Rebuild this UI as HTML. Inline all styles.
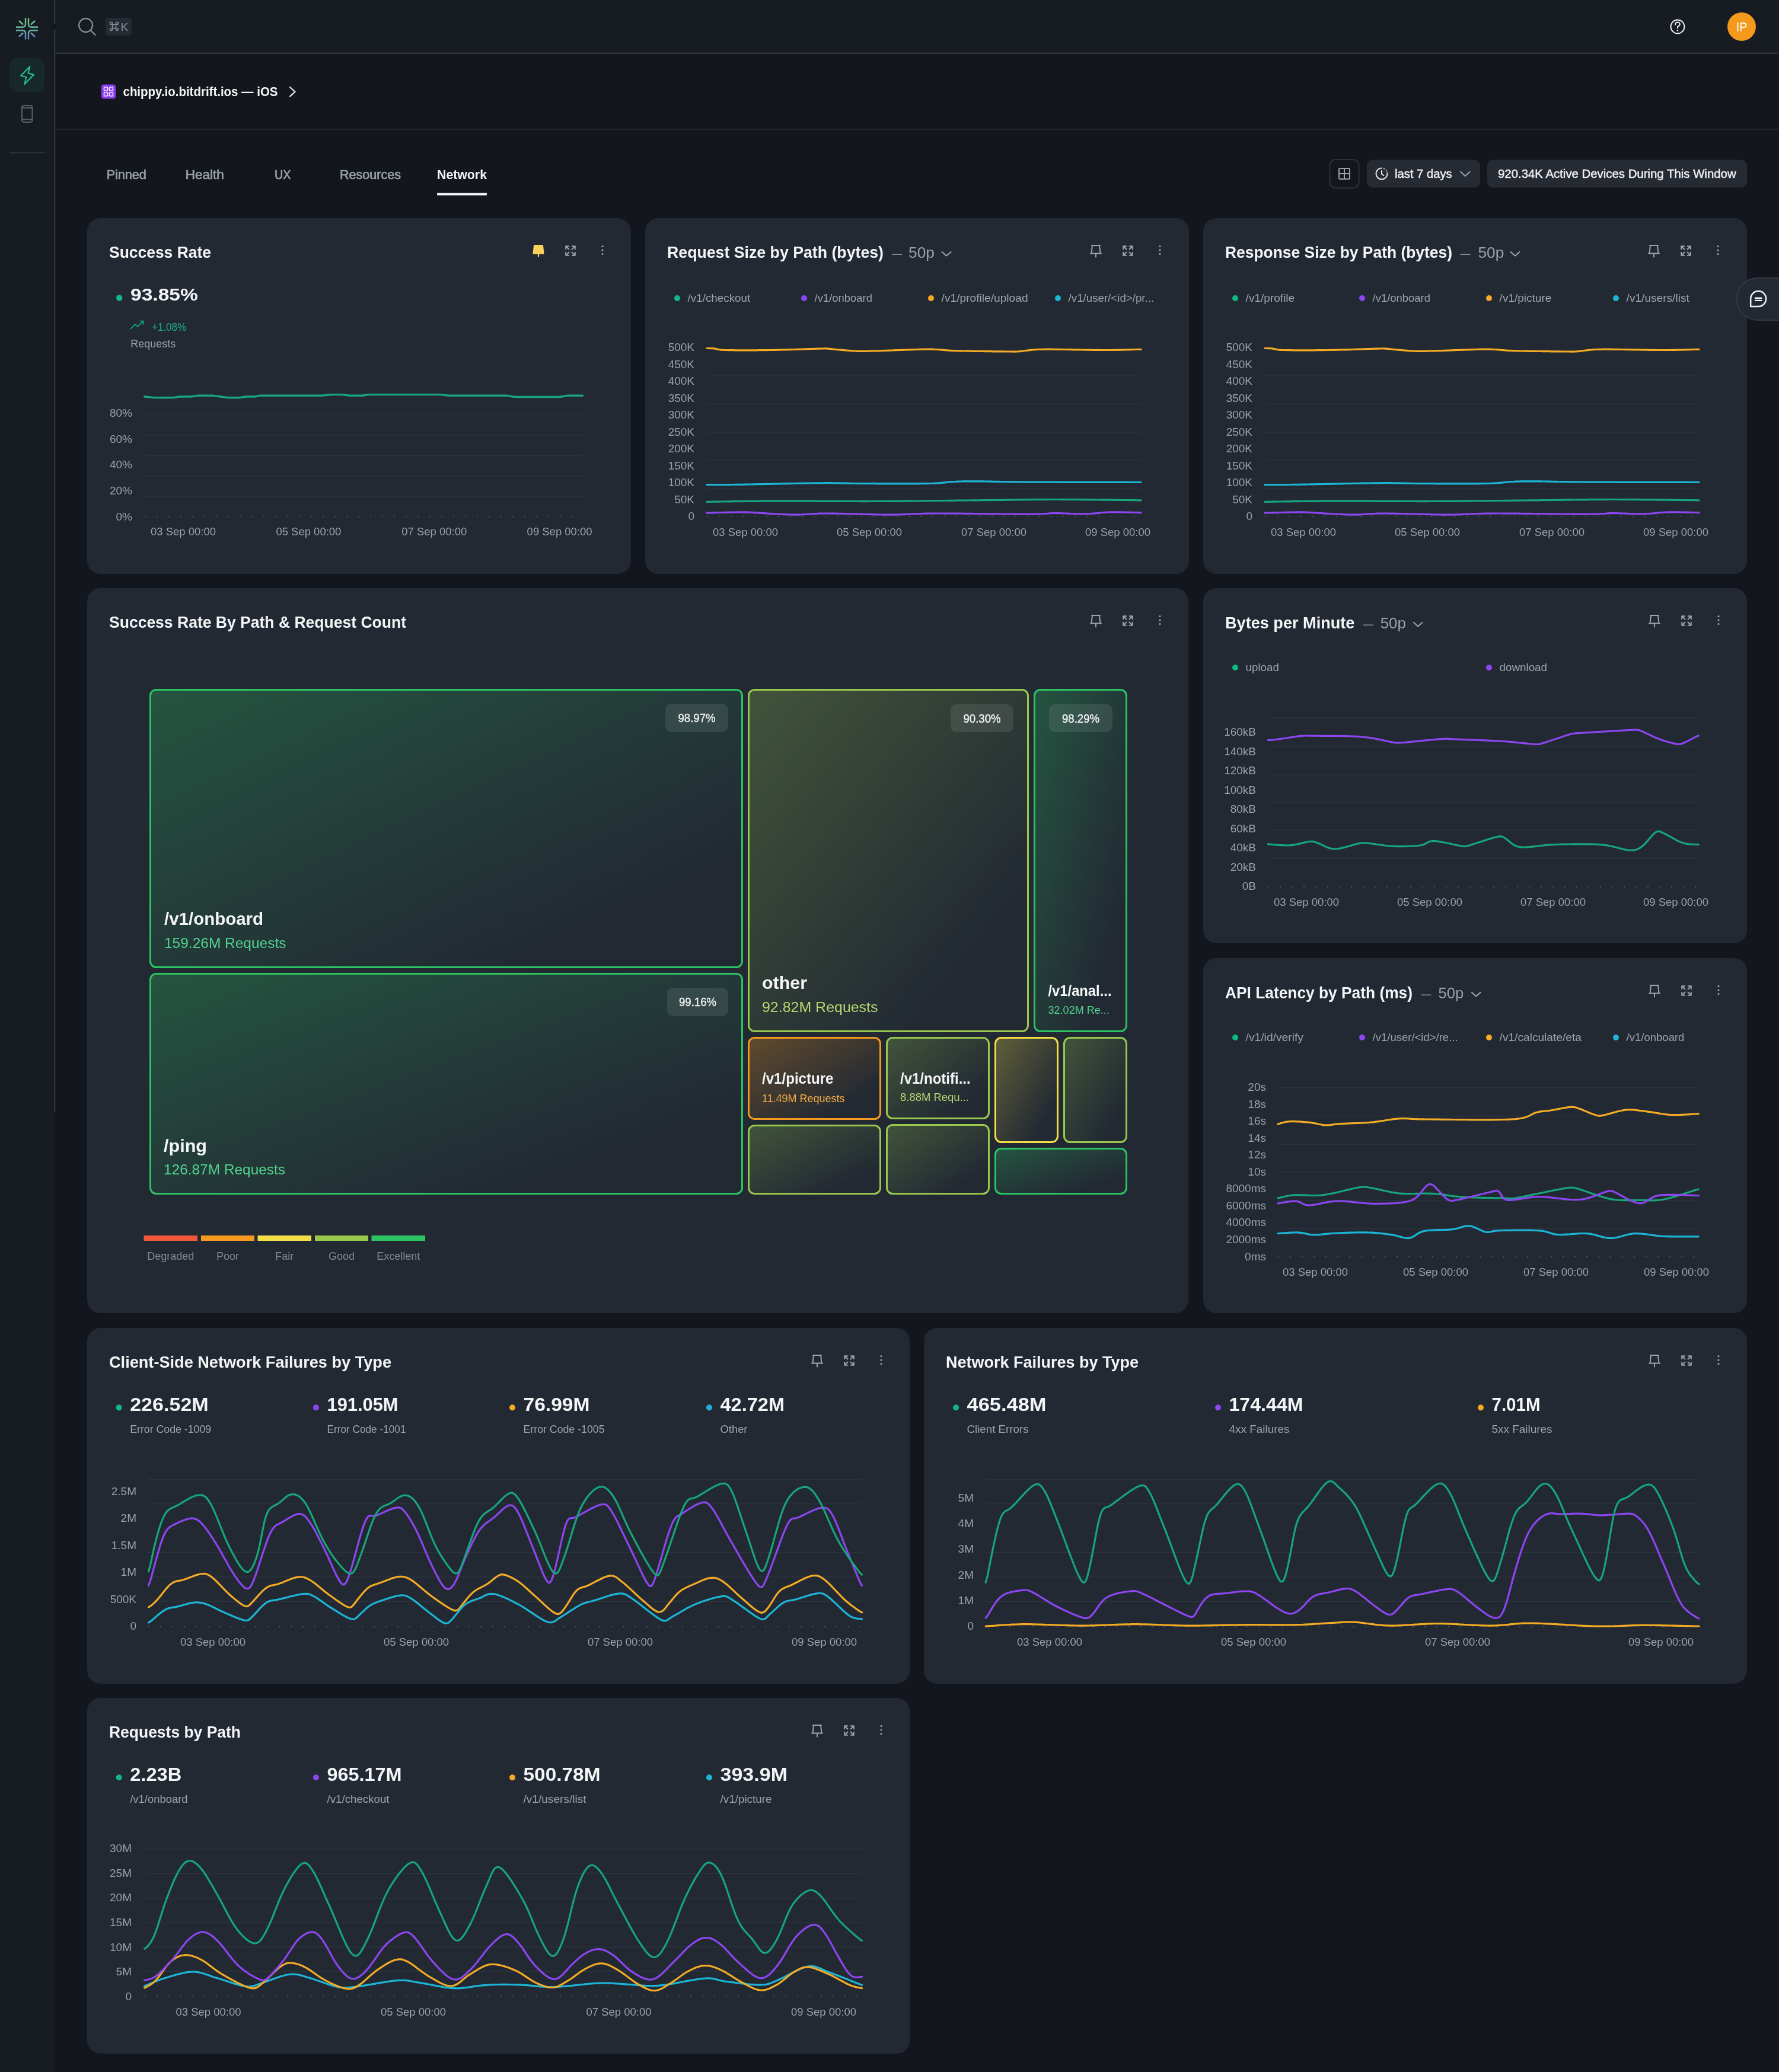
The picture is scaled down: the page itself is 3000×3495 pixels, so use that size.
<!DOCTYPE html>
<html><head><meta charset="utf-8"><title>Network</title>
<style>html,body{margin:0;padding:0;background:#13161c;width:3000px;height:3495px;overflow:hidden}
svg{display:block;will-change:transform} text{font-family:"Liberation Sans",sans-serif}</style></head>
<body><svg width="3000" height="3495" viewBox="0 0 3000 3495">
<rect x="0" y="0" width="3000" height="3495" fill="#13161c"/>
<rect x="0" y="0" width="92" height="3495" fill="#171c23"/>
<rect x="92" y="0" width="2908" height="89" fill="#171c23"/>
<rect x="92" y="88.5" width="2908" height="2.5" fill="#2c3139"/>
<rect x="92" y="217" width="2908" height="2" fill="#22262d"/>
<rect x="91.3" y="0" width="2" height="1875" fill="#33383f"/>
<defs><linearGradient id="lg" gradientUnits="userSpaceOnUse" x1="0" y1="30" x2="0" y2="67"><stop offset="0" stop-color="#72c87f"/><stop offset="0.5" stop-color="#63b59c"/><stop offset="1" stop-color="#6b7fd6"/></linearGradient></defs>
<g stroke="url(#lg)" stroke-width="2.4" fill="none" stroke-linecap="butt"><path d="M43 30.5 V40.5 Q43 45.7 37.8 45.7 H27"/><path d="M32 35 L39 41.5"/><path d="M48 30.5 V40.5 Q48 45.7 53.2 45.7 H64"/><path d="M59 35 L52 41.5"/><path d="M43 66.5 V56.5 Q43 51.2 37.8 51.2 H27"/><path d="M32 62 L39 55.5"/><path d="M48 66.5 V56.5 Q48 51.2 53.2 51.2 H64"/><path d="M59 62 L52 55.5"/></g>
<circle cx="92" cy="45" r="4.5" fill="#111419" fill-opacity="0.8"/>
<rect x="16" y="98" width="59" height="58" rx="14" fill="#17282a"/>
<path d="M50.4 112.2 L35.2 127.8 L44.3 130 L41.3 142.1 L56.9 126 L47.4 123.4 Z" fill="none" stroke="#23be8c" stroke-width="2.2" stroke-linejoin="round"/>
<rect x="37" y="178" width="17.5" height="28" rx="3.5" fill="none" stroke="#5a6069" stroke-width="2"/>
<path d="M37 182 H54.5 M37 201.5 H54.5" stroke="#5a6069" stroke-width="2"/>
<rect x="16" y="256.5" width="60" height="2" fill="#2e333b"/>
<circle cx="144.6" cy="42.6" r="11.5" fill="none" stroke="#8a9099" stroke-width="2.2"/>
<path d="M153 51.4 L160.8 59" stroke="#8a9099" stroke-width="2.2" stroke-linecap="round"/>
<rect x="178" y="30" width="44" height="30" rx="4" fill="#252a33"/>
<g fill="none" stroke="#8a9099" stroke-width="1.5"><path d="M189.5 41.5 V47.5 M195.5 41.5 V47.5 M189.5 41.5 H195.5 M189.5 47.5 H195.5"/><path d="M189.5 41.5 H187.5 A2 2 0 1 1 189.5 39.5 Z M195.5 41.5 V39.5 A2 2 0 1 1 197.5 41.5 Z M189.5 47.5 V49.5 A2 2 0 1 1 187.5 47.5 Z M195.5 47.5 H197.5 A2 2 0 1 1 195.5 49.5 Z"/></g>
<text x="203.5" y="52.0" font-size="19" fill="#8a9099">K</text>
<circle cx="2829" cy="45" r="11.5" fill="none" stroke="#e9ebee" stroke-width="2"/>
<path d="M2825.2 41.5 Q2825.2 37.5 2829 37.5 Q2832.8 37.5 2832.8 41 Q2832.8 43.5 2829 45 V47.5" fill="none" stroke="#e9ebee" stroke-width="2" stroke-linecap="round"/>
<circle cx="2829" cy="51.5" r="1.3" fill="#e9ebee"/>
<circle cx="2937" cy="45" r="24" fill="#f39a1c"/>
<text x="2937.0" y="52.5" font-size="21.5" fill="#ffffff" text-anchor="middle" textLength="18.5" lengthAdjust="spacingAndGlyphs">IP</text>
<rect x="171" y="142.5" width="24" height="24" rx="4" fill="#8a3ff2"/>
<rect x="175.5" y="147" width="6" height="6" rx="1.2" fill="none" stroke="#f5e8ff" stroke-width="1.6"/>
<rect x="184.5" y="147" width="6" height="6" rx="1.2" fill="none" stroke="#f5e8ff" stroke-width="1.6"/>
<rect x="175.5" y="156" width="6" height="6" rx="1.2" fill="none" stroke="#f5e8ff" stroke-width="1.6"/>
<rect x="184.5" y="156" width="6" height="6" rx="1.2" fill="none" stroke="#f5e8ff" stroke-width="1.6"/>
<text x="207.5" y="162.3" font-size="22" fill="#f4f5f7" font-weight="700" textLength="261" lengthAdjust="spacingAndGlyphs">chippy.io.bitdrift.ios — iOS</text>
<path d="M489 147 L497.5 154.8 L489 162.6" fill="none" stroke="#e9ebee" stroke-width="2.2" stroke-linecap="round" stroke-linejoin="round"/>
<text x="179.7" y="302.0" font-size="22" fill="#98a1aa" textLength="67" lengthAdjust="spacingAndGlyphs" stroke="#98a1aa" stroke-width="0.7">Pinned</text>
<text x="312.7" y="302.0" font-size="22" fill="#98a1aa" textLength="65" lengthAdjust="spacingAndGlyphs" stroke="#98a1aa" stroke-width="0.7">Health</text>
<text x="463.0" y="302.0" font-size="22" fill="#98a1aa" textLength="27.5" lengthAdjust="spacingAndGlyphs" stroke="#98a1aa" stroke-width="0.7">UX</text>
<text x="573.0" y="302.0" font-size="22" fill="#98a1aa" textLength="103" lengthAdjust="spacingAndGlyphs" stroke="#98a1aa" stroke-width="0.7">Resources</text>
<text x="737.0" y="302.0" font-size="22" fill="#f4f5f7" font-weight="700" textLength="84" lengthAdjust="spacingAndGlyphs">Network</text>
<rect x="737" y="325.5" width="84" height="4" rx="1" fill="#f4f5f7"/>
<rect x="2242.5" y="269" width="49" height="48" rx="10" fill="none" stroke="#2c3139" stroke-width="2"/>
<g fill="none" stroke="#9aa1ab" stroke-width="2"><rect x="2258" y="284" width="18" height="18" rx="2"/><path d="M2267 284 V302 M2258 293 H2276"/></g>
<rect x="2305" y="269.5" width="191" height="47" rx="10" fill="#262b33"/>
<path d="M2339.5 293 A9.5 9.5 0 1 1 2330 283.5" fill="none" stroke="#e6e8eb" stroke-width="2" stroke-linecap="round"/>
<path d="M2330 288 V293.5 L2333.5 296" fill="none" stroke="#e6e8eb" stroke-width="2" stroke-linecap="round"/>
<circle cx="2334" cy="284.5" r="1" fill="#e6e8eb"/><circle cx="2337.5" cy="287" r="1" fill="#e6e8eb"/><circle cx="2339" cy="290.5" r="1" fill="#e6e8eb"/>
<text x="2352.0" y="300.0" font-size="20.3" fill="#eceef1" textLength="96.7" lengthAdjust="spacingAndGlyphs" stroke="#eceef1" stroke-width="0.5">last 7 days</text>
<path d="M2463 289.5 L2470.8 297 L2478.6 289.5" fill="none" stroke="#9aa1ab" stroke-width="2" stroke-linecap="round" stroke-linejoin="round"/>
<rect x="2508" y="269.5" width="438" height="47" rx="10" fill="#262b33"/>
<text x="2526.0" y="300.0" font-size="20.3" fill="#eceef1" textLength="401.6" lengthAdjust="spacingAndGlyphs" stroke="#eceef1" stroke-width="0.5">920.34K Active Devices During This Window</text>
<rect x="147" y="368" width="917" height="600" rx="22" fill="#222933"/>
<text x="184.0" y="435.0" font-size="27" fill="#f4f5f7" font-weight="700" textLength="172" lengthAdjust="spacingAndGlyphs">Success Rate</text>
<path d="M901 414 H915 L916.5 427.5 H899.5 Z" fill="#fcd15a" stroke="#fcd15a" stroke-width="2" stroke-linejoin="round"/>
<path d="M908 427 V433.5" stroke="#fcd15a" stroke-width="2.2"/>
<g stroke="#9ba3ad" stroke-width="2" fill="none" stroke-linecap="round" stroke-linejoin="round"><path d="M954.2 420.2 V415.2 H959.2 M954.2 415.2 L959.5 420.5"/><path d="M969.8 420.2 V415.2 H964.8 M969.8 415.2 L964.5 420.5"/><path d="M954.2 425.8 V430.8 H959.2 M954.2 430.8 L959.5 425.5"/><path d="M969.8 425.8 V430.8 H964.8 M969.8 430.8 L964.5 425.5"/></g>
<circle cx="1016" cy="415.5" r="1.6" fill="#9ba3ad"/>
<circle cx="1016" cy="422" r="1.6" fill="#9ba3ad"/>
<circle cx="1016" cy="428.5" r="1.6" fill="#9ba3ad"/>
<circle cx="201.2" cy="502.5" r="5.2" fill="#10b981"/>
<text x="220.0" y="507.4" font-size="30" fill="#f4f5f7" font-weight="700" textLength="113.8" lengthAdjust="spacingAndGlyphs">93.85%</text>
<path d="M220.5 554.5 L228 547 L232 551 L241.5 541.5 M236 541.5 H241.5 V547" fill="none" stroke="#10b981" stroke-width="1.6" stroke-linecap="round" stroke-linejoin="round"/>
<text x="256.0" y="558.0" font-size="17.6" fill="#1fb27f" textLength="58" lengthAdjust="spacingAndGlyphs">+1.08%</text>
<text x="220.3" y="586.0" font-size="17.6" fill="#9ca3ab" textLength="76" lengthAdjust="spacingAndGlyphs">Requests</text>
<text x="223.0" y="703.0" font-size="19" fill="#9aa1ab" text-anchor="end">80%</text>
<text x="223.0" y="746.6" font-size="19" fill="#9aa1ab" text-anchor="end">60%</text>
<text x="223.0" y="790.2" font-size="19" fill="#9aa1ab" text-anchor="end">40%</text>
<text x="223.0" y="833.9" font-size="19" fill="#9aa1ab" text-anchor="end">20%</text>
<text x="223.0" y="877.5" font-size="19" fill="#9aa1ab" text-anchor="end">0%</text>
<path d="M244 699.6 H984" stroke="#2c333d" stroke-width="1.5"/>
<path d="M244 734.0 H984" stroke="#2c333d" stroke-width="1.5"/>
<path d="M244 768.6 H984" stroke="#2c333d" stroke-width="1.5"/>
<path d="M244 803.0 H984" stroke="#2c333d" stroke-width="1.5"/>
<path d="M244 837.9 H984" stroke="#2c333d" stroke-width="1.5"/>
<path d="M244 871.6 H984" stroke="#4a515b" stroke-width="2" stroke-dasharray="2 18"/>
<text x="254.0" y="903.0" font-size="18.5" fill="#9aa1ab" textLength="110" lengthAdjust="spacingAndGlyphs">03 Sep 00:00</text>
<text x="465.4" y="903.0" font-size="18.5" fill="#9aa1ab" textLength="110" lengthAdjust="spacingAndGlyphs">05 Sep 00:00</text>
<text x="677.3" y="903.0" font-size="18.5" fill="#9aa1ab" textLength="110" lengthAdjust="spacingAndGlyphs">07 Sep 00:00</text>
<text x="888.6" y="903.0" font-size="18.5" fill="#9aa1ab" textLength="110" lengthAdjust="spacingAndGlyphs">09 Sep 00:00</text>
<polyline points="243.5,669.0 260.6,670.8 292.7,670.8 303.3,669.0 322.6,669.0 333.2,667.3 358.9,667.3 384.5,670.8 403.7,670.8 414.4,669.0 429.4,669.0 437.9,667.3 542.6,667.3 559.6,665.6 576.7,665.6 589.5,667.3 610.9,667.3 621.6,665.6 743.3,665.6 756.1,667.3 854.4,667.3 867.2,669.5 944.1,669.5 956.9,667.3 982.5,667.3" fill="none" stroke="#17a57a" stroke-width="3.4" stroke-linejoin="round" stroke-linecap="round"/>
<rect x="1088" y="368" width="917" height="600" rx="22" fill="#222933"/>
<text x="1125.0" y="435.0" font-size="27" fill="#f4f5f7" font-weight="700" textLength="365" lengthAdjust="spacingAndGlyphs">Request Size by Path (bytes)</text>
<text x="1504.0" y="435.0" font-size="22" fill="#8f96a0" textLength="17" lengthAdjust="spacingAndGlyphs">—</text>
<text x="1532.0" y="435.0" font-size="25" fill="#9aa1ab" textLength="44" lengthAdjust="spacingAndGlyphs">50p</text>
<path d="M1588.5 425 L1596 431.5 L1603.5 425" fill="none" stroke="#9aa1ab" stroke-width="2.2" stroke-linecap="round" stroke-linejoin="round"/>
<path d="M1841 414 H1855 M1842 414 L1840.5 427.5 M1854 414 L1855.5 427.5 M1839 427.5 H1857 M1848 427.5 V433.5" stroke="#9ba3ad" stroke-width="2" fill="none" stroke-linecap="round"/>
<g stroke="#9ba3ad" stroke-width="2" fill="none" stroke-linecap="round" stroke-linejoin="round"><path d="M1894.2 420.2 V415.2 H1899.2 M1894.2 415.2 L1899.5 420.5"/><path d="M1909.8 420.2 V415.2 H1904.8 M1909.8 415.2 L1904.5 420.5"/><path d="M1894.2 425.8 V430.8 H1899.2 M1894.2 430.8 L1899.5 425.5"/><path d="M1909.8 425.8 V430.8 H1904.8 M1909.8 430.8 L1904.5 425.5"/></g>
<circle cx="1956" cy="415.5" r="1.6" fill="#9ba3ad"/>
<circle cx="1956" cy="422" r="1.6" fill="#9ba3ad"/>
<circle cx="1956" cy="428.5" r="1.6" fill="#9ba3ad"/>
<circle cx="1142.0" cy="503.0" r="5" fill="#10b981"/>
<text x="1159.6" y="509.0" font-size="19" fill="#9ca3ab" textLength="105.7" lengthAdjust="spacingAndGlyphs">/v1/checkout</text>
<circle cx="1356.0" cy="503.0" r="5" fill="#8c46f0"/>
<text x="1373.6" y="509.0" font-size="19" fill="#9ca3ab" textLength="97.3" lengthAdjust="spacingAndGlyphs">/v1/onboard</text>
<circle cx="1570.0" cy="503.0" r="5" fill="#f3ab25"/>
<text x="1587.6" y="509.0" font-size="19" fill="#9ca3ab" textLength="146" lengthAdjust="spacingAndGlyphs">/v1/profile/upload</text>
<circle cx="1784.0" cy="503.0" r="5" fill="#1db5d6"/>
<text x="1801.6" y="509.0" font-size="19" fill="#9ca3ab" textLength="144.5" lengthAdjust="spacingAndGlyphs">/v1/user/&lt;id&gt;/pr...</text>
<text x="1171.0" y="592.0" font-size="19" fill="#9aa1ab" text-anchor="end">500K</text>
<text x="1171.0" y="620.5" font-size="19" fill="#9aa1ab" text-anchor="end">450K</text>
<text x="1171.0" y="649.0" font-size="19" fill="#9aa1ab" text-anchor="end">400K</text>
<text x="1171.0" y="677.5" font-size="19" fill="#9aa1ab" text-anchor="end">350K</text>
<text x="1171.0" y="706.0" font-size="19" fill="#9aa1ab" text-anchor="end">300K</text>
<text x="1171.0" y="734.5" font-size="19" fill="#9aa1ab" text-anchor="end">250K</text>
<text x="1171.0" y="763.0" font-size="19" fill="#9aa1ab" text-anchor="end">200K</text>
<text x="1171.0" y="791.5" font-size="19" fill="#9aa1ab" text-anchor="end">150K</text>
<text x="1171.0" y="820.0" font-size="19" fill="#9aa1ab" text-anchor="end">100K</text>
<text x="1171.0" y="848.5" font-size="19" fill="#9aa1ab" text-anchor="end">50K</text>
<text x="1171.0" y="877.0" font-size="19" fill="#9aa1ab" text-anchor="end">0</text>
<path d="M1192 634.0 H1924" stroke="#2c333d" stroke-width="1.5"/>
<path d="M1192 682.0 H1924" stroke="#2c333d" stroke-width="1.5"/>
<path d="M1192 729.0 H1924" stroke="#2c333d" stroke-width="1.5"/>
<path d="M1192 776.0 H1924" stroke="#2c333d" stroke-width="1.5"/>
<path d="M1192 824.0 H1924" stroke="#2c333d" stroke-width="1.5"/>
<path d="M1192 871.0 H1924" stroke="#4a515b" stroke-width="2" stroke-dasharray="2 18"/>
<text x="1202.0" y="904.0" font-size="18.5" fill="#9aa1ab" textLength="110" lengthAdjust="spacingAndGlyphs">03 Sep 00:00</text>
<text x="1411.0" y="904.0" font-size="18.5" fill="#9aa1ab" textLength="110" lengthAdjust="spacingAndGlyphs">05 Sep 00:00</text>
<text x="1621.0" y="904.0" font-size="18.5" fill="#9aa1ab" textLength="110" lengthAdjust="spacingAndGlyphs">07 Sep 00:00</text>
<text x="1830.0" y="904.0" font-size="18.5" fill="#9aa1ab" textLength="110" lengthAdjust="spacingAndGlyphs">09 Sep 00:00</text>
<path d="M1192.0 587.5 L1195.0 587.5 L1198.0 587.6 L1201.0 587.7 L1204.0 587.9 L1207.0 588.4 L1210.0 589.1 L1213.0 589.7 L1216.0 590.1 L1219.0 590.3 L1222.0 590.5 L1225.0 590.5 L1228.0 590.6 L1231.0 590.7 L1234.0 590.7 L1237.0 590.7 L1240.0 590.8 L1243.0 590.8 L1246.0 590.8 L1249.0 590.8 L1252.0 590.8 L1255.0 590.8 L1258.0 590.8 L1261.0 590.8 L1264.0 590.8 L1267.0 590.8 L1270.0 590.8 L1273.0 590.8 L1276.0 590.8 L1279.0 590.7 L1282.0 590.7 L1285.0 590.7 L1288.0 590.7 L1291.0 590.6 L1294.0 590.6 L1297.0 590.5 L1300.0 590.5 L1303.0 590.4 L1306.0 590.4 L1309.0 590.3 L1312.0 590.2 L1315.0 590.2 L1318.0 590.1 L1321.0 590.0 L1324.0 589.9 L1327.0 589.8 L1330.0 589.8 L1333.0 589.7 L1336.0 589.6 L1339.0 589.5 L1342.0 589.4 L1345.0 589.3 L1348.0 589.2 L1351.0 589.1 L1354.0 589.0 L1357.0 588.9 L1360.0 588.8 L1363.0 588.7 L1366.0 588.6 L1369.0 588.5 L1372.0 588.4 L1375.0 588.3 L1378.0 588.2 L1381.0 588.1 L1384.0 588.1 L1387.0 588.0 L1390.0 587.9 L1393.0 587.9 L1396.0 588.1 L1399.0 588.4 L1402.0 588.7 L1405.0 589.0 L1408.0 589.3 L1411.0 589.6 L1414.0 589.8 L1417.0 590.1 L1420.0 590.4 L1423.0 590.7 L1426.0 590.9 L1429.0 591.2 L1432.0 591.4 L1435.0 591.6 L1438.0 591.8 L1441.0 592.0 L1444.0 592.2 L1447.0 592.3 L1450.0 592.4 L1453.0 592.4 L1456.0 592.4 L1459.0 592.4 L1462.0 592.3 L1465.0 592.2 L1468.0 592.1 L1471.0 592.0 L1474.0 591.9 L1477.0 591.8 L1480.0 591.8 L1483.0 591.7 L1486.0 591.6 L1489.0 591.5 L1492.0 591.4 L1495.0 591.3 L1498.0 591.2 L1501.0 591.1 L1504.0 591.0 L1507.0 590.8 L1510.0 590.7 L1513.0 590.6 L1516.0 590.5 L1519.0 590.4 L1522.0 590.3 L1525.0 590.2 L1528.0 590.1 L1531.0 590.0 L1534.0 589.9 L1537.0 589.8 L1540.0 589.7 L1543.0 589.6 L1546.0 589.5 L1549.0 589.4 L1552.0 589.3 L1555.0 589.2 L1558.0 589.2 L1561.0 589.1 L1564.0 589.1 L1567.0 589.1 L1570.0 589.1 L1573.0 589.2 L1576.0 589.4 L1579.0 589.5 L1582.0 589.7 L1585.0 589.9 L1588.1 590.1 L1591.1 590.4 L1594.1 590.6 L1597.1 590.9 L1600.1 591.1 L1603.1 591.3 L1606.1 591.4 L1609.1 591.6 L1612.1 591.7 L1615.1 591.8 L1618.1 591.8 L1621.1 591.9 L1624.1 592.0 L1627.1 592.0 L1630.1 592.1 L1633.1 592.2 L1636.1 592.2 L1639.1 592.3 L1642.1 592.3 L1645.1 592.4 L1648.1 592.4 L1651.1 592.5 L1654.1 592.5 L1657.1 592.5 L1660.1 592.6 L1663.1 592.6 L1666.1 592.7 L1669.1 592.7 L1672.1 592.7 L1675.1 592.8 L1678.1 592.8 L1681.1 592.9 L1684.1 592.9 L1687.1 592.9 L1690.1 592.9 L1693.1 593.0 L1696.1 593.0 L1699.1 593.0 L1702.1 593.0 L1705.1 593.0 L1708.1 593.1 L1711.1 593.1 L1714.1 593.0 L1717.1 592.9 L1720.1 592.7 L1723.1 592.3 L1726.1 591.9 L1729.1 591.5 L1732.1 591.2 L1735.1 590.8 L1738.1 590.4 L1741.1 590.1 L1744.1 589.9 L1747.1 589.7 L1750.1 589.5 L1753.1 589.4 L1756.1 589.3 L1759.1 589.3 L1762.1 589.2 L1765.1 589.2 L1768.1 589.2 L1771.1 589.2 L1774.1 589.2 L1777.1 589.3 L1780.1 589.3 L1783.1 589.3 L1786.1 589.4 L1789.1 589.4 L1792.1 589.5 L1795.1 589.5 L1798.1 589.6 L1801.1 589.6 L1804.1 589.7 L1807.1 589.7 L1810.1 589.8 L1813.1 589.8 L1816.1 589.9 L1819.1 589.9 L1822.1 590.0 L1825.1 590.0 L1828.1 590.1 L1831.1 590.1 L1834.1 590.2 L1837.1 590.2 L1840.1 590.3 L1843.1 590.3 L1846.1 590.4 L1849.1 590.4 L1852.1 590.4 L1855.1 590.5 L1858.1 590.5 L1861.1 590.5 L1864.1 590.5 L1867.1 590.5 L1870.1 590.5 L1873.1 590.5 L1876.1 590.4 L1879.1 590.4 L1882.1 590.3 L1885.1 590.3 L1888.1 590.2 L1891.1 590.2 L1894.1 590.1 L1897.1 590.0 L1900.1 589.9 L1903.1 589.9 L1906.1 589.8 L1909.1 589.7 L1912.1 589.6 L1915.1 589.5 L1918.1 589.4 L1921.1 589.3 L1924.1 589.3" fill="none" stroke="#f3ab25" stroke-width="3.2" stroke-linejoin="round" stroke-linecap="round"/>
<path d="M1192.0 817.8 L1195.0 817.7 L1198.0 817.7 L1201.0 817.7 L1204.0 817.7 L1207.0 817.7 L1210.0 817.7 L1213.0 817.7 L1216.0 817.7 L1219.0 817.7 L1222.0 817.6 L1225.0 817.6 L1228.0 817.6 L1231.0 817.6 L1234.0 817.5 L1237.0 817.5 L1240.0 817.4 L1243.0 817.4 L1246.0 817.4 L1249.0 817.3 L1252.0 817.3 L1255.0 817.2 L1258.0 817.2 L1261.0 817.1 L1264.0 817.0 L1267.0 817.0 L1270.0 816.9 L1273.0 816.9 L1276.0 816.8 L1279.0 816.7 L1282.0 816.7 L1285.0 816.6 L1288.0 816.6 L1291.0 816.5 L1294.0 816.4 L1297.0 816.4 L1300.0 816.3 L1303.0 816.2 L1306.0 816.2 L1309.0 816.1 L1312.0 816.1 L1315.0 816.0 L1318.0 815.9 L1321.0 815.9 L1324.0 815.8 L1327.0 815.7 L1330.0 815.7 L1333.0 815.6 L1336.0 815.6 L1339.0 815.5 L1342.0 815.4 L1345.0 815.4 L1348.0 815.3 L1351.0 815.3 L1354.0 815.2 L1357.0 815.2 L1360.0 815.1 L1363.0 815.1 L1366.0 815.0 L1369.0 815.0 L1372.0 814.9 L1375.0 814.9 L1378.0 814.8 L1381.0 814.8 L1384.0 814.8 L1387.0 814.8 L1390.0 814.7 L1393.0 814.7 L1396.0 814.7 L1399.0 814.7 L1402.0 814.7 L1405.0 814.8 L1408.0 814.8 L1411.0 814.8 L1414.0 814.9 L1417.0 814.9 L1420.0 815.0 L1423.0 815.1 L1426.0 815.2 L1429.0 815.2 L1432.0 815.3 L1435.0 815.4 L1438.0 815.4 L1441.0 815.5 L1444.0 815.5 L1447.0 815.6 L1450.0 815.6 L1453.0 815.6 L1456.0 815.6 L1459.0 815.6 L1462.0 815.7 L1465.0 815.7 L1468.0 815.7 L1471.0 815.7 L1474.0 815.7 L1477.0 815.7 L1480.0 815.8 L1483.0 815.8 L1486.0 815.8 L1489.0 815.8 L1492.0 815.8 L1495.0 815.8 L1498.0 815.8 L1501.0 815.8 L1504.0 815.8 L1507.0 815.9 L1510.0 815.9 L1513.0 815.9 L1516.0 815.9 L1519.0 815.9 L1522.0 815.9 L1525.0 815.9 L1528.0 815.9 L1531.0 815.9 L1534.0 815.9 L1537.0 815.9 L1540.0 815.8 L1543.0 815.8 L1546.0 815.8 L1549.0 815.8 L1552.0 815.8 L1555.0 815.7 L1558.0 815.7 L1561.0 815.7 L1564.0 815.6 L1567.0 815.5 L1570.0 815.5 L1573.0 815.4 L1576.0 815.2 L1579.0 815.1 L1582.0 814.9 L1585.0 814.7 L1588.1 814.4 L1591.1 814.1 L1594.1 813.8 L1597.1 813.5 L1600.1 813.2 L1603.1 812.9 L1606.1 812.7 L1609.1 812.5 L1612.1 812.4 L1615.1 812.2 L1618.1 812.1 L1621.1 812.0 L1624.1 811.9 L1627.1 811.8 L1630.1 811.8 L1633.1 811.8 L1636.1 811.8 L1639.1 811.8 L1642.1 811.8 L1645.1 811.8 L1648.1 811.8 L1651.1 811.9 L1654.1 811.9 L1657.1 811.9 L1660.1 812.0 L1663.1 812.0 L1666.1 812.1 L1669.1 812.2 L1672.1 812.2 L1675.1 812.3 L1678.1 812.3 L1681.1 812.4 L1684.1 812.4 L1687.1 812.5 L1690.1 812.5 L1693.1 812.6 L1696.1 812.6 L1699.1 812.7 L1702.1 812.7 L1705.1 812.8 L1708.1 812.8 L1711.1 812.8 L1714.1 812.9 L1717.1 812.9 L1720.1 812.9 L1723.1 813.0 L1726.1 813.0 L1729.1 813.0 L1732.1 813.0 L1735.1 813.1 L1738.1 813.1 L1741.1 813.1 L1744.1 813.1 L1747.1 813.1 L1750.1 813.1 L1753.1 813.1 L1756.1 813.2 L1759.1 813.2 L1762.1 813.2 L1765.1 813.2 L1768.1 813.2 L1771.1 813.2 L1774.1 813.2 L1777.1 813.2 L1780.1 813.2 L1783.1 813.2 L1786.1 813.2 L1789.1 813.3 L1792.1 813.3 L1795.1 813.3 L1798.1 813.3 L1801.1 813.3 L1804.1 813.3 L1807.1 813.3 L1810.1 813.3 L1813.1 813.3 L1816.1 813.3 L1819.1 813.3 L1822.1 813.3 L1825.1 813.3 L1828.1 813.3 L1831.1 813.3 L1834.1 813.3 L1837.1 813.4 L1840.1 813.4 L1843.1 813.4 L1846.1 813.4 L1849.1 813.4 L1852.1 813.4 L1855.1 813.4 L1858.1 813.4 L1861.1 813.4 L1864.1 813.4 L1867.1 813.4 L1870.1 813.4 L1873.1 813.4 L1876.1 813.4 L1879.1 813.4 L1882.1 813.4 L1885.1 813.4 L1888.1 813.4 L1891.1 813.4 L1894.1 813.4 L1897.1 813.4 L1900.1 813.4 L1903.1 813.5 L1906.1 813.5 L1909.1 813.5 L1912.1 813.5 L1915.1 813.5 L1918.1 813.5 L1921.1 813.5 L1924.1 813.5" fill="none" stroke="#1db5d6" stroke-width="3.2" stroke-linejoin="round" stroke-linecap="round"/>
<path d="M1192.0 846.4 L1195.0 846.3 L1198.0 846.3 L1201.0 846.3 L1204.0 846.2 L1207.0 846.2 L1210.0 846.1 L1213.0 846.1 L1216.0 846.0 L1219.0 846.0 L1222.0 846.0 L1225.0 845.9 L1228.0 845.9 L1231.0 845.8 L1234.0 845.8 L1237.0 845.7 L1240.0 845.7 L1243.0 845.7 L1246.0 845.6 L1249.0 845.6 L1252.0 845.6 L1255.0 845.5 L1258.0 845.5 L1261.0 845.4 L1264.0 845.4 L1267.0 845.4 L1270.0 845.4 L1273.0 845.3 L1276.0 845.3 L1279.0 845.3 L1282.0 845.2 L1285.0 845.2 L1288.0 845.2 L1291.0 845.2 L1294.0 845.2 L1297.0 845.1 L1300.0 845.1 L1303.0 845.1 L1306.0 845.1 L1309.0 845.1 L1312.0 845.1 L1315.0 845.1 L1318.0 845.1 L1321.0 845.1 L1324.0 845.1 L1327.0 845.1 L1330.0 845.1 L1333.0 845.1 L1336.0 845.1 L1339.0 845.1 L1342.0 845.1 L1345.0 845.1 L1348.0 845.1 L1351.0 845.2 L1354.0 845.2 L1357.0 845.2 L1360.0 845.2 L1363.0 845.2 L1366.0 845.2 L1369.0 845.2 L1372.0 845.2 L1375.0 845.3 L1378.0 845.3 L1381.0 845.3 L1384.0 845.3 L1387.0 845.3 L1390.0 845.3 L1393.0 845.4 L1396.0 845.4 L1399.0 845.4 L1402.0 845.4 L1405.0 845.4 L1408.0 845.4 L1411.0 845.4 L1414.0 845.4 L1417.0 845.5 L1420.0 845.5 L1423.0 845.5 L1426.0 845.5 L1429.0 845.5 L1432.0 845.5 L1435.0 845.5 L1438.0 845.5 L1441.0 845.5 L1444.0 845.5 L1447.0 845.5 L1450.0 845.6 L1453.0 845.6 L1456.0 845.6 L1459.0 845.6 L1462.0 845.6 L1465.0 845.6 L1468.0 845.5 L1471.0 845.5 L1474.0 845.5 L1477.0 845.5 L1480.0 845.5 L1483.0 845.5 L1486.0 845.5 L1489.0 845.5 L1492.0 845.5 L1495.0 845.4 L1498.0 845.4 L1501.0 845.4 L1504.0 845.4 L1507.0 845.4 L1510.0 845.3 L1513.0 845.3 L1516.0 845.3 L1519.0 845.3 L1522.0 845.2 L1525.0 845.2 L1528.0 845.2 L1531.0 845.2 L1534.0 845.1 L1537.0 845.1 L1540.0 845.1 L1543.0 845.0 L1546.0 845.0 L1549.0 845.0 L1552.0 844.9 L1555.0 844.9 L1558.0 844.9 L1561.0 844.8 L1564.0 844.8 L1567.0 844.8 L1570.0 844.7 L1573.0 844.7 L1576.0 844.7 L1579.0 844.6 L1582.0 844.6 L1585.0 844.6 L1588.1 844.5 L1591.1 844.5 L1594.1 844.5 L1597.1 844.4 L1600.1 844.4 L1603.1 844.3 L1606.1 844.3 L1609.1 844.3 L1612.1 844.2 L1615.1 844.2 L1618.1 844.2 L1621.1 844.1 L1624.1 844.1 L1627.1 844.1 L1630.1 844.0 L1633.1 844.0 L1636.1 844.0 L1639.1 843.9 L1642.1 843.9 L1645.1 843.9 L1648.1 843.8 L1651.1 843.8 L1654.1 843.8 L1657.1 843.7 L1660.1 843.7 L1663.1 843.7 L1666.1 843.6 L1669.1 843.6 L1672.1 843.6 L1675.1 843.5 L1678.1 843.5 L1681.1 843.4 L1684.1 843.4 L1687.1 843.4 L1690.1 843.3 L1693.1 843.3 L1696.1 843.2 L1699.1 843.2 L1702.1 843.2 L1705.1 843.1 L1708.1 843.1 L1711.1 843.0 L1714.1 843.0 L1717.1 843.0 L1720.1 842.9 L1723.1 842.9 L1726.1 842.9 L1729.1 842.8 L1732.1 842.8 L1735.1 842.8 L1738.1 842.7 L1741.1 842.7 L1744.1 842.7 L1747.1 842.7 L1750.1 842.6 L1753.1 842.6 L1756.1 842.6 L1759.1 842.6 L1762.1 842.6 L1765.1 842.6 L1768.1 842.6 L1771.1 842.5 L1774.1 842.5 L1777.1 842.5 L1780.1 842.5 L1783.1 842.5 L1786.1 842.5 L1789.1 842.6 L1792.1 842.6 L1795.1 842.6 L1798.1 842.6 L1801.1 842.6 L1804.1 842.6 L1807.1 842.6 L1810.1 842.7 L1813.1 842.7 L1816.1 842.7 L1819.1 842.7 L1822.1 842.7 L1825.1 842.8 L1828.1 842.8 L1831.1 842.8 L1834.1 842.9 L1837.1 842.9 L1840.1 842.9 L1843.1 842.9 L1846.1 843.0 L1849.1 843.0 L1852.1 843.0 L1855.1 843.1 L1858.1 843.1 L1861.1 843.1 L1864.1 843.1 L1867.1 843.2 L1870.1 843.2 L1873.1 843.2 L1876.1 843.3 L1879.1 843.3 L1882.1 843.3 L1885.1 843.4 L1888.1 843.4 L1891.1 843.5 L1894.1 843.5 L1897.1 843.5 L1900.1 843.6 L1903.1 843.6 L1906.1 843.6 L1909.1 843.7 L1912.1 843.7 L1915.1 843.7 L1918.1 843.8 L1921.1 843.8 L1924.1 843.8" fill="none" stroke="#17a57a" stroke-width="3.2" stroke-linejoin="round" stroke-linecap="round"/>
<path d="M1192.0 865.1 L1195.0 865.1 L1198.0 865.0 L1201.0 865.0 L1204.0 864.9 L1207.0 864.8 L1210.0 864.7 L1213.0 864.7 L1216.0 864.6 L1219.0 864.5 L1222.0 864.4 L1225.0 864.4 L1228.0 864.3 L1231.0 864.2 L1234.0 864.2 L1237.0 864.1 L1240.0 864.0 L1243.0 864.0 L1246.0 863.9 L1249.0 863.9 L1252.0 863.8 L1255.0 863.9 L1258.0 863.9 L1261.0 864.1 L1264.0 864.2 L1267.0 864.4 L1270.0 864.6 L1273.0 864.7 L1276.0 864.9 L1279.0 865.1 L1282.0 865.3 L1285.0 865.5 L1288.0 865.7 L1291.0 865.9 L1294.0 866.1 L1297.0 866.3 L1300.0 866.4 L1303.0 866.6 L1306.0 866.8 L1309.0 867.0 L1312.0 867.1 L1315.0 867.3 L1318.0 867.4 L1321.0 867.6 L1324.0 867.7 L1327.0 867.8 L1330.0 867.9 L1333.0 868.0 L1336.0 868.1 L1339.0 868.1 L1342.0 868.2 L1345.0 868.1 L1348.0 868.1 L1351.0 868.0 L1354.0 867.8 L1357.0 867.7 L1360.0 867.5 L1363.0 867.3 L1366.0 867.0 L1369.0 866.8 L1372.0 866.7 L1375.0 866.5 L1378.0 866.4 L1381.0 866.2 L1384.0 866.2 L1387.0 866.1 L1390.0 866.1 L1393.0 866.0 L1396.0 866.0 L1399.0 866.1 L1402.0 866.1 L1405.0 866.1 L1408.0 866.2 L1411.0 866.2 L1414.0 866.3 L1417.0 866.4 L1420.0 866.4 L1423.0 866.5 L1426.0 866.6 L1429.0 866.6 L1432.0 866.7 L1435.0 866.8 L1438.0 866.9 L1441.0 867.0 L1444.0 867.1 L1447.0 867.1 L1450.0 867.2 L1453.0 867.3 L1456.0 867.4 L1459.0 867.5 L1462.0 867.5 L1465.0 867.6 L1468.0 867.7 L1471.0 867.7 L1474.0 867.8 L1477.0 867.9 L1480.0 867.9 L1483.0 868.0 L1486.0 868.0 L1489.0 868.1 L1492.0 868.1 L1495.0 868.1 L1498.0 868.1 L1501.0 868.1 L1504.0 868.1 L1507.0 868.1 L1510.0 868.1 L1513.0 868.0 L1516.0 867.9 L1519.0 867.9 L1522.0 867.8 L1525.0 867.6 L1528.0 867.5 L1531.0 867.4 L1534.0 867.2 L1537.0 867.1 L1540.0 866.9 L1543.0 866.8 L1546.0 866.7 L1549.0 866.6 L1552.0 866.5 L1555.0 866.4 L1558.0 866.3 L1561.0 866.2 L1564.0 866.2 L1567.0 866.1 L1570.0 866.1 L1573.0 866.1 L1576.0 866.0 L1579.0 866.0 L1582.0 866.0 L1585.0 866.0 L1588.1 866.0 L1591.1 866.0 L1594.1 866.1 L1597.1 866.1 L1600.1 866.1 L1603.1 866.1 L1606.1 866.1 L1609.1 866.1 L1612.1 866.2 L1615.1 866.2 L1618.1 866.2 L1621.1 866.2 L1624.1 866.3 L1627.1 866.3 L1630.1 866.3 L1633.1 866.4 L1636.1 866.4 L1639.1 866.4 L1642.1 866.5 L1645.1 866.5 L1648.1 866.5 L1651.1 866.6 L1654.1 866.6 L1657.1 866.6 L1660.1 866.7 L1663.1 866.7 L1666.1 866.7 L1669.1 866.8 L1672.1 866.8 L1675.1 866.8 L1678.1 866.9 L1681.1 866.9 L1684.1 866.9 L1687.1 867.0 L1690.1 867.0 L1693.1 867.0 L1696.1 867.1 L1699.1 867.1 L1702.1 867.1 L1705.1 867.1 L1708.1 867.2 L1711.1 867.2 L1714.1 867.2 L1717.1 867.2 L1720.1 867.3 L1723.1 867.3 L1726.1 867.3 L1729.1 867.3 L1732.1 867.3 L1735.1 867.3 L1738.1 867.3 L1741.1 867.3 L1744.1 867.2 L1747.1 867.2 L1750.1 867.1 L1753.1 867.0 L1756.1 866.9 L1759.1 866.7 L1762.1 866.5 L1765.1 866.3 L1768.1 866.0 L1771.1 865.8 L1774.1 865.7 L1777.1 865.6 L1780.1 865.6 L1783.1 865.7 L1786.1 865.7 L1789.1 865.8 L1792.1 865.9 L1795.1 866.0 L1798.1 866.1 L1801.1 866.2 L1804.1 866.3 L1807.1 866.5 L1810.1 866.6 L1813.1 866.7 L1816.1 866.8 L1819.1 866.8 L1822.1 866.9 L1825.1 866.9 L1828.1 866.9 L1831.1 866.8 L1834.1 866.7 L1837.1 866.5 L1840.1 866.3 L1843.1 866.1 L1846.1 865.8 L1849.1 865.6 L1852.1 865.3 L1855.1 865.0 L1858.1 864.7 L1861.1 864.5 L1864.1 864.3 L1867.1 864.1 L1870.1 864.0 L1873.1 863.9 L1876.1 863.9 L1879.1 863.8 L1882.1 863.8 L1885.1 863.9 L1888.1 863.9 L1891.1 863.9 L1894.1 864.0 L1897.1 864.1 L1900.1 864.1 L1903.1 864.2 L1906.1 864.3 L1909.1 864.4 L1912.1 864.4 L1915.1 864.5 L1918.1 864.6 L1921.1 864.7 L1924.1 864.7" fill="none" stroke="#8c46f0" stroke-width="3.2" stroke-linejoin="round" stroke-linecap="round"/>
<rect x="2029" y="368" width="917" height="600" rx="22" fill="#222933"/>
<text x="2066.0" y="435.0" font-size="27" fill="#f4f5f7" font-weight="700" textLength="383" lengthAdjust="spacingAndGlyphs">Response Size by Path (bytes)</text>
<text x="2462.6" y="435.0" font-size="22" fill="#8f96a0" textLength="17" lengthAdjust="spacingAndGlyphs">—</text>
<text x="2492.4" y="435.0" font-size="25" fill="#9aa1ab" textLength="44" lengthAdjust="spacingAndGlyphs">50p</text>
<path d="M2547.5 425 L2555 431.5 L2562.5 425" fill="none" stroke="#9aa1ab" stroke-width="2.2" stroke-linecap="round" stroke-linejoin="round"/>
<path d="M2782 414 H2796 M2783 414 L2781.5 427.5 M2795 414 L2796.5 427.5 M2780 427.5 H2798 M2789 427.5 V433.5" stroke="#9ba3ad" stroke-width="2" fill="none" stroke-linecap="round"/>
<g stroke="#9ba3ad" stroke-width="2" fill="none" stroke-linecap="round" stroke-linejoin="round"><path d="M2835.2 420.2 V415.2 H2840.2 M2835.2 415.2 L2840.5 420.5"/><path d="M2850.8 420.2 V415.2 H2845.8 M2850.8 415.2 L2845.5 420.5"/><path d="M2835.2 425.8 V430.8 H2840.2 M2835.2 430.8 L2840.5 425.5"/><path d="M2850.8 425.8 V430.8 H2845.8 M2850.8 430.8 L2845.5 425.5"/></g>
<circle cx="2897" cy="415.5" r="1.6" fill="#9ba3ad"/>
<circle cx="2897" cy="422" r="1.6" fill="#9ba3ad"/>
<circle cx="2897" cy="428.5" r="1.6" fill="#9ba3ad"/>
<circle cx="2083.0" cy="503.0" r="5" fill="#10b981"/>
<text x="2100.6" y="509.0" font-size="19" fill="#9ca3ab" textLength="82.6" lengthAdjust="spacingAndGlyphs">/v1/profile</text>
<circle cx="2297.0" cy="503.0" r="5" fill="#8c46f0"/>
<text x="2314.6" y="509.0" font-size="19" fill="#9ca3ab" textLength="97.3" lengthAdjust="spacingAndGlyphs">/v1/onboard</text>
<circle cx="2511.0" cy="503.0" r="5" fill="#f3ab25"/>
<text x="2528.6" y="509.0" font-size="19" fill="#9ca3ab" textLength="87.7" lengthAdjust="spacingAndGlyphs">/v1/picture</text>
<circle cx="2725.0" cy="503.0" r="5" fill="#1db5d6"/>
<text x="2742.6" y="509.0" font-size="19" fill="#9ca3ab" textLength="106.2" lengthAdjust="spacingAndGlyphs">/v1/users/list</text>
<text x="2112.0" y="592.0" font-size="19" fill="#9aa1ab" text-anchor="end">500K</text>
<text x="2112.0" y="620.5" font-size="19" fill="#9aa1ab" text-anchor="end">450K</text>
<text x="2112.0" y="649.0" font-size="19" fill="#9aa1ab" text-anchor="end">400K</text>
<text x="2112.0" y="677.5" font-size="19" fill="#9aa1ab" text-anchor="end">350K</text>
<text x="2112.0" y="706.0" font-size="19" fill="#9aa1ab" text-anchor="end">300K</text>
<text x="2112.0" y="734.5" font-size="19" fill="#9aa1ab" text-anchor="end">250K</text>
<text x="2112.0" y="763.0" font-size="19" fill="#9aa1ab" text-anchor="end">200K</text>
<text x="2112.0" y="791.5" font-size="19" fill="#9aa1ab" text-anchor="end">150K</text>
<text x="2112.0" y="820.0" font-size="19" fill="#9aa1ab" text-anchor="end">100K</text>
<text x="2112.0" y="848.5" font-size="19" fill="#9aa1ab" text-anchor="end">50K</text>
<text x="2112.0" y="877.0" font-size="19" fill="#9aa1ab" text-anchor="end">0</text>
<path d="M2133 634.0 H2865" stroke="#2c333d" stroke-width="1.5"/>
<path d="M2133 682.0 H2865" stroke="#2c333d" stroke-width="1.5"/>
<path d="M2133 729.0 H2865" stroke="#2c333d" stroke-width="1.5"/>
<path d="M2133 776.0 H2865" stroke="#2c333d" stroke-width="1.5"/>
<path d="M2133 824.0 H2865" stroke="#2c333d" stroke-width="1.5"/>
<path d="M2133 871.0 H2865" stroke="#4a515b" stroke-width="2" stroke-dasharray="2 18"/>
<text x="2143.0" y="904.0" font-size="18.5" fill="#9aa1ab" textLength="110" lengthAdjust="spacingAndGlyphs">03 Sep 00:00</text>
<text x="2352.0" y="904.0" font-size="18.5" fill="#9aa1ab" textLength="110" lengthAdjust="spacingAndGlyphs">05 Sep 00:00</text>
<text x="2562.0" y="904.0" font-size="18.5" fill="#9aa1ab" textLength="110" lengthAdjust="spacingAndGlyphs">07 Sep 00:00</text>
<text x="2771.0" y="904.0" font-size="18.5" fill="#9aa1ab" textLength="110" lengthAdjust="spacingAndGlyphs">09 Sep 00:00</text>
<path d="M2133.0 587.5 L2136.0 587.5 L2139.0 587.6 L2142.0 587.7 L2145.0 587.9 L2148.0 588.4 L2151.0 589.1 L2154.0 589.7 L2157.0 590.1 L2160.0 590.3 L2163.0 590.5 L2166.0 590.5 L2169.0 590.6 L2172.0 590.7 L2175.0 590.7 L2178.0 590.7 L2181.0 590.8 L2184.0 590.8 L2187.0 590.8 L2190.0 590.8 L2193.0 590.8 L2196.0 590.8 L2199.0 590.8 L2202.0 590.8 L2205.0 590.8 L2208.0 590.8 L2211.0 590.8 L2214.0 590.8 L2217.0 590.8 L2220.0 590.7 L2223.0 590.7 L2226.0 590.7 L2229.0 590.7 L2232.0 590.6 L2235.0 590.6 L2238.0 590.5 L2241.0 590.5 L2244.0 590.4 L2247.0 590.4 L2250.0 590.3 L2253.0 590.2 L2256.0 590.2 L2259.0 590.1 L2262.0 590.0 L2265.0 589.9 L2268.0 589.8 L2271.0 589.8 L2274.0 589.7 L2277.0 589.6 L2280.0 589.5 L2283.0 589.4 L2286.0 589.3 L2289.0 589.2 L2292.0 589.1 L2295.0 589.0 L2298.0 588.9 L2301.0 588.8 L2304.0 588.7 L2307.0 588.6 L2310.0 588.5 L2313.0 588.4 L2316.0 588.3 L2319.0 588.2 L2322.0 588.1 L2325.0 588.1 L2328.0 588.0 L2331.0 587.9 L2334.0 587.9 L2337.0 588.1 L2340.0 588.4 L2343.0 588.7 L2346.0 589.0 L2349.0 589.3 L2352.0 589.6 L2355.0 589.8 L2358.0 590.1 L2361.0 590.4 L2364.0 590.7 L2367.0 590.9 L2370.0 591.2 L2373.0 591.4 L2376.0 591.6 L2379.0 591.8 L2382.0 592.0 L2385.0 592.2 L2388.0 592.3 L2391.0 592.4 L2394.0 592.4 L2397.0 592.4 L2400.0 592.4 L2403.0 592.3 L2406.0 592.2 L2409.0 592.1 L2412.0 592.0 L2415.0 591.9 L2418.0 591.8 L2421.0 591.8 L2424.0 591.7 L2427.0 591.6 L2430.0 591.5 L2433.0 591.4 L2436.0 591.3 L2439.0 591.2 L2442.0 591.1 L2445.0 591.0 L2448.0 590.8 L2451.0 590.7 L2454.0 590.6 L2457.0 590.5 L2460.0 590.4 L2463.0 590.3 L2466.0 590.2 L2469.0 590.1 L2472.0 590.0 L2475.0 589.9 L2478.0 589.8 L2481.0 589.7 L2484.0 589.6 L2487.0 589.5 L2490.0 589.4 L2493.0 589.3 L2496.0 589.2 L2499.0 589.2 L2502.0 589.1 L2505.0 589.1 L2508.0 589.1 L2511.0 589.1 L2514.0 589.2 L2517.0 589.4 L2520.0 589.5 L2523.0 589.7 L2526.0 589.9 L2529.1 590.1 L2532.1 590.4 L2535.1 590.6 L2538.1 590.9 L2541.1 591.1 L2544.1 591.3 L2547.1 591.4 L2550.1 591.6 L2553.1 591.7 L2556.1 591.8 L2559.1 591.8 L2562.1 591.9 L2565.1 592.0 L2568.1 592.0 L2571.1 592.1 L2574.1 592.2 L2577.1 592.2 L2580.1 592.3 L2583.1 592.3 L2586.1 592.4 L2589.1 592.4 L2592.1 592.5 L2595.1 592.5 L2598.1 592.5 L2601.1 592.6 L2604.1 592.6 L2607.1 592.7 L2610.1 592.7 L2613.1 592.7 L2616.1 592.8 L2619.1 592.8 L2622.1 592.9 L2625.1 592.9 L2628.1 592.9 L2631.1 592.9 L2634.1 593.0 L2637.1 593.0 L2640.1 593.0 L2643.1 593.0 L2646.1 593.0 L2649.1 593.1 L2652.1 593.1 L2655.1 593.0 L2658.1 592.9 L2661.1 592.7 L2664.1 592.3 L2667.1 591.9 L2670.1 591.5 L2673.1 591.2 L2676.1 590.8 L2679.1 590.4 L2682.1 590.1 L2685.1 589.9 L2688.1 589.7 L2691.1 589.5 L2694.1 589.4 L2697.1 589.3 L2700.1 589.3 L2703.1 589.2 L2706.1 589.2 L2709.1 589.2 L2712.1 589.2 L2715.1 589.2 L2718.1 589.3 L2721.1 589.3 L2724.1 589.3 L2727.1 589.4 L2730.1 589.4 L2733.1 589.5 L2736.1 589.5 L2739.1 589.6 L2742.1 589.6 L2745.1 589.7 L2748.1 589.7 L2751.1 589.8 L2754.1 589.8 L2757.1 589.9 L2760.1 589.9 L2763.1 590.0 L2766.1 590.0 L2769.1 590.1 L2772.1 590.1 L2775.1 590.2 L2778.1 590.2 L2781.1 590.3 L2784.1 590.3 L2787.1 590.4 L2790.1 590.4 L2793.1 590.4 L2796.1 590.5 L2799.1 590.5 L2802.1 590.5 L2805.1 590.5 L2808.1 590.5 L2811.1 590.5 L2814.1 590.5 L2817.1 590.4 L2820.1 590.4 L2823.1 590.3 L2826.1 590.3 L2829.1 590.2 L2832.1 590.2 L2835.1 590.1 L2838.1 590.0 L2841.1 589.9 L2844.1 589.9 L2847.1 589.8 L2850.1 589.7 L2853.1 589.6 L2856.1 589.5 L2859.1 589.4 L2862.1 589.3 L2865.1 589.3" fill="none" stroke="#f3ab25" stroke-width="3.2" stroke-linejoin="round" stroke-linecap="round"/>
<path d="M2133.0 817.8 L2136.0 817.7 L2139.0 817.7 L2142.0 817.7 L2145.0 817.7 L2148.0 817.7 L2151.0 817.7 L2154.0 817.7 L2157.0 817.7 L2160.0 817.7 L2163.0 817.6 L2166.0 817.6 L2169.0 817.6 L2172.0 817.6 L2175.0 817.5 L2178.0 817.5 L2181.0 817.4 L2184.0 817.4 L2187.0 817.4 L2190.0 817.3 L2193.0 817.3 L2196.0 817.2 L2199.0 817.2 L2202.0 817.1 L2205.0 817.0 L2208.0 817.0 L2211.0 816.9 L2214.0 816.9 L2217.0 816.8 L2220.0 816.7 L2223.0 816.7 L2226.0 816.6 L2229.0 816.6 L2232.0 816.5 L2235.0 816.4 L2238.0 816.4 L2241.0 816.3 L2244.0 816.2 L2247.0 816.2 L2250.0 816.1 L2253.0 816.1 L2256.0 816.0 L2259.0 815.9 L2262.0 815.9 L2265.0 815.8 L2268.0 815.7 L2271.0 815.7 L2274.0 815.6 L2277.0 815.6 L2280.0 815.5 L2283.0 815.4 L2286.0 815.4 L2289.0 815.3 L2292.0 815.3 L2295.0 815.2 L2298.0 815.2 L2301.0 815.1 L2304.0 815.1 L2307.0 815.0 L2310.0 815.0 L2313.0 814.9 L2316.0 814.9 L2319.0 814.8 L2322.0 814.8 L2325.0 814.8 L2328.0 814.8 L2331.0 814.7 L2334.0 814.7 L2337.0 814.7 L2340.0 814.7 L2343.0 814.7 L2346.0 814.8 L2349.0 814.8 L2352.0 814.8 L2355.0 814.9 L2358.0 814.9 L2361.0 815.0 L2364.0 815.1 L2367.0 815.2 L2370.0 815.2 L2373.0 815.3 L2376.0 815.4 L2379.0 815.4 L2382.0 815.5 L2385.0 815.5 L2388.0 815.6 L2391.0 815.6 L2394.0 815.6 L2397.0 815.6 L2400.0 815.6 L2403.0 815.7 L2406.0 815.7 L2409.0 815.7 L2412.0 815.7 L2415.0 815.7 L2418.0 815.7 L2421.0 815.8 L2424.0 815.8 L2427.0 815.8 L2430.0 815.8 L2433.0 815.8 L2436.0 815.8 L2439.0 815.8 L2442.0 815.8 L2445.0 815.8 L2448.0 815.9 L2451.0 815.9 L2454.0 815.9 L2457.0 815.9 L2460.0 815.9 L2463.0 815.9 L2466.0 815.9 L2469.0 815.9 L2472.0 815.9 L2475.0 815.9 L2478.0 815.9 L2481.0 815.8 L2484.0 815.8 L2487.0 815.8 L2490.0 815.8 L2493.0 815.8 L2496.0 815.7 L2499.0 815.7 L2502.0 815.7 L2505.0 815.6 L2508.0 815.5 L2511.0 815.5 L2514.0 815.4 L2517.0 815.2 L2520.0 815.1 L2523.0 814.9 L2526.0 814.7 L2529.1 814.4 L2532.1 814.1 L2535.1 813.8 L2538.1 813.5 L2541.1 813.2 L2544.1 812.9 L2547.1 812.7 L2550.1 812.5 L2553.1 812.4 L2556.1 812.2 L2559.1 812.1 L2562.1 812.0 L2565.1 811.9 L2568.1 811.8 L2571.1 811.8 L2574.1 811.8 L2577.1 811.8 L2580.1 811.8 L2583.1 811.8 L2586.1 811.8 L2589.1 811.8 L2592.1 811.9 L2595.1 811.9 L2598.1 811.9 L2601.1 812.0 L2604.1 812.0 L2607.1 812.1 L2610.1 812.2 L2613.1 812.2 L2616.1 812.3 L2619.1 812.3 L2622.1 812.4 L2625.1 812.4 L2628.1 812.5 L2631.1 812.5 L2634.1 812.6 L2637.1 812.6 L2640.1 812.7 L2643.1 812.7 L2646.1 812.8 L2649.1 812.8 L2652.1 812.8 L2655.1 812.9 L2658.1 812.9 L2661.1 812.9 L2664.1 813.0 L2667.1 813.0 L2670.1 813.0 L2673.1 813.0 L2676.1 813.1 L2679.1 813.1 L2682.1 813.1 L2685.1 813.1 L2688.1 813.1 L2691.1 813.1 L2694.1 813.1 L2697.1 813.2 L2700.1 813.2 L2703.1 813.2 L2706.1 813.2 L2709.1 813.2 L2712.1 813.2 L2715.1 813.2 L2718.1 813.2 L2721.1 813.2 L2724.1 813.2 L2727.1 813.2 L2730.1 813.3 L2733.1 813.3 L2736.1 813.3 L2739.1 813.3 L2742.1 813.3 L2745.1 813.3 L2748.1 813.3 L2751.1 813.3 L2754.1 813.3 L2757.1 813.3 L2760.1 813.3 L2763.1 813.3 L2766.1 813.3 L2769.1 813.3 L2772.1 813.3 L2775.1 813.3 L2778.1 813.4 L2781.1 813.4 L2784.1 813.4 L2787.1 813.4 L2790.1 813.4 L2793.1 813.4 L2796.1 813.4 L2799.1 813.4 L2802.1 813.4 L2805.1 813.4 L2808.1 813.4 L2811.1 813.4 L2814.1 813.4 L2817.1 813.4 L2820.1 813.4 L2823.1 813.4 L2826.1 813.4 L2829.1 813.4 L2832.1 813.4 L2835.1 813.4 L2838.1 813.4 L2841.1 813.4 L2844.1 813.5 L2847.1 813.5 L2850.1 813.5 L2853.1 813.5 L2856.1 813.5 L2859.1 813.5 L2862.1 813.5 L2865.1 813.5" fill="none" stroke="#1db5d6" stroke-width="3.2" stroke-linejoin="round" stroke-linecap="round"/>
<path d="M2133.0 846.4 L2136.0 846.3 L2139.0 846.3 L2142.0 846.3 L2145.0 846.2 L2148.0 846.2 L2151.0 846.1 L2154.0 846.1 L2157.0 846.0 L2160.0 846.0 L2163.0 846.0 L2166.0 845.9 L2169.0 845.9 L2172.0 845.8 L2175.0 845.8 L2178.0 845.7 L2181.0 845.7 L2184.0 845.7 L2187.0 845.6 L2190.0 845.6 L2193.0 845.6 L2196.0 845.5 L2199.0 845.5 L2202.0 845.4 L2205.0 845.4 L2208.0 845.4 L2211.0 845.4 L2214.0 845.3 L2217.0 845.3 L2220.0 845.3 L2223.0 845.2 L2226.0 845.2 L2229.0 845.2 L2232.0 845.2 L2235.0 845.2 L2238.0 845.1 L2241.0 845.1 L2244.0 845.1 L2247.0 845.1 L2250.0 845.1 L2253.0 845.1 L2256.0 845.1 L2259.0 845.1 L2262.0 845.1 L2265.0 845.1 L2268.0 845.1 L2271.0 845.1 L2274.0 845.1 L2277.0 845.1 L2280.0 845.1 L2283.0 845.1 L2286.0 845.1 L2289.0 845.1 L2292.0 845.2 L2295.0 845.2 L2298.0 845.2 L2301.0 845.2 L2304.0 845.2 L2307.0 845.2 L2310.0 845.2 L2313.0 845.2 L2316.0 845.3 L2319.0 845.3 L2322.0 845.3 L2325.0 845.3 L2328.0 845.3 L2331.0 845.3 L2334.0 845.4 L2337.0 845.4 L2340.0 845.4 L2343.0 845.4 L2346.0 845.4 L2349.0 845.4 L2352.0 845.4 L2355.0 845.4 L2358.0 845.5 L2361.0 845.5 L2364.0 845.5 L2367.0 845.5 L2370.0 845.5 L2373.0 845.5 L2376.0 845.5 L2379.0 845.5 L2382.0 845.5 L2385.0 845.5 L2388.0 845.5 L2391.0 845.6 L2394.0 845.6 L2397.0 845.6 L2400.0 845.6 L2403.0 845.6 L2406.0 845.6 L2409.0 845.5 L2412.0 845.5 L2415.0 845.5 L2418.0 845.5 L2421.0 845.5 L2424.0 845.5 L2427.0 845.5 L2430.0 845.5 L2433.0 845.5 L2436.0 845.4 L2439.0 845.4 L2442.0 845.4 L2445.0 845.4 L2448.0 845.4 L2451.0 845.3 L2454.0 845.3 L2457.0 845.3 L2460.0 845.3 L2463.0 845.2 L2466.0 845.2 L2469.0 845.2 L2472.0 845.2 L2475.0 845.1 L2478.0 845.1 L2481.0 845.1 L2484.0 845.0 L2487.0 845.0 L2490.0 845.0 L2493.0 844.9 L2496.0 844.9 L2499.0 844.9 L2502.0 844.8 L2505.0 844.8 L2508.0 844.8 L2511.0 844.7 L2514.0 844.7 L2517.0 844.7 L2520.0 844.6 L2523.0 844.6 L2526.0 844.6 L2529.1 844.5 L2532.1 844.5 L2535.1 844.5 L2538.1 844.4 L2541.1 844.4 L2544.1 844.3 L2547.1 844.3 L2550.1 844.3 L2553.1 844.2 L2556.1 844.2 L2559.1 844.2 L2562.1 844.1 L2565.1 844.1 L2568.1 844.1 L2571.1 844.0 L2574.1 844.0 L2577.1 844.0 L2580.1 843.9 L2583.1 843.9 L2586.1 843.9 L2589.1 843.8 L2592.1 843.8 L2595.1 843.8 L2598.1 843.7 L2601.1 843.7 L2604.1 843.7 L2607.1 843.6 L2610.1 843.6 L2613.1 843.6 L2616.1 843.5 L2619.1 843.5 L2622.1 843.4 L2625.1 843.4 L2628.1 843.4 L2631.1 843.3 L2634.1 843.3 L2637.1 843.2 L2640.1 843.2 L2643.1 843.2 L2646.1 843.1 L2649.1 843.1 L2652.1 843.0 L2655.1 843.0 L2658.1 843.0 L2661.1 842.9 L2664.1 842.9 L2667.1 842.9 L2670.1 842.8 L2673.1 842.8 L2676.1 842.8 L2679.1 842.7 L2682.1 842.7 L2685.1 842.7 L2688.1 842.7 L2691.1 842.6 L2694.1 842.6 L2697.1 842.6 L2700.1 842.6 L2703.1 842.6 L2706.1 842.6 L2709.1 842.6 L2712.1 842.5 L2715.1 842.5 L2718.1 842.5 L2721.1 842.5 L2724.1 842.5 L2727.1 842.5 L2730.1 842.6 L2733.1 842.6 L2736.1 842.6 L2739.1 842.6 L2742.1 842.6 L2745.1 842.6 L2748.1 842.6 L2751.1 842.7 L2754.1 842.7 L2757.1 842.7 L2760.1 842.7 L2763.1 842.7 L2766.1 842.8 L2769.1 842.8 L2772.1 842.8 L2775.1 842.9 L2778.1 842.9 L2781.1 842.9 L2784.1 842.9 L2787.1 843.0 L2790.1 843.0 L2793.1 843.0 L2796.1 843.1 L2799.1 843.1 L2802.1 843.1 L2805.1 843.1 L2808.1 843.2 L2811.1 843.2 L2814.1 843.2 L2817.1 843.3 L2820.1 843.3 L2823.1 843.3 L2826.1 843.4 L2829.1 843.4 L2832.1 843.5 L2835.1 843.5 L2838.1 843.5 L2841.1 843.6 L2844.1 843.6 L2847.1 843.6 L2850.1 843.7 L2853.1 843.7 L2856.1 843.7 L2859.1 843.8 L2862.1 843.8 L2865.1 843.8" fill="none" stroke="#17a57a" stroke-width="3.2" stroke-linejoin="round" stroke-linecap="round"/>
<path d="M2133.0 865.1 L2136.0 865.1 L2139.0 865.0 L2142.0 865.0 L2145.0 864.9 L2148.0 864.8 L2151.0 864.7 L2154.0 864.7 L2157.0 864.6 L2160.0 864.5 L2163.0 864.4 L2166.0 864.4 L2169.0 864.3 L2172.0 864.2 L2175.0 864.2 L2178.0 864.1 L2181.0 864.0 L2184.0 864.0 L2187.0 863.9 L2190.0 863.9 L2193.0 863.8 L2196.0 863.9 L2199.0 863.9 L2202.0 864.1 L2205.0 864.2 L2208.0 864.4 L2211.0 864.6 L2214.0 864.7 L2217.0 864.9 L2220.0 865.1 L2223.0 865.3 L2226.0 865.5 L2229.0 865.7 L2232.0 865.9 L2235.0 866.1 L2238.0 866.3 L2241.0 866.4 L2244.0 866.6 L2247.0 866.8 L2250.0 867.0 L2253.0 867.1 L2256.0 867.3 L2259.0 867.4 L2262.0 867.6 L2265.0 867.7 L2268.0 867.8 L2271.0 867.9 L2274.0 868.0 L2277.0 868.1 L2280.0 868.1 L2283.0 868.2 L2286.0 868.1 L2289.0 868.1 L2292.0 868.0 L2295.0 867.8 L2298.0 867.7 L2301.0 867.5 L2304.0 867.3 L2307.0 867.0 L2310.0 866.8 L2313.0 866.7 L2316.0 866.5 L2319.0 866.4 L2322.0 866.2 L2325.0 866.2 L2328.0 866.1 L2331.0 866.1 L2334.0 866.0 L2337.0 866.0 L2340.0 866.1 L2343.0 866.1 L2346.0 866.1 L2349.0 866.2 L2352.0 866.2 L2355.0 866.3 L2358.0 866.4 L2361.0 866.4 L2364.0 866.5 L2367.0 866.6 L2370.0 866.6 L2373.0 866.7 L2376.0 866.8 L2379.0 866.9 L2382.0 867.0 L2385.0 867.1 L2388.0 867.1 L2391.0 867.2 L2394.0 867.3 L2397.0 867.4 L2400.0 867.5 L2403.0 867.5 L2406.0 867.6 L2409.0 867.7 L2412.0 867.7 L2415.0 867.8 L2418.0 867.9 L2421.0 867.9 L2424.0 868.0 L2427.0 868.0 L2430.0 868.1 L2433.0 868.1 L2436.0 868.1 L2439.0 868.1 L2442.0 868.1 L2445.0 868.1 L2448.0 868.1 L2451.0 868.1 L2454.0 868.0 L2457.0 867.9 L2460.0 867.9 L2463.0 867.8 L2466.0 867.6 L2469.0 867.5 L2472.0 867.4 L2475.0 867.2 L2478.0 867.1 L2481.0 866.9 L2484.0 866.8 L2487.0 866.7 L2490.0 866.6 L2493.0 866.5 L2496.0 866.4 L2499.0 866.3 L2502.0 866.2 L2505.0 866.2 L2508.0 866.1 L2511.0 866.1 L2514.0 866.1 L2517.0 866.0 L2520.0 866.0 L2523.0 866.0 L2526.0 866.0 L2529.1 866.0 L2532.1 866.0 L2535.1 866.1 L2538.1 866.1 L2541.1 866.1 L2544.1 866.1 L2547.1 866.1 L2550.1 866.1 L2553.1 866.2 L2556.1 866.2 L2559.1 866.2 L2562.1 866.2 L2565.1 866.3 L2568.1 866.3 L2571.1 866.3 L2574.1 866.4 L2577.1 866.4 L2580.1 866.4 L2583.1 866.5 L2586.1 866.5 L2589.1 866.5 L2592.1 866.6 L2595.1 866.6 L2598.1 866.6 L2601.1 866.7 L2604.1 866.7 L2607.1 866.7 L2610.1 866.8 L2613.1 866.8 L2616.1 866.8 L2619.1 866.9 L2622.1 866.9 L2625.1 866.9 L2628.1 867.0 L2631.1 867.0 L2634.1 867.0 L2637.1 867.1 L2640.1 867.1 L2643.1 867.1 L2646.1 867.1 L2649.1 867.2 L2652.1 867.2 L2655.1 867.2 L2658.1 867.2 L2661.1 867.3 L2664.1 867.3 L2667.1 867.3 L2670.1 867.3 L2673.1 867.3 L2676.1 867.3 L2679.1 867.3 L2682.1 867.3 L2685.1 867.2 L2688.1 867.2 L2691.1 867.1 L2694.1 867.0 L2697.1 866.9 L2700.1 866.7 L2703.1 866.5 L2706.1 866.3 L2709.1 866.0 L2712.1 865.8 L2715.1 865.7 L2718.1 865.6 L2721.1 865.6 L2724.1 865.7 L2727.1 865.7 L2730.1 865.8 L2733.1 865.9 L2736.1 866.0 L2739.1 866.1 L2742.1 866.2 L2745.1 866.3 L2748.1 866.5 L2751.1 866.6 L2754.1 866.7 L2757.1 866.8 L2760.1 866.8 L2763.1 866.9 L2766.1 866.9 L2769.1 866.9 L2772.1 866.8 L2775.1 866.7 L2778.1 866.5 L2781.1 866.3 L2784.1 866.1 L2787.1 865.8 L2790.1 865.6 L2793.1 865.3 L2796.1 865.0 L2799.1 864.7 L2802.1 864.5 L2805.1 864.3 L2808.1 864.1 L2811.1 864.0 L2814.1 863.9 L2817.1 863.9 L2820.1 863.8 L2823.1 863.8 L2826.1 863.9 L2829.1 863.9 L2832.1 863.9 L2835.1 864.0 L2838.1 864.1 L2841.1 864.1 L2844.1 864.2 L2847.1 864.3 L2850.1 864.4 L2853.1 864.4 L2856.1 864.5 L2859.1 864.6 L2862.1 864.7 L2865.1 864.7" fill="none" stroke="#8c46f0" stroke-width="3.2" stroke-linejoin="round" stroke-linecap="round"/>
<rect x="2029" y="992" width="917" height="599" rx="22" fill="#222933"/>
<text x="2066.0" y="1060.0" font-size="27" fill="#f4f5f7" font-weight="700" textLength="218.4" lengthAdjust="spacingAndGlyphs">Bytes per Minute</text>
<text x="2299.0" y="1060.0" font-size="22" fill="#8f96a0" textLength="17" lengthAdjust="spacingAndGlyphs">—</text>
<text x="2327.7" y="1060.0" font-size="25" fill="#9aa1ab" textLength="43.3" lengthAdjust="spacingAndGlyphs">50p</text>
<path d="M2384 1050 L2391.2 1056.5 L2398.5 1050" fill="none" stroke="#9aa1ab" stroke-width="2.2" stroke-linecap="round" stroke-linejoin="round"/>
<path d="M2783 1038 H2797 M2784 1038 L2782.5 1051.5 M2796 1038 L2797.5 1051.5 M2781 1051.5 H2799 M2790 1051.5 V1057.5" stroke="#9ba3ad" stroke-width="2" fill="none" stroke-linecap="round"/>
<g stroke="#9ba3ad" stroke-width="2" fill="none" stroke-linecap="round" stroke-linejoin="round"><path d="M2836.2 1044.2 V1039.2 H2841.2 M2836.2 1039.2 L2841.5 1044.5"/><path d="M2851.8 1044.2 V1039.2 H2846.8 M2851.8 1039.2 L2846.5 1044.5"/><path d="M2836.2 1049.8 V1054.8 H2841.2 M2836.2 1054.8 L2841.5 1049.5"/><path d="M2851.8 1049.8 V1054.8 H2846.8 M2851.8 1054.8 L2846.5 1049.5"/></g>
<circle cx="2898" cy="1039.5" r="1.6" fill="#9ba3ad"/>
<circle cx="2898" cy="1046" r="1.6" fill="#9ba3ad"/>
<circle cx="2898" cy="1052.5" r="1.6" fill="#9ba3ad"/>
<circle cx="2083" cy="1126" r="5" fill="#10b981"/>
<text x="2100.6" y="1132.0" font-size="19" fill="#9ca3ab" textLength="56.2" lengthAdjust="spacingAndGlyphs">upload</text>
<circle cx="2511" cy="1126" r="5" fill="#8c46f0"/>
<text x="2528.6" y="1132.0" font-size="19" fill="#9ca3ab" textLength="80.4" lengthAdjust="spacingAndGlyphs">download</text>
<text x="2118.0" y="1241.0" font-size="19" fill="#9aa1ab" text-anchor="end">160kB</text>
<text x="2118.0" y="1273.5" font-size="19" fill="#9aa1ab" text-anchor="end">140kB</text>
<text x="2118.0" y="1306.0" font-size="19" fill="#9aa1ab" text-anchor="end">120kB</text>
<text x="2118.0" y="1338.5" font-size="19" fill="#9aa1ab" text-anchor="end">100kB</text>
<text x="2118.0" y="1371.0" font-size="19" fill="#9aa1ab" text-anchor="end">80kB</text>
<text x="2118.0" y="1403.5" font-size="19" fill="#9aa1ab" text-anchor="end">60kB</text>
<text x="2118.0" y="1436.0" font-size="19" fill="#9aa1ab" text-anchor="end">40kB</text>
<text x="2118.0" y="1468.5" font-size="19" fill="#9aa1ab" text-anchor="end">20kB</text>
<text x="2118.0" y="1501.0" font-size="19" fill="#9aa1ab" text-anchor="end">0B</text>
<path d="M2138 1210.4 H2864" stroke="#2c333d" stroke-width="1.5"/>
<path d="M2138 1259.5 H2864" stroke="#2c333d" stroke-width="1.5"/>
<path d="M2138 1307.3 H2864" stroke="#2c333d" stroke-width="1.5"/>
<path d="M2138 1353.9 H2864" stroke="#2c333d" stroke-width="1.5"/>
<path d="M2138 1400.5 H2864" stroke="#2c333d" stroke-width="1.5"/>
<path d="M2138 1448.3 H2864" stroke="#2c333d" stroke-width="1.5"/>
<path d="M2138 1496.0 H2864" stroke="#4a515b" stroke-width="2" stroke-dasharray="2 18"/>
<text x="2148.0" y="1528.0" font-size="18.5" fill="#9aa1ab" textLength="110" lengthAdjust="spacingAndGlyphs">03 Sep 00:00</text>
<text x="2356.0" y="1528.0" font-size="18.5" fill="#9aa1ab" textLength="110" lengthAdjust="spacingAndGlyphs">05 Sep 00:00</text>
<text x="2564.0" y="1528.0" font-size="18.5" fill="#9aa1ab" textLength="110" lengthAdjust="spacingAndGlyphs">07 Sep 00:00</text>
<text x="2771.0" y="1528.0" font-size="18.5" fill="#9aa1ab" textLength="110" lengthAdjust="spacingAndGlyphs">09 Sep 00:00</text>
<path d="M2138.3 1248.6 L2141.3 1248.4 L2144.3 1248.2 L2147.4 1247.9 L2150.4 1247.5 L2153.4 1247.2 L2156.4 1246.8 L2159.4 1246.4 L2162.4 1245.9 L2165.4 1245.5 L2168.4 1245.0 L2171.5 1244.5 L2174.5 1244.1 L2177.5 1243.6 L2180.5 1243.2 L2183.5 1242.7 L2186.5 1242.3 L2189.5 1241.9 L2192.5 1241.6 L2195.5 1241.3 L2198.6 1241.1 L2201.6 1241.0 L2204.6 1241.0 L2207.6 1241.1 L2210.6 1241.1 L2213.6 1241.2 L2216.6 1241.2 L2219.6 1241.2 L2222.7 1241.2 L2225.7 1241.3 L2228.7 1241.3 L2231.7 1241.3 L2234.7 1241.3 L2237.7 1241.3 L2240.7 1241.3 L2243.7 1241.3 L2246.7 1241.3 L2249.8 1241.4 L2252.8 1241.4 L2255.8 1241.4 L2258.8 1241.5 L2261.8 1241.5 L2264.8 1241.6 L2267.8 1241.6 L2270.8 1241.7 L2273.9 1241.8 L2276.9 1241.9 L2279.9 1242.0 L2282.9 1242.1 L2285.9 1242.2 L2288.9 1242.4 L2291.9 1242.6 L2294.9 1242.8 L2298.0 1243.0 L2301.0 1243.3 L2304.0 1243.7 L2307.0 1244.0 L2310.0 1244.5 L2313.0 1244.9 L2316.0 1245.4 L2319.0 1246.0 L2322.0 1246.6 L2325.1 1247.1 L2328.1 1247.8 L2331.1 1248.4 L2334.1 1249.1 L2337.1 1249.7 L2340.1 1250.4 L2343.1 1251.0 L2346.1 1251.6 L2349.2 1252.2 L2352.2 1252.7 L2355.2 1253.1 L2358.2 1253.1 L2361.2 1253.0 L2364.2 1252.7 L2367.2 1252.5 L2370.2 1252.2 L2373.2 1251.9 L2376.3 1251.6 L2379.3 1251.3 L2382.3 1251.0 L2385.3 1250.7 L2388.3 1250.4 L2391.3 1250.1 L2394.3 1249.8 L2397.3 1249.5 L2400.4 1249.2 L2403.4 1248.9 L2406.4 1248.6 L2409.4 1248.3 L2412.4 1248.0 L2415.4 1247.8 L2418.4 1247.5 L2421.4 1247.2 L2424.5 1247.0 L2427.5 1246.7 L2430.5 1246.5 L2433.5 1246.4 L2436.5 1246.2 L2439.5 1246.2 L2442.5 1246.3 L2445.5 1246.5 L2448.5 1246.7 L2451.6 1246.9 L2454.6 1247.0 L2457.6 1247.1 L2460.6 1247.2 L2463.6 1247.3 L2466.6 1247.4 L2469.6 1247.5 L2472.6 1247.7 L2475.7 1247.8 L2478.7 1247.9 L2481.7 1248.0 L2484.7 1248.1 L2487.7 1248.2 L2490.7 1248.3 L2493.7 1248.4 L2496.7 1248.6 L2499.8 1248.7 L2502.8 1248.8 L2505.8 1248.9 L2508.8 1249.1 L2511.8 1249.2 L2514.8 1249.3 L2517.8 1249.5 L2520.8 1249.6 L2523.8 1249.8 L2526.9 1250.0 L2529.9 1250.1 L2532.9 1250.3 L2535.9 1250.5 L2538.9 1250.7 L2541.9 1250.9 L2544.9 1251.2 L2547.9 1251.5 L2551.0 1251.7 L2554.0 1252.0 L2557.0 1252.3 L2560.0 1252.6 L2563.0 1252.9 L2566.0 1253.3 L2569.0 1253.6 L2572.0 1253.9 L2575.0 1254.2 L2578.1 1254.5 L2581.1 1254.8 L2584.1 1255.1 L2587.1 1255.3 L2590.1 1255.5 L2593.1 1255.5 L2596.1 1255.1 L2599.1 1254.3 L2602.2 1253.4 L2605.2 1252.5 L2608.2 1251.6 L2611.2 1250.6 L2614.2 1249.6 L2617.2 1248.6 L2620.2 1247.6 L2623.2 1246.6 L2626.3 1245.5 L2629.3 1244.5 L2632.3 1243.5 L2635.3 1242.5 L2638.3 1241.5 L2641.3 1240.5 L2644.3 1239.6 L2647.3 1238.7 L2650.3 1237.8 L2653.4 1237.2 L2656.4 1236.9 L2659.4 1236.7 L2662.4 1236.6 L2665.4 1236.4 L2668.4 1236.2 L2671.4 1236.0 L2674.4 1235.8 L2677.5 1235.7 L2680.5 1235.5 L2683.5 1235.3 L2686.5 1235.1 L2689.5 1234.9 L2692.5 1234.7 L2695.5 1234.5 L2698.5 1234.3 L2701.5 1234.2 L2704.6 1234.0 L2707.6 1233.8 L2710.6 1233.6 L2713.6 1233.4 L2716.6 1233.2 L2719.6 1233.1 L2722.6 1232.9 L2725.6 1232.7 L2728.7 1232.5 L2731.7 1232.4 L2734.7 1232.2 L2737.7 1232.0 L2740.7 1231.9 L2743.7 1231.7 L2746.7 1231.5 L2749.7 1231.4 L2752.8 1231.3 L2755.8 1231.1 L2758.8 1231.0 L2761.8 1231.2 L2764.8 1231.9 L2767.8 1233.0 L2770.8 1234.3 L2773.8 1235.7 L2776.8 1237.1 L2779.9 1238.6 L2782.9 1240.1 L2785.9 1241.5 L2788.9 1242.9 L2791.9 1244.2 L2794.9 1245.5 L2797.9 1246.6 L2800.9 1247.7 L2804.0 1248.7 L2807.0 1249.7 L2810.0 1250.6 L2813.0 1251.5 L2816.0 1252.3 L2819.0 1253.1 L2822.0 1253.9 L2825.0 1254.5 L2828.0 1255.1 L2831.1 1255.3 L2834.1 1254.9 L2837.1 1254.0 L2840.1 1252.8 L2843.1 1251.4 L2846.1 1249.9 L2849.1 1248.4 L2852.1 1246.8 L2855.2 1245.2 L2858.2 1243.6 L2861.2 1242.1 L2864.2 1240.9" fill="none" stroke="#8c46f0" stroke-width="3.2" stroke-linejoin="round" stroke-linecap="round"/>
<path d="M2138.3 1423.9 L2141.3 1424.1 L2144.3 1424.3 L2147.4 1424.6 L2150.4 1424.8 L2153.4 1425.1 L2156.4 1425.3 L2159.4 1425.6 L2162.4 1425.7 L2165.4 1425.9 L2168.4 1425.9 L2171.5 1426.0 L2174.5 1425.9 L2177.5 1425.6 L2180.5 1425.3 L2183.5 1424.8 L2186.5 1424.2 L2189.5 1423.6 L2192.5 1422.9 L2195.5 1422.1 L2198.6 1421.4 L2201.6 1420.7 L2204.6 1420.0 L2207.6 1419.5 L2210.6 1419.3 L2213.6 1419.4 L2216.6 1420.0 L2219.6 1421.1 L2222.7 1422.2 L2225.7 1423.5 L2228.7 1424.9 L2231.7 1426.4 L2234.7 1427.8 L2237.7 1429.1 L2240.7 1430.2 L2243.7 1431.0 L2246.7 1431.6 L2249.8 1431.9 L2252.8 1431.9 L2255.8 1431.6 L2258.8 1431.2 L2261.8 1430.6 L2264.8 1429.9 L2267.8 1429.2 L2270.8 1428.3 L2273.9 1427.5 L2276.9 1426.6 L2279.9 1425.7 L2282.9 1424.9 L2285.9 1424.0 L2288.9 1423.3 L2291.9 1422.7 L2294.9 1422.2 L2298.0 1421.9 L2301.0 1421.8 L2304.0 1422.0 L2307.0 1422.4 L2310.0 1422.7 L2313.0 1423.0 L2316.0 1423.4 L2319.0 1423.8 L2322.0 1424.3 L2325.1 1424.7 L2328.1 1425.2 L2331.1 1425.6 L2334.1 1426.0 L2337.1 1426.4 L2340.1 1426.7 L2343.1 1427.0 L2346.1 1427.3 L2349.2 1427.4 L2352.2 1427.6 L2355.2 1427.6 L2358.2 1427.7 L2361.2 1427.7 L2364.2 1427.7 L2367.2 1427.7 L2370.2 1427.6 L2373.2 1427.5 L2376.3 1427.4 L2379.3 1427.3 L2382.3 1427.1 L2385.3 1426.9 L2388.3 1426.7 L2391.3 1426.4 L2394.3 1426.0 L2397.3 1425.5 L2400.4 1424.6 L2403.4 1423.2 L2406.4 1421.6 L2409.4 1420.0 L2412.4 1419.0 L2415.4 1418.6 L2418.4 1418.6 L2421.4 1418.8 L2424.5 1419.2 L2427.5 1419.6 L2430.5 1420.1 L2433.5 1420.7 L2436.5 1421.3 L2439.5 1421.9 L2442.5 1422.5 L2445.5 1423.1 L2448.5 1423.8 L2451.6 1424.4 L2454.6 1425.1 L2457.6 1425.7 L2460.6 1426.4 L2463.6 1426.9 L2466.6 1427.4 L2469.6 1427.6 L2472.6 1427.3 L2475.7 1426.6 L2478.7 1425.7 L2481.7 1424.7 L2484.7 1423.8 L2487.7 1422.8 L2490.7 1421.8 L2493.7 1420.9 L2496.7 1419.9 L2499.8 1418.9 L2502.8 1417.9 L2505.8 1417.0 L2508.8 1416.0 L2511.8 1415.1 L2514.8 1414.2 L2517.8 1413.3 L2520.8 1412.4 L2523.8 1411.7 L2526.9 1411.1 L2529.9 1410.7 L2532.9 1411.2 L2535.9 1412.5 L2538.9 1414.4 L2541.9 1416.7 L2544.9 1419.3 L2547.9 1421.8 L2551.0 1424.0 L2554.0 1425.8 L2557.0 1427.2 L2560.0 1428.1 L2563.0 1428.7 L2566.0 1429.0 L2569.0 1429.1 L2572.0 1429.1 L2575.0 1428.9 L2578.1 1428.7 L2581.1 1428.4 L2584.1 1428.1 L2587.1 1427.8 L2590.1 1427.5 L2593.1 1427.1 L2596.1 1426.7 L2599.1 1426.4 L2602.2 1426.1 L2605.2 1425.7 L2608.2 1425.5 L2611.2 1425.2 L2614.2 1425.0 L2617.2 1424.8 L2620.2 1424.7 L2623.2 1424.6 L2626.3 1424.5 L2629.3 1424.4 L2632.3 1424.3 L2635.3 1424.2 L2638.3 1424.2 L2641.3 1424.1 L2644.3 1424.0 L2647.3 1424.0 L2650.3 1423.9 L2653.4 1423.9 L2656.4 1423.8 L2659.4 1423.8 L2662.4 1423.8 L2665.4 1423.8 L2668.4 1423.8 L2671.4 1423.8 L2674.4 1423.8 L2677.5 1423.8 L2680.5 1423.9 L2683.5 1424.0 L2686.5 1424.0 L2689.5 1424.1 L2692.5 1424.3 L2695.5 1424.4 L2698.5 1424.6 L2701.5 1424.8 L2704.6 1425.2 L2707.6 1425.6 L2710.6 1426.1 L2713.6 1426.6 L2716.6 1427.3 L2719.6 1428.0 L2722.6 1428.7 L2725.6 1429.5 L2728.7 1430.2 L2731.7 1431.0 L2734.7 1431.8 L2737.7 1432.5 L2740.7 1433.1 L2743.7 1433.6 L2746.7 1434.0 L2749.7 1434.2 L2752.8 1434.2 L2755.8 1433.9 L2758.8 1433.3 L2761.8 1432.2 L2764.8 1430.7 L2767.8 1428.7 L2770.8 1426.2 L2773.8 1423.3 L2776.8 1420.1 L2779.9 1416.5 L2782.9 1412.9 L2785.9 1409.4 L2788.9 1406.3 L2791.9 1403.9 L2794.9 1402.5 L2797.9 1402.3 L2800.9 1403.3 L2804.0 1404.7 L2807.0 1406.1 L2810.0 1407.7 L2813.0 1409.3 L2816.0 1411.0 L2819.0 1412.7 L2822.0 1414.4 L2825.0 1416.0 L2828.0 1417.6 L2831.1 1419.1 L2834.1 1420.4 L2837.1 1421.6 L2840.1 1422.4 L2843.1 1423.1 L2846.1 1423.6 L2849.1 1423.9 L2852.1 1424.2 L2855.2 1424.3 L2858.2 1424.4 L2861.2 1424.5 L2864.2 1424.6" fill="none" stroke="#17a57a" stroke-width="3.2" stroke-linejoin="round" stroke-linecap="round"/>
<rect x="2029" y="1616" width="917" height="599" rx="22" fill="#222933"/>
<text x="2066.0" y="1684.0" font-size="27" fill="#f4f5f7" font-weight="700" textLength="316" lengthAdjust="spacingAndGlyphs">API Latency by Path (ms)</text>
<text x="2396.3" y="1684.0" font-size="22" fill="#8f96a0" textLength="17" lengthAdjust="spacingAndGlyphs">—</text>
<text x="2425.5" y="1684.0" font-size="25" fill="#9aa1ab" textLength="42.7" lengthAdjust="spacingAndGlyphs">50p</text>
<path d="M2482 1674 L2489.2 1680.5 L2496.5 1674" fill="none" stroke="#9aa1ab" stroke-width="2.2" stroke-linecap="round" stroke-linejoin="round"/>
<path d="M2783 1662 H2797 M2784 1662 L2782.5 1675.5 M2796 1662 L2797.5 1675.5 M2781 1675.5 H2799 M2790 1675.5 V1681.5" stroke="#9ba3ad" stroke-width="2" fill="none" stroke-linecap="round"/>
<g stroke="#9ba3ad" stroke-width="2" fill="none" stroke-linecap="round" stroke-linejoin="round"><path d="M2836.2 1668.2 V1663.2 H2841.2 M2836.2 1663.2 L2841.5 1668.5"/><path d="M2851.8 1668.2 V1663.2 H2846.8 M2851.8 1663.2 L2846.5 1668.5"/><path d="M2836.2 1673.8 V1678.8 H2841.2 M2836.2 1678.8 L2841.5 1673.5"/><path d="M2851.8 1673.8 V1678.8 H2846.8 M2851.8 1678.8 L2846.5 1673.5"/></g>
<circle cx="2898" cy="1663.5" r="1.6" fill="#9ba3ad"/>
<circle cx="2898" cy="1670" r="1.6" fill="#9ba3ad"/>
<circle cx="2898" cy="1676.5" r="1.6" fill="#9ba3ad"/>
<circle cx="2083.0" cy="1750.0" r="5" fill="#10b981"/>
<text x="2100.6" y="1756.0" font-size="19" fill="#9ca3ab" textLength="97.3" lengthAdjust="spacingAndGlyphs">/v1/id/verify</text>
<circle cx="2297.0" cy="1750.0" r="5" fill="#8c46f0"/>
<text x="2314.6" y="1756.0" font-size="19" fill="#9ca3ab" textLength="144" lengthAdjust="spacingAndGlyphs">/v1/user/&lt;id&gt;/re...</text>
<circle cx="2511.0" cy="1750.0" r="5" fill="#f3ab25"/>
<text x="2528.6" y="1756.0" font-size="19" fill="#9ca3ab" textLength="138.3" lengthAdjust="spacingAndGlyphs">/v1/calculate/eta</text>
<circle cx="2725.0" cy="1750.0" r="5" fill="#1db5d6"/>
<text x="2742.6" y="1756.0" font-size="19" fill="#9ca3ab" textLength="97.8" lengthAdjust="spacingAndGlyphs">/v1/onboard</text>
<text x="2135.0" y="1840.0" font-size="19" fill="#9aa1ab" text-anchor="end">20s</text>
<text x="2135.0" y="1868.5" font-size="19" fill="#9aa1ab" text-anchor="end">18s</text>
<text x="2135.0" y="1897.1" font-size="19" fill="#9aa1ab" text-anchor="end">16s</text>
<text x="2135.0" y="1925.7" font-size="19" fill="#9aa1ab" text-anchor="end">14s</text>
<text x="2135.0" y="1954.2" font-size="19" fill="#9aa1ab" text-anchor="end">12s</text>
<text x="2135.0" y="1982.8" font-size="19" fill="#9aa1ab" text-anchor="end">10s</text>
<text x="2135.0" y="2011.3" font-size="19" fill="#9aa1ab" text-anchor="end">8000ms</text>
<text x="2135.0" y="2039.8" font-size="19" fill="#9aa1ab" text-anchor="end">6000ms</text>
<text x="2135.0" y="2068.4" font-size="19" fill="#9aa1ab" text-anchor="end">4000ms</text>
<text x="2135.0" y="2096.9" font-size="19" fill="#9aa1ab" text-anchor="end">2000ms</text>
<text x="2135.0" y="2125.5" font-size="19" fill="#9aa1ab" text-anchor="end">0ms</text>
<path d="M2155 1834.6 H2864" stroke="#2c333d" stroke-width="1.5"/>
<path d="M2155 1882.3 H2864" stroke="#2c333d" stroke-width="1.5"/>
<path d="M2155 1930.8 H2864" stroke="#2c333d" stroke-width="1.5"/>
<path d="M2155 1977.4 H2864" stroke="#2c333d" stroke-width="1.5"/>
<path d="M2155 2024.7 H2864" stroke="#2c333d" stroke-width="1.5"/>
<path d="M2155 2072.5 H2864" stroke="#2c333d" stroke-width="1.5"/>
<path d="M2155 2120.0 H2864" stroke="#4a515b" stroke-width="2" stroke-dasharray="2 18"/>
<text x="2163.0" y="2152.0" font-size="18.5" fill="#9aa1ab" textLength="110" lengthAdjust="spacingAndGlyphs">03 Sep 00:00</text>
<text x="2366.0" y="2152.0" font-size="18.5" fill="#9aa1ab" textLength="110" lengthAdjust="spacingAndGlyphs">05 Sep 00:00</text>
<text x="2569.0" y="2152.0" font-size="18.5" fill="#9aa1ab" textLength="110" lengthAdjust="spacingAndGlyphs">07 Sep 00:00</text>
<text x="2772.0" y="2152.0" font-size="18.5" fill="#9aa1ab" textLength="110" lengthAdjust="spacingAndGlyphs">09 Sep 00:00</text>
<path d="M2154.9 1896.1 L2157.9 1895.3 L2160.9 1894.4 L2163.9 1893.5 L2166.9 1892.7 L2169.9 1892.1 L2172.9 1891.8 L2175.9 1891.6 L2178.9 1891.5 L2181.9 1891.6 L2184.9 1891.6 L2187.9 1891.8 L2190.9 1891.9 L2193.9 1892.1 L2196.9 1892.3 L2199.9 1892.6 L2203.0 1892.8 L2206.0 1893.1 L2209.0 1893.4 L2212.0 1893.8 L2215.0 1894.3 L2218.0 1894.8 L2221.0 1895.5 L2224.0 1896.2 L2227.0 1896.8 L2230.0 1897.4 L2233.0 1897.8 L2236.0 1897.9 L2239.0 1897.9 L2242.0 1897.7 L2245.0 1897.3 L2248.0 1896.9 L2251.1 1896.4 L2254.1 1896.1 L2257.1 1895.8 L2260.1 1895.6 L2263.1 1895.4 L2266.1 1895.3 L2269.1 1895.2 L2272.1 1895.1 L2275.1 1894.9 L2278.1 1894.8 L2281.1 1894.7 L2284.1 1894.6 L2287.1 1894.5 L2290.1 1894.4 L2293.1 1894.3 L2296.1 1894.2 L2299.1 1894.0 L2302.2 1893.9 L2305.2 1893.7 L2308.2 1893.5 L2311.2 1893.2 L2314.2 1892.9 L2317.2 1892.6 L2320.2 1892.2 L2323.2 1891.8 L2326.2 1891.4 L2329.2 1890.9 L2332.2 1890.5 L2335.2 1890.0 L2338.2 1889.5 L2341.2 1889.0 L2344.2 1888.6 L2347.2 1888.1 L2350.3 1887.7 L2353.3 1887.4 L2356.3 1887.1 L2359.3 1886.8 L2362.3 1886.7 L2365.3 1886.6 L2368.3 1886.6 L2371.3 1886.7 L2374.3 1886.9 L2377.3 1887.1 L2380.3 1887.3 L2383.3 1887.5 L2386.3 1887.6 L2389.3 1887.7 L2392.3 1887.8 L2395.3 1887.8 L2398.3 1887.9 L2401.4 1887.9 L2404.4 1888.0 L2407.4 1888.0 L2410.4 1888.0 L2413.4 1888.0 L2416.4 1888.1 L2419.4 1888.1 L2422.4 1888.2 L2425.4 1888.2 L2428.4 1888.2 L2431.4 1888.3 L2434.4 1888.3 L2437.4 1888.3 L2440.4 1888.4 L2443.4 1888.4 L2446.4 1888.4 L2449.4 1888.5 L2452.5 1888.5 L2455.5 1888.5 L2458.5 1888.6 L2461.5 1888.6 L2464.5 1888.6 L2467.5 1888.7 L2470.5 1888.7 L2473.5 1888.7 L2476.5 1888.7 L2479.5 1888.8 L2482.5 1888.8 L2485.5 1888.8 L2488.5 1888.8 L2491.5 1888.8 L2494.5 1888.8 L2497.5 1888.8 L2500.6 1888.8 L2503.6 1888.8 L2506.6 1888.8 L2509.6 1888.8 L2512.6 1888.8 L2515.6 1888.8 L2518.6 1888.8 L2521.6 1888.7 L2524.6 1888.7 L2527.6 1888.7 L2530.6 1888.6 L2533.6 1888.5 L2536.6 1888.5 L2539.6 1888.4 L2542.6 1888.3 L2545.6 1888.1 L2548.6 1888.0 L2551.7 1887.8 L2554.7 1887.6 L2557.7 1887.3 L2560.7 1886.9 L2563.7 1886.5 L2566.7 1886.0 L2569.7 1885.3 L2572.7 1884.5 L2575.7 1883.4 L2578.7 1882.1 L2581.7 1880.6 L2584.7 1878.9 L2587.7 1877.5 L2590.7 1876.5 L2593.7 1875.7 L2596.7 1875.1 L2599.8 1874.7 L2602.8 1874.3 L2605.8 1874.0 L2608.8 1873.7 L2611.8 1873.4 L2614.8 1873.0 L2617.8 1872.5 L2620.8 1872.0 L2623.8 1871.4 L2626.8 1870.9 L2629.8 1870.3 L2632.8 1869.7 L2635.8 1869.2 L2638.8 1868.6 L2641.8 1868.1 L2644.8 1867.7 L2647.8 1867.3 L2650.9 1867.2 L2653.9 1867.3 L2656.9 1868.0 L2659.9 1868.9 L2662.9 1870.0 L2665.9 1871.1 L2668.9 1872.3 L2671.9 1873.6 L2674.9 1874.8 L2677.9 1876.0 L2680.9 1877.3 L2683.9 1878.5 L2686.9 1879.6 L2689.9 1880.6 L2692.9 1881.5 L2695.9 1882.1 L2699.0 1882.1 L2702.0 1881.6 L2705.0 1880.9 L2708.0 1880.2 L2711.0 1879.4 L2714.0 1878.6 L2717.0 1877.8 L2720.0 1876.9 L2723.0 1876.1 L2726.0 1875.3 L2729.0 1874.5 L2732.0 1873.8 L2735.0 1873.2 L2738.0 1872.6 L2741.0 1872.2 L2744.0 1871.9 L2747.0 1871.8 L2750.1 1871.8 L2753.1 1871.9 L2756.1 1872.2 L2759.1 1872.5 L2762.1 1872.9 L2765.1 1873.3 L2768.1 1873.6 L2771.1 1874.0 L2774.1 1874.4 L2777.1 1874.8 L2780.1 1875.3 L2783.1 1875.7 L2786.1 1876.2 L2789.1 1876.7 L2792.1 1877.2 L2795.1 1877.6 L2798.2 1878.1 L2801.2 1878.6 L2804.2 1879.0 L2807.2 1879.4 L2810.2 1879.8 L2813.2 1880.1 L2816.2 1880.4 L2819.2 1880.6 L2822.2 1880.7 L2825.2 1880.7 L2828.2 1880.7 L2831.2 1880.5 L2834.2 1880.4 L2837.2 1880.3 L2840.2 1880.1 L2843.2 1880.0 L2846.2 1879.8 L2849.3 1879.6 L2852.3 1879.4 L2855.3 1879.2 L2858.3 1879.0 L2861.3 1878.8 L2864.3 1878.7" fill="none" stroke="#f3ab25" stroke-width="3.2" stroke-linejoin="round" stroke-linecap="round"/>
<path d="M2154.9 2020.8 L2157.9 2020.3 L2160.9 2019.6 L2163.9 2018.9 L2166.9 2018.2 L2169.9 2017.6 L2172.9 2017.0 L2175.9 2016.5 L2178.9 2016.2 L2181.9 2015.9 L2184.9 2015.8 L2187.9 2015.7 L2190.9 2015.7 L2193.9 2015.8 L2196.9 2015.9 L2199.9 2016.1 L2203.0 2016.2 L2206.0 2016.3 L2209.0 2016.4 L2212.0 2016.5 L2215.0 2016.6 L2218.0 2016.5 L2221.0 2016.5 L2224.0 2016.3 L2227.0 2016.1 L2230.0 2015.8 L2233.0 2015.5 L2236.0 2015.0 L2239.0 2014.5 L2242.0 2014.0 L2245.0 2013.4 L2248.0 2012.7 L2251.1 2012.1 L2254.1 2011.4 L2257.1 2010.7 L2260.1 2010.0 L2263.1 2009.3 L2266.1 2008.5 L2269.1 2007.8 L2272.1 2007.1 L2275.1 2006.4 L2278.1 2005.7 L2281.1 2005.0 L2284.1 2004.3 L2287.1 2003.7 L2290.1 2003.2 L2293.1 2002.7 L2296.1 2002.3 L2299.1 2002.0 L2302.2 2002.1 L2305.2 2002.5 L2308.2 2003.0 L2311.2 2003.5 L2314.2 2004.1 L2317.2 2004.7 L2320.2 2005.3 L2323.2 2005.9 L2326.2 2006.6 L2329.2 2007.3 L2332.2 2008.0 L2335.2 2008.6 L2338.2 2009.3 L2341.2 2009.9 L2344.2 2010.5 L2347.2 2011.1 L2350.3 2011.6 L2353.3 2012.1 L2356.3 2012.5 L2359.3 2012.8 L2362.3 2013.1 L2365.3 2013.3 L2368.3 2013.4 L2371.3 2013.5 L2374.3 2013.6 L2377.3 2013.6 L2380.3 2013.5 L2383.3 2013.5 L2386.3 2013.5 L2389.3 2013.4 L2392.3 2013.3 L2395.3 2013.3 L2398.3 2013.2 L2401.4 2013.2 L2404.4 2013.1 L2407.4 2013.1 L2410.4 2013.2 L2413.4 2013.3 L2416.4 2013.4 L2419.4 2013.6 L2422.4 2013.8 L2425.4 2014.1 L2428.4 2014.4 L2431.4 2014.8 L2434.4 2015.2 L2437.4 2015.7 L2440.4 2016.1 L2443.4 2016.6 L2446.4 2017.0 L2449.4 2017.4 L2452.5 2017.8 L2455.5 2018.1 L2458.5 2018.4 L2461.5 2018.7 L2464.5 2018.9 L2467.5 2019.1 L2470.5 2019.3 L2473.5 2019.4 L2476.5 2019.6 L2479.5 2019.7 L2482.5 2019.8 L2485.5 2019.9 L2488.5 2020.0 L2491.5 2020.1 L2494.5 2020.2 L2497.5 2020.3 L2500.6 2020.3 L2503.6 2020.4 L2506.6 2020.5 L2509.6 2020.5 L2512.6 2020.6 L2515.6 2020.6 L2518.6 2020.7 L2521.6 2020.8 L2524.6 2020.8 L2527.6 2020.9 L2530.6 2020.9 L2533.6 2021.0 L2536.6 2021.0 L2539.6 2021.1 L2542.6 2021.2 L2545.6 2021.4 L2548.6 2021.5 L2551.7 2021.4 L2554.7 2021.0 L2557.7 2020.6 L2560.7 2020.0 L2563.7 2019.5 L2566.7 2018.9 L2569.7 2018.3 L2572.7 2017.6 L2575.7 2017.0 L2578.7 2016.4 L2581.7 2015.7 L2584.7 2015.1 L2587.7 2014.5 L2590.7 2013.9 L2593.7 2013.3 L2596.7 2012.7 L2599.8 2012.1 L2602.8 2011.5 L2605.8 2010.8 L2608.8 2010.2 L2611.8 2009.6 L2614.8 2009.0 L2617.8 2008.4 L2620.8 2007.8 L2623.8 2007.2 L2626.8 2006.6 L2629.8 2006.0 L2632.8 2005.5 L2635.8 2004.9 L2638.8 2004.4 L2641.8 2003.9 L2644.8 2003.5 L2647.8 2003.1 L2650.9 2003.0 L2653.9 2003.4 L2656.9 2004.1 L2659.9 2004.9 L2662.9 2005.8 L2665.9 2006.7 L2668.9 2007.7 L2671.9 2008.7 L2674.9 2009.8 L2677.9 2010.8 L2680.9 2011.9 L2683.9 2012.9 L2686.9 2014.0 L2689.9 2015.0 L2692.9 2016.0 L2695.9 2017.0 L2699.0 2018.0 L2702.0 2018.9 L2705.0 2019.8 L2708.0 2020.6 L2711.0 2021.4 L2714.0 2022.1 L2717.0 2022.7 L2720.0 2023.2 L2723.0 2023.6 L2726.0 2023.9 L2729.0 2024.2 L2732.0 2024.4 L2735.0 2024.5 L2738.0 2024.6 L2741.0 2024.7 L2744.0 2024.7 L2747.0 2024.6 L2750.1 2024.6 L2753.1 2024.5 L2756.1 2024.4 L2759.1 2024.4 L2762.1 2024.3 L2765.1 2024.3 L2768.1 2024.4 L2771.1 2024.4 L2774.1 2024.5 L2777.1 2024.6 L2780.1 2024.8 L2783.1 2024.8 L2786.1 2024.9 L2789.1 2024.8 L2792.1 2024.7 L2795.1 2024.5 L2798.2 2024.2 L2801.2 2023.8 L2804.2 2023.3 L2807.2 2022.7 L2810.2 2022.1 L2813.2 2021.4 L2816.2 2020.6 L2819.2 2019.8 L2822.2 2018.9 L2825.2 2018.1 L2828.2 2017.2 L2831.2 2016.3 L2834.2 2015.3 L2837.2 2014.4 L2840.2 2013.4 L2843.2 2012.5 L2846.2 2011.5 L2849.3 2010.5 L2852.3 2009.5 L2855.3 2008.6 L2858.3 2007.6 L2861.3 2006.7 L2864.3 2006.0" fill="none" stroke="#17a57a" stroke-width="3.2" stroke-linejoin="round" stroke-linecap="round"/>
<path d="M2154.9 2029.8 L2157.9 2029.4 L2160.9 2029.0 L2163.9 2028.4 L2166.9 2027.9 L2169.9 2027.4 L2172.9 2027.0 L2175.9 2026.6 L2178.9 2026.3 L2181.9 2026.1 L2184.9 2026.1 L2187.9 2026.4 L2190.9 2027.4 L2193.9 2028.8 L2196.9 2030.5 L2199.9 2031.8 L2203.0 2032.7 L2206.0 2033.0 L2209.0 2033.0 L2212.0 2032.7 L2215.0 2032.3 L2218.0 2031.8 L2221.0 2031.2 L2224.0 2030.6 L2227.0 2030.0 L2230.0 2029.4 L2233.0 2028.8 L2236.0 2028.2 L2239.0 2027.7 L2242.0 2027.2 L2245.0 2026.8 L2248.0 2026.5 L2251.1 2026.2 L2254.1 2026.0 L2257.1 2026.0 L2260.1 2026.0 L2263.1 2026.1 L2266.1 2026.2 L2269.1 2026.4 L2272.1 2026.6 L2275.1 2026.9 L2278.1 2027.2 L2281.1 2027.5 L2284.1 2027.8 L2287.1 2028.1 L2290.1 2028.4 L2293.1 2028.7 L2296.1 2029.0 L2299.1 2029.3 L2302.2 2029.5 L2305.2 2029.8 L2308.2 2030.0 L2311.2 2030.1 L2314.2 2030.3 L2317.2 2030.3 L2320.2 2030.4 L2323.2 2030.3 L2326.2 2030.3 L2329.2 2030.3 L2332.2 2030.2 L2335.2 2030.2 L2338.2 2030.1 L2341.2 2030.0 L2344.2 2029.9 L2347.2 2029.8 L2350.3 2029.7 L2353.3 2029.5 L2356.3 2029.2 L2359.3 2029.0 L2362.3 2028.6 L2365.3 2028.2 L2368.3 2027.8 L2371.3 2027.2 L2374.3 2026.5 L2377.3 2025.7 L2380.3 2024.6 L2383.3 2023.2 L2386.3 2021.4 L2389.3 2019.0 L2392.3 2016.1 L2395.3 2012.7 L2398.3 2008.9 L2401.4 2005.0 L2404.4 2001.5 L2407.4 1998.9 L2410.4 1997.5 L2413.4 1997.6 L2416.4 1999.1 L2419.4 2001.6 L2422.4 2004.8 L2425.4 2007.9 L2428.4 2011.0 L2431.4 2014.3 L2434.4 2017.6 L2437.4 2020.6 L2440.4 2022.9 L2443.4 2024.6 L2446.4 2025.3 L2449.4 2025.3 L2452.5 2024.9 L2455.5 2024.3 L2458.5 2023.7 L2461.5 2023.1 L2464.5 2022.4 L2467.5 2021.7 L2470.5 2021.1 L2473.5 2020.3 L2476.5 2019.6 L2479.5 2018.9 L2482.5 2018.2 L2485.5 2017.4 L2488.5 2016.7 L2491.5 2016.0 L2494.5 2015.2 L2497.5 2014.5 L2500.6 2013.8 L2503.6 2013.0 L2506.6 2012.3 L2509.6 2011.5 L2512.6 2010.8 L2515.6 2010.1 L2518.6 2009.4 L2521.6 2008.7 L2524.6 2008.4 L2527.6 2009.9 L2530.6 2014.2 L2533.6 2019.1 L2536.6 2022.2 L2539.6 2023.7 L2542.6 2024.3 L2545.6 2024.4 L2548.6 2024.3 L2551.7 2024.0 L2554.7 2023.6 L2557.7 2023.2 L2560.7 2022.7 L2563.7 2022.3 L2566.7 2021.8 L2569.7 2021.3 L2572.7 2020.8 L2575.7 2020.4 L2578.7 2020.0 L2581.7 2019.6 L2584.7 2019.3 L2587.7 2019.0 L2590.7 2018.8 L2593.7 2018.7 L2596.7 2018.7 L2599.8 2018.8 L2602.8 2018.9 L2605.8 2019.1 L2608.8 2019.3 L2611.8 2019.6 L2614.8 2019.9 L2617.8 2020.2 L2620.8 2020.6 L2623.8 2020.9 L2626.8 2021.3 L2629.8 2021.6 L2632.8 2021.9 L2635.8 2022.3 L2638.8 2022.6 L2641.8 2022.9 L2644.8 2023.1 L2647.8 2023.4 L2650.9 2023.5 L2653.9 2023.6 L2656.9 2023.7 L2659.9 2023.6 L2662.9 2023.5 L2665.9 2023.2 L2668.9 2022.8 L2671.9 2022.3 L2674.9 2021.6 L2677.9 2020.9 L2680.9 2020.0 L2683.9 2019.1 L2686.9 2018.1 L2689.9 2017.0 L2692.9 2015.9 L2695.9 2014.7 L2699.0 2013.5 L2702.0 2012.4 L2705.0 2011.3 L2708.0 2010.3 L2711.0 2009.4 L2714.0 2008.8 L2717.0 2008.7 L2720.0 2009.5 L2723.0 2010.9 L2726.0 2012.4 L2729.0 2013.9 L2732.0 2015.5 L2735.0 2017.1 L2738.0 2018.8 L2741.0 2020.5 L2744.0 2022.1 L2747.0 2023.6 L2750.1 2025.1 L2753.1 2026.4 L2756.1 2027.6 L2759.1 2028.6 L2762.1 2029.3 L2765.1 2029.7 L2768.1 2029.6 L2771.1 2028.9 L2774.1 2027.6 L2777.1 2025.9 L2780.1 2023.9 L2783.1 2021.9 L2786.1 2020.2 L2789.1 2018.7 L2792.1 2017.6 L2795.1 2016.8 L2798.2 2016.3 L2801.2 2015.9 L2804.2 2015.7 L2807.2 2015.5 L2810.2 2015.4 L2813.2 2015.4 L2816.2 2015.3 L2819.2 2015.3 L2822.2 2015.4 L2825.2 2015.4 L2828.2 2015.5 L2831.2 2015.5 L2834.2 2015.6 L2837.2 2015.7 L2840.2 2015.8 L2843.2 2015.9 L2846.2 2016.0 L2849.3 2016.1 L2852.3 2016.2 L2855.3 2016.4 L2858.3 2016.5 L2861.3 2016.5 L2864.3 2016.6" fill="none" stroke="#8c46f0" stroke-width="3.2" stroke-linejoin="round" stroke-linecap="round"/>
<path d="M2154.9 2080.5 L2157.9 2080.4 L2160.9 2080.2 L2163.9 2080.0 L2166.9 2079.8 L2169.9 2079.6 L2172.9 2079.4 L2175.9 2079.2 L2178.9 2079.1 L2181.9 2079.0 L2184.9 2078.9 L2187.9 2078.9 L2190.9 2079.1 L2193.9 2079.3 L2196.9 2079.8 L2199.9 2080.4 L2203.0 2081.1 L2206.0 2081.8 L2209.0 2082.4 L2212.0 2082.7 L2215.0 2082.9 L2218.0 2082.9 L2221.0 2082.8 L2224.0 2082.6 L2227.0 2082.3 L2230.0 2082.0 L2233.0 2081.7 L2236.0 2081.4 L2239.0 2081.1 L2242.0 2080.8 L2245.0 2080.5 L2248.0 2080.3 L2251.1 2080.2 L2254.1 2080.0 L2257.1 2079.9 L2260.1 2079.8 L2263.1 2079.7 L2266.1 2079.6 L2269.1 2079.4 L2272.1 2079.3 L2275.1 2079.2 L2278.1 2079.2 L2281.1 2079.1 L2284.1 2079.0 L2287.1 2078.9 L2290.1 2078.9 L2293.1 2078.9 L2296.1 2078.8 L2299.1 2078.8 L2302.2 2078.9 L2305.2 2078.9 L2308.2 2079.0 L2311.2 2079.1 L2314.2 2079.2 L2317.2 2079.4 L2320.2 2079.6 L2323.2 2079.9 L2326.2 2080.2 L2329.2 2080.5 L2332.2 2080.8 L2335.2 2081.2 L2338.2 2081.6 L2341.2 2082.0 L2344.2 2082.4 L2347.2 2082.9 L2350.3 2083.4 L2353.3 2084.0 L2356.3 2084.8 L2359.3 2085.6 L2362.3 2086.4 L2365.3 2087.3 L2368.3 2088.0 L2371.3 2088.4 L2374.3 2088.6 L2377.3 2088.2 L2380.3 2087.3 L2383.3 2085.8 L2386.3 2083.9 L2389.3 2081.9 L2392.3 2080.0 L2395.3 2078.5 L2398.3 2077.4 L2401.4 2076.6 L2404.4 2076.0 L2407.4 2075.6 L2410.4 2075.4 L2413.4 2075.2 L2416.4 2075.0 L2419.4 2074.9 L2422.4 2074.8 L2425.4 2074.7 L2428.4 2074.6 L2431.4 2074.6 L2434.4 2074.5 L2437.4 2074.4 L2440.4 2074.3 L2443.4 2074.1 L2446.4 2073.9 L2449.4 2073.6 L2452.5 2073.1 L2455.5 2072.5 L2458.5 2071.8 L2461.5 2070.9 L2464.5 2069.9 L2467.5 2069.0 L2470.5 2068.3 L2473.5 2067.9 L2476.5 2067.8 L2479.5 2068.1 L2482.5 2068.8 L2485.5 2069.8 L2488.5 2071.0 L2491.5 2072.4 L2494.5 2073.9 L2497.5 2075.3 L2500.6 2076.6 L2503.6 2077.7 L2506.6 2078.3 L2509.6 2078.5 L2512.6 2078.0 L2515.6 2077.3 L2518.6 2076.6 L2521.6 2076.1 L2524.6 2075.9 L2527.6 2075.7 L2530.6 2075.6 L2533.6 2075.5 L2536.6 2075.4 L2539.6 2075.4 L2542.6 2075.3 L2545.6 2075.3 L2548.6 2075.2 L2551.7 2075.2 L2554.7 2075.1 L2557.7 2075.1 L2560.7 2075.1 L2563.7 2075.1 L2566.7 2075.1 L2569.7 2075.1 L2572.7 2075.1 L2575.7 2075.1 L2578.7 2075.2 L2581.7 2075.2 L2584.7 2075.3 L2587.7 2075.4 L2590.7 2075.5 L2593.7 2075.7 L2596.7 2075.9 L2599.8 2076.2 L2602.8 2076.7 L2605.8 2077.3 L2608.8 2078.1 L2611.8 2079.0 L2614.8 2080.0 L2617.8 2080.9 L2620.8 2081.6 L2623.8 2082.1 L2626.8 2082.4 L2629.8 2082.6 L2632.8 2082.6 L2635.8 2082.6 L2638.8 2082.4 L2641.8 2082.2 L2644.8 2082.0 L2647.8 2081.8 L2650.9 2081.5 L2653.9 2081.3 L2656.9 2081.1 L2659.9 2080.8 L2662.9 2080.7 L2665.9 2080.5 L2668.9 2080.5 L2671.9 2080.5 L2674.9 2080.6 L2677.9 2080.8 L2680.9 2081.2 L2683.9 2081.7 L2686.9 2082.3 L2689.9 2083.1 L2692.9 2083.9 L2695.9 2084.7 L2699.0 2085.6 L2702.0 2086.4 L2705.0 2087.1 L2708.0 2087.7 L2711.0 2088.1 L2714.0 2088.4 L2717.0 2088.5 L2720.0 2088.4 L2723.0 2088.0 L2726.0 2087.5 L2729.0 2086.8 L2732.0 2086.0 L2735.0 2085.2 L2738.0 2084.3 L2741.0 2083.5 L2744.0 2082.7 L2747.0 2082.0 L2750.1 2081.4 L2753.1 2081.0 L2756.1 2080.7 L2759.1 2080.6 L2762.1 2080.6 L2765.1 2080.8 L2768.1 2081.0 L2771.1 2081.3 L2774.1 2081.6 L2777.1 2082.0 L2780.1 2082.5 L2783.1 2082.9 L2786.1 2083.3 L2789.1 2083.7 L2792.1 2084.1 L2795.1 2084.5 L2798.2 2084.8 L2801.2 2085.1 L2804.2 2085.3 L2807.2 2085.5 L2810.2 2085.6 L2813.2 2085.7 L2816.2 2085.7 L2819.2 2085.8 L2822.2 2085.8 L2825.2 2085.9 L2828.2 2085.9 L2831.2 2085.9 L2834.2 2085.9 L2837.2 2085.9 L2840.2 2085.9 L2843.2 2085.9 L2846.2 2085.9 L2849.3 2085.9 L2852.3 2085.9 L2855.3 2085.8 L2858.3 2085.8 L2861.3 2085.8 L2864.3 2085.8" fill="none" stroke="#1db5d6" stroke-width="3.2" stroke-linejoin="round" stroke-linecap="round"/>
<rect x="147" y="992" width="1857" height="1223" rx="22" fill="#222933"/>
<text x="184.0" y="1059.0" font-size="27" fill="#f4f5f7" font-weight="700" textLength="501" lengthAdjust="spacingAndGlyphs">Success Rate By Path &amp; Request Count</text>
<path d="M1841 1038 H1855 M1842 1038 L1840.5 1051.5 M1854 1038 L1855.5 1051.5 M1839 1051.5 H1857 M1848 1051.5 V1057.5" stroke="#9ba3ad" stroke-width="2" fill="none" stroke-linecap="round"/>
<g stroke="#9ba3ad" stroke-width="2" fill="none" stroke-linecap="round" stroke-linejoin="round"><path d="M1894.2 1044.2 V1039.2 H1899.2 M1894.2 1039.2 L1899.5 1044.5"/><path d="M1909.8 1044.2 V1039.2 H1904.8 M1909.8 1039.2 L1904.5 1044.5"/><path d="M1894.2 1049.8 V1054.8 H1899.2 M1894.2 1054.8 L1899.5 1049.5"/><path d="M1909.8 1049.8 V1054.8 H1904.8 M1909.8 1054.8 L1904.5 1049.5"/></g>
<circle cx="1956" cy="1039.5" r="1.6" fill="#9ba3ad"/>
<circle cx="1956" cy="1046" r="1.6" fill="#9ba3ad"/>
<circle cx="1956" cy="1052.5" r="1.6" fill="#9ba3ad"/>
<defs><linearGradient id="gE" x1="0" y1="0" x2="1" y2="1"><stop offset="0" stop-color="#2cc463" stop-opacity="0.26"/><stop offset="0.85" stop-color="#2cc463" stop-opacity="0"/></linearGradient><linearGradient id="gG" x1="0" y1="0" x2="1" y2="1"><stop offset="0" stop-color="#98c94e" stop-opacity="0.26"/><stop offset="0.85" stop-color="#98c94e" stop-opacity="0"/></linearGradient><linearGradient id="gF" x1="0" y1="0" x2="1" y2="1"><stop offset="0" stop-color="#f4de48" stop-opacity="0.28"/><stop offset="0.85" stop-color="#f4de48" stop-opacity="0"/></linearGradient><linearGradient id="gP" x1="0" y1="0" x2="1" y2="1"><stop offset="0" stop-color="#f59a1e" stop-opacity="0.28"/><stop offset="0.85" stop-color="#f59a1e" stop-opacity="0"/></linearGradient></defs>
<defs><linearGradient id="t0" x1="0" y1="0" x2="1" y2="1"><stop offset="0" stop-color="#2cc463" stop-opacity="0.28"/><stop offset="0.8" stop-color="#2cc463" stop-opacity="0"/></linearGradient></defs>
<rect x="253.5" y="1163.5" width="998" height="468" rx="10" fill="url(#t0)" stroke="#2cc463" stroke-width="3"/>
<defs><linearGradient id="t1" x1="0" y1="0" x2="1" y2="1"><stop offset="0" stop-color="#2cc463" stop-opacity="0.28"/><stop offset="0.8" stop-color="#2cc463" stop-opacity="0"/></linearGradient></defs>
<rect x="253.5" y="1642.5" width="998" height="371" rx="10" fill="url(#t1)" stroke="#2cc463" stroke-width="3"/>
<defs><linearGradient id="t2" x1="0" y1="0" x2="1" y2="1"><stop offset="0" stop-color="#98c94e" stop-opacity="0.27"/><stop offset="0.8" stop-color="#98c94e" stop-opacity="0"/></linearGradient></defs>
<rect x="1262.5" y="1163.5" width="471" height="576" rx="10" fill="url(#t2)" stroke="#98c94e" stroke-width="3"/>
<defs><linearGradient id="t3" x1="0" y1="0" x2="1" y2="1"><stop offset="0" stop-color="#2cc463" stop-opacity="0.28"/><stop offset="0.8" stop-color="#2cc463" stop-opacity="0"/></linearGradient></defs>
<rect x="1744.5" y="1163.5" width="155" height="576" rx="10" fill="url(#t3)" stroke="#2cc463" stroke-width="3"/>
<defs><linearGradient id="t4" x1="0" y1="0" x2="1" y2="1"><stop offset="0" stop-color="#f59a1e" stop-opacity="0.3"/><stop offset="0.8" stop-color="#f59a1e" stop-opacity="0"/></linearGradient></defs>
<rect x="1262.5" y="1750.5" width="222" height="137" rx="10" fill="url(#t4)" stroke="#f59a1e" stroke-width="3"/>
<defs><linearGradient id="t5" x1="0" y1="0" x2="1" y2="1"><stop offset="0" stop-color="#98c94e" stop-opacity="0.27"/><stop offset="0.8" stop-color="#98c94e" stop-opacity="0"/></linearGradient></defs>
<rect x="1495.5" y="1750.5" width="172" height="136" rx="10" fill="url(#t5)" stroke="#98c94e" stroke-width="3"/>
<defs><linearGradient id="t6" x1="0" y1="0" x2="1" y2="1"><stop offset="0" stop-color="#f4de48" stop-opacity="0.3"/><stop offset="0.8" stop-color="#f4de48" stop-opacity="0"/></linearGradient></defs>
<rect x="1678.5" y="1750.5" width="105" height="176" rx="10" fill="url(#t6)" stroke="#f4de48" stroke-width="3"/>
<defs><linearGradient id="t7" x1="0" y1="0" x2="1" y2="1"><stop offset="0" stop-color="#98c94e" stop-opacity="0.27"/><stop offset="0.8" stop-color="#98c94e" stop-opacity="0"/></linearGradient></defs>
<rect x="1794.5" y="1750.5" width="105" height="176" rx="10" fill="url(#t7)" stroke="#98c94e" stroke-width="3"/>
<defs><linearGradient id="t8" x1="0" y1="0" x2="1" y2="1"><stop offset="0" stop-color="#98c94e" stop-opacity="0.27"/><stop offset="0.8" stop-color="#98c94e" stop-opacity="0"/></linearGradient></defs>
<rect x="1262.5" y="1898.5" width="222" height="115" rx="10" fill="url(#t8)" stroke="#98c94e" stroke-width="3"/>
<defs><linearGradient id="t9" x1="0" y1="0" x2="1" y2="1"><stop offset="0" stop-color="#98c94e" stop-opacity="0.27"/><stop offset="0.8" stop-color="#98c94e" stop-opacity="0"/></linearGradient></defs>
<rect x="1495.5" y="1897.5" width="172" height="116" rx="10" fill="url(#t9)" stroke="#98c94e" stroke-width="3"/>
<defs><linearGradient id="t10" x1="0" y1="0" x2="1" y2="1"><stop offset="0" stop-color="#2cc463" stop-opacity="0.28"/><stop offset="0.8" stop-color="#2cc463" stop-opacity="0"/></linearGradient></defs>
<rect x="1678.5" y="1937.5" width="221" height="76" rx="10" fill="url(#t10)" stroke="#2cc463" stroke-width="3"/>
<rect x="1122" y="1187" width="106" height="48" rx="10" fill="#ffffff" fill-opacity="0.09"/>
<text x="1175.0" y="1218.0" font-size="20" fill="#eef0f2" text-anchor="middle" textLength="63" lengthAdjust="spacingAndGlyphs" stroke="#eef0f2" stroke-width="0.4">98.97%</text>
<rect x="1125" y="1666" width="103" height="48" rx="10" fill="#ffffff" fill-opacity="0.09"/>
<text x="1176.5" y="1697.0" font-size="20" fill="#eef0f2" text-anchor="middle" textLength="63" lengthAdjust="spacingAndGlyphs" stroke="#eef0f2" stroke-width="0.4">99.16%</text>
<rect x="1603" y="1188" width="106" height="47" rx="10" fill="#ffffff" fill-opacity="0.09"/>
<text x="1656.0" y="1218.5" font-size="20" fill="#eef0f2" text-anchor="middle" textLength="63" lengthAdjust="spacingAndGlyphs" stroke="#eef0f2" stroke-width="0.4">90.30%</text>
<rect x="1769" y="1188" width="107" height="47" rx="10" fill="#ffffff" fill-opacity="0.09"/>
<text x="1822.5" y="1218.5" font-size="20" fill="#eef0f2" text-anchor="middle" textLength="63" lengthAdjust="spacingAndGlyphs" stroke="#eef0f2" stroke-width="0.4">98.29%</text>
<text x="277.0" y="1560.0" font-size="29.5" fill="#f4f5f7" font-weight="700" textLength="167" lengthAdjust="spacingAndGlyphs">/v1/onboard</text>
<text x="277.0" y="1599.0" font-size="24.5" fill="#52d18e" textLength="205.5" lengthAdjust="spacingAndGlyphs">159.26M Requests</text>
<text x="276.0" y="1943.0" font-size="29.5" fill="#f4f5f7" font-weight="700" textLength="73" lengthAdjust="spacingAndGlyphs">/ping</text>
<text x="276.0" y="1981.0" font-size="24.5" fill="#52d18e" textLength="205" lengthAdjust="spacingAndGlyphs">126.87M Requests</text>
<text x="1285.0" y="1668.0" font-size="29.5" fill="#f4f5f7" font-weight="700" textLength="76" lengthAdjust="spacingAndGlyphs">other</text>
<text x="1285.0" y="1707.0" font-size="24.5" fill="#b3d872" textLength="195.5" lengthAdjust="spacingAndGlyphs">92.82M Requests</text>
<text x="1767.5" y="1680.0" font-size="25" fill="#f4f5f7" font-weight="700" textLength="107" lengthAdjust="spacingAndGlyphs">/v1/anal...</text>
<text x="1767.5" y="1710.0" font-size="19" fill="#52d18e" textLength="103.4" lengthAdjust="spacingAndGlyphs">32.02M Re...</text>
<text x="1285.0" y="1828.0" font-size="25" fill="#f4f5f7" font-weight="700" textLength="120.5" lengthAdjust="spacingAndGlyphs">/v1/picture</text>
<text x="1285.0" y="1858.6" font-size="19" fill="#f5ad45" textLength="139.4" lengthAdjust="spacingAndGlyphs">11.49M Requests</text>
<text x="1518.0" y="1828.0" font-size="25" fill="#f4f5f7" font-weight="700" textLength="118.7" lengthAdjust="spacingAndGlyphs">/v1/notifi...</text>
<text x="1518.0" y="1857.0" font-size="19" fill="#b3d872" textLength="116" lengthAdjust="spacingAndGlyphs">8.88M Requ...</text>
<rect x="242.5" y="2084" width="90.5" height="9" fill="#f1573a"/>
<text x="287.8" y="2125.0" font-size="18" fill="#80878f" text-anchor="middle">Degraded</text>
<rect x="339" y="2084" width="90" height="9" fill="#f59a1e"/>
<text x="384.0" y="2125.0" font-size="18" fill="#80878f" text-anchor="middle">Poor</text>
<rect x="434.5" y="2084" width="90.5" height="9" fill="#f4de48"/>
<text x="479.8" y="2125.0" font-size="18" fill="#80878f" text-anchor="middle">Fair</text>
<rect x="531" y="2084" width="90" height="9" fill="#98c94e"/>
<text x="576.0" y="2125.0" font-size="18" fill="#80878f" text-anchor="middle">Good</text>
<rect x="626.5" y="2084" width="90.5" height="9" fill="#2cc463"/>
<text x="671.8" y="2125.0" font-size="18" fill="#80878f" text-anchor="middle">Excellent</text>
<rect x="147" y="2240" width="1387" height="600" rx="22" fill="#222933"/>
<text x="184.0" y="2307.0" font-size="27" fill="#f4f5f7" font-weight="700" textLength="476" lengthAdjust="spacingAndGlyphs">Client-Side Network Failures by Type</text>
<path d="M1371 2286 H1385 M1372 2286 L1370.5 2299.5 M1384 2286 L1385.5 2299.5 M1369 2299.5 H1387 M1378 2299.5 V2305.5" stroke="#9ba3ad" stroke-width="2" fill="none" stroke-linecap="round"/>
<g stroke="#9ba3ad" stroke-width="2" fill="none" stroke-linecap="round" stroke-linejoin="round"><path d="M1424.2 2292.2 V2287.2 H1429.2 M1424.2 2287.2 L1429.5 2292.5"/><path d="M1439.8 2292.2 V2287.2 H1434.8 M1439.8 2287.2 L1434.5 2292.5"/><path d="M1424.2 2297.8 V2302.8 H1429.2 M1424.2 2302.8 L1429.5 2297.5"/><path d="M1439.8 2297.8 V2302.8 H1434.8 M1439.8 2302.8 L1434.5 2297.5"/></g>
<circle cx="1486" cy="2287.5" r="1.6" fill="#9ba3ad"/>
<circle cx="1486" cy="2294" r="1.6" fill="#9ba3ad"/>
<circle cx="1486" cy="2300.5" r="1.6" fill="#9ba3ad"/>
<circle cx="200.7" cy="2374.3" r="5" fill="#10b981"/>
<text x="219.2" y="2380.2" font-size="32" fill="#f4f5f7" font-weight="700" textLength="132.5" lengthAdjust="spacingAndGlyphs">226.52M</text>
<text x="219.2" y="2416.8" font-size="19" fill="#9ca3ab" textLength="137" lengthAdjust="spacingAndGlyphs">Error Code -1009</text>
<circle cx="533" cy="2374.3" r="5" fill="#8c46f0"/>
<text x="551.5" y="2380.2" font-size="32" fill="#f4f5f7" font-weight="700" textLength="120" lengthAdjust="spacingAndGlyphs">191.05M</text>
<text x="551.5" y="2416.8" font-size="19" fill="#9ca3ab" textLength="133" lengthAdjust="spacingAndGlyphs">Error Code -1001</text>
<circle cx="864" cy="2374.3" r="5" fill="#f3ab25"/>
<text x="882.5" y="2380.2" font-size="32" fill="#f4f5f7" font-weight="700" textLength="112" lengthAdjust="spacingAndGlyphs">76.99M</text>
<text x="882.5" y="2416.8" font-size="19" fill="#9ca3ab" textLength="137" lengthAdjust="spacingAndGlyphs">Error Code -1005</text>
<circle cx="1196" cy="2374.3" r="5" fill="#1db5d6"/>
<text x="1214.5" y="2380.2" font-size="32" fill="#f4f5f7" font-weight="700" textLength="108.6" lengthAdjust="spacingAndGlyphs">42.72M</text>
<text x="1214.5" y="2416.8" font-size="19" fill="#9ca3ab" textLength="46" lengthAdjust="spacingAndGlyphs">Other</text>
<text x="230.0" y="2522.0" font-size="19" fill="#9aa1ab" text-anchor="end">2.5M</text>
<text x="230.0" y="2567.4" font-size="19" fill="#9aa1ab" text-anchor="end">2M</text>
<text x="230.0" y="2612.8" font-size="19" fill="#9aa1ab" text-anchor="end">1.5M</text>
<text x="230.0" y="2658.2" font-size="19" fill="#9aa1ab" text-anchor="end">1M</text>
<text x="230.0" y="2703.6" font-size="19" fill="#9aa1ab" text-anchor="end">500K</text>
<text x="230.0" y="2749.0" font-size="19" fill="#9aa1ab" text-anchor="end">0</text>
<path d="M250 2495.7 H1453" stroke="#2c333d" stroke-width="1.5"/>
<path d="M250 2536.5 H1453" stroke="#2c333d" stroke-width="1.5"/>
<path d="M250 2577.6 H1453" stroke="#2c333d" stroke-width="1.5"/>
<path d="M250 2618.7 H1453" stroke="#2c333d" stroke-width="1.5"/>
<path d="M250 2659.9 H1453" stroke="#2c333d" stroke-width="1.5"/>
<path d="M250 2701.3 H1453" stroke="#2c333d" stroke-width="1.5"/>
<path d="M250 2744.0 H1453" stroke="#4a515b" stroke-width="2" stroke-dasharray="2 18"/>
<text x="304.0" y="2776.0" font-size="18.5" fill="#9aa1ab" textLength="110" lengthAdjust="spacingAndGlyphs">03 Sep 00:00</text>
<text x="647.0" y="2776.0" font-size="18.5" fill="#9aa1ab" textLength="110" lengthAdjust="spacingAndGlyphs">05 Sep 00:00</text>
<text x="991.0" y="2776.0" font-size="18.5" fill="#9aa1ab" textLength="110" lengthAdjust="spacingAndGlyphs">07 Sep 00:00</text>
<text x="1335.0" y="2776.0" font-size="18.5" fill="#9aa1ab" textLength="110" lengthAdjust="spacingAndGlyphs">09 Sep 00:00</text>
<path d="M250.5 2710.9 L253.5 2709.2 L256.5 2706.9 L259.5 2704.3 L262.5 2701.4 L265.5 2698.2 L268.5 2694.6 L271.5 2690.9 L274.5 2687.1 L277.5 2683.3 L280.5 2679.6 L283.5 2676.2 L286.5 2673.2 L289.6 2670.8 L292.6 2669.0 L295.6 2667.7 L298.6 2666.9 L301.6 2666.4 L304.6 2665.9 L307.6 2665.2 L310.6 2664.3 L313.6 2663.3 L316.6 2662.2 L319.6 2661.0 L322.6 2659.8 L325.6 2658.7 L328.7 2657.6 L331.7 2656.6 L334.7 2655.7 L337.7 2655.0 L340.7 2654.5 L343.7 2654.4 L346.7 2654.7 L349.7 2655.6 L352.7 2657.2 L355.7 2659.2 L358.7 2661.6 L361.7 2664.2 L364.7 2667.0 L367.7 2670.1 L370.8 2673.2 L373.8 2676.4 L376.8 2679.6 L379.8 2682.7 L382.8 2685.7 L385.8 2688.5 L388.8 2691.2 L391.8 2693.8 L394.8 2696.4 L397.8 2698.8 L400.8 2701.2 L403.8 2703.5 L406.8 2705.7 L409.9 2707.6 L412.9 2709.1 L415.9 2709.8 L418.9 2708.9 L421.9 2706.3 L424.9 2703.0 L427.9 2699.8 L430.9 2696.5 L433.9 2693.2 L436.9 2689.8 L439.9 2686.6 L442.9 2683.5 L445.9 2680.8 L449.0 2678.4 L452.0 2676.6 L455.0 2675.2 L458.0 2674.4 L461.0 2673.7 L464.0 2673.2 L467.0 2672.5 L470.0 2671.6 L473.0 2670.6 L476.0 2669.4 L479.0 2668.1 L482.0 2666.8 L485.0 2665.6 L488.0 2664.4 L491.1 2663.2 L494.1 2662.2 L497.1 2661.3 L500.1 2660.6 L503.1 2660.1 L506.1 2659.9 L509.1 2660.0 L512.1 2660.5 L515.1 2661.4 L518.1 2662.7 L521.1 2664.2 L524.1 2666.0 L527.1 2668.0 L530.2 2670.2 L533.2 2672.5 L536.2 2675.0 L539.2 2677.5 L542.2 2680.0 L545.2 2682.5 L548.2 2684.9 L551.2 2687.2 L554.2 2689.5 L557.2 2691.7 L560.2 2693.8 L563.2 2696.0 L566.2 2698.2 L569.3 2700.3 L572.3 2702.4 L575.3 2704.4 L578.3 2706.3 L581.3 2708.1 L584.3 2709.8 L587.3 2711.0 L590.3 2711.4 L593.3 2710.2 L596.3 2706.9 L599.3 2703.0 L602.3 2699.1 L605.3 2695.3 L608.3 2691.5 L611.4 2687.8 L614.4 2684.3 L617.4 2681.2 L620.4 2678.6 L623.4 2676.5 L626.4 2674.9 L629.4 2673.7 L632.4 2672.7 L635.4 2671.7 L638.4 2670.7 L641.4 2669.7 L644.4 2668.6 L647.4 2667.4 L650.5 2666.2 L653.5 2665.0 L656.5 2663.9 L659.5 2662.8 L662.5 2661.8 L665.5 2661.0 L668.5 2660.2 L671.5 2659.7 L674.5 2659.4 L677.5 2659.3 L680.5 2659.6 L683.5 2660.3 L686.5 2661.4 L689.6 2662.8 L692.6 2664.5 L695.6 2666.4 L698.6 2668.6 L701.6 2670.9 L704.6 2673.4 L707.6 2675.9 L710.6 2678.5 L713.6 2681.0 L716.6 2683.6 L719.6 2686.1 L722.6 2688.5 L725.6 2690.8 L728.6 2693.1 L731.7 2695.2 L734.7 2697.4 L737.7 2699.5 L740.7 2701.6 L743.7 2703.6 L746.7 2705.7 L749.7 2707.6 L752.7 2709.6 L755.7 2711.4 L758.7 2713.2 L761.7 2714.8 L764.7 2716.1 L767.7 2716.9 L770.8 2716.3 L773.8 2713.9 L776.8 2710.3 L779.8 2706.6 L782.8 2702.8 L785.8 2699.0 L788.8 2695.3 L791.8 2691.8 L794.8 2688.6 L797.8 2685.8 L800.8 2683.5 L803.8 2681.5 L806.8 2679.7 L809.9 2678.2 L812.9 2676.7 L815.9 2675.1 L818.9 2673.5 L821.9 2671.7 L824.9 2669.6 L827.9 2667.3 L830.9 2664.8 L833.9 2662.3 L836.9 2660.0 L839.9 2658.0 L842.9 2656.5 L845.9 2655.7 L848.9 2655.9 L852.0 2656.6 L855.0 2657.7 L858.0 2658.9 L861.0 2660.3 L864.0 2661.8 L867.0 2663.4 L870.0 2665.1 L873.0 2667.1 L876.0 2669.2 L879.0 2671.5 L882.0 2673.9 L885.0 2676.6 L888.0 2679.3 L891.1 2682.0 L894.1 2684.8 L897.1 2687.5 L900.1 2690.3 L903.1 2692.9 L906.1 2695.6 L909.1 2698.4 L912.1 2701.2 L915.1 2704.0 L918.1 2706.8 L921.1 2709.5 L924.1 2712.2 L927.1 2714.8 L930.2 2717.2 L933.2 2719.4 L936.2 2721.2 L939.2 2722.3 L942.2 2722.4 L945.2 2720.8 L948.2 2717.8 L951.2 2713.9 L954.2 2709.7 L957.2 2705.2 L960.2 2700.3 L963.2 2695.4 L966.2 2690.7 L969.2 2686.4 L972.3 2682.9 L975.3 2680.3 L978.3 2678.7 L981.3 2677.7 L984.3 2676.9 L987.3 2676.0 L990.3 2674.9 L993.3 2673.5 L996.3 2672.0 L999.3 2670.4 L1002.3 2668.8 L1005.3 2667.2 L1008.3 2665.7 L1011.4 2664.2 L1014.4 2662.7 L1017.4 2661.3 L1020.4 2660.1 L1023.4 2659.1 L1026.4 2658.3 L1029.4 2657.9 L1032.4 2658.0 L1035.4 2658.6 L1038.4 2660.0 L1041.4 2662.0 L1044.4 2664.4 L1047.4 2666.9 L1050.4 2669.3 L1053.5 2671.8 L1056.5 2674.4 L1059.5 2677.1 L1062.5 2679.9 L1065.5 2682.7 L1068.5 2685.5 L1071.5 2688.4 L1074.5 2691.2 L1077.5 2693.9 L1080.5 2696.6 L1083.5 2699.2 L1086.5 2701.8 L1089.5 2704.4 L1092.6 2707.1 L1095.6 2709.7 L1098.6 2712.2 L1101.6 2714.6 L1104.6 2716.6 L1107.6 2718.2 L1110.6 2719.1 L1113.6 2719.0 L1116.6 2717.8 L1119.6 2715.3 L1122.6 2711.8 L1125.6 2707.8 L1128.6 2704.0 L1131.7 2700.4 L1134.7 2696.8 L1137.7 2693.2 L1140.7 2689.8 L1143.7 2686.7 L1146.7 2684.2 L1149.7 2682.0 L1152.7 2680.2 L1155.7 2678.6 L1158.7 2677.1 L1161.7 2675.7 L1164.7 2674.4 L1167.7 2673.1 L1170.7 2671.8 L1173.8 2670.5 L1176.8 2669.1 L1179.8 2667.8 L1182.8 2666.4 L1185.8 2665.1 L1188.8 2663.9 L1191.8 2662.9 L1194.8 2662.1 L1197.8 2661.6 L1200.8 2661.3 L1203.8 2661.4 L1206.8 2661.9 L1209.8 2662.8 L1212.9 2664.1 L1215.9 2665.7 L1218.9 2667.6 L1221.9 2669.8 L1224.9 2672.1 L1227.9 2674.6 L1230.9 2677.3 L1233.9 2680.1 L1236.9 2682.9 L1239.9 2685.8 L1242.9 2688.6 L1245.9 2691.4 L1248.9 2694.0 L1252.0 2696.7 L1255.0 2699.3 L1258.0 2701.9 L1261.0 2704.5 L1264.0 2707.2 L1267.0 2709.7 L1270.0 2712.2 L1273.0 2714.6 L1276.0 2716.7 L1279.0 2718.5 L1282.0 2719.8 L1285.0 2720.3 L1288.0 2719.4 L1291.0 2717.0 L1294.1 2713.4 L1297.1 2709.3 L1300.1 2704.9 L1303.1 2700.0 L1306.1 2695.1 L1309.1 2690.5 L1312.1 2686.5 L1315.1 2683.3 L1318.1 2681.0 L1321.1 2679.2 L1324.1 2677.8 L1327.1 2676.6 L1330.1 2675.4 L1333.2 2674.2 L1336.2 2672.8 L1339.2 2671.3 L1342.2 2669.8 L1345.2 2668.2 L1348.2 2666.7 L1351.2 2665.1 L1354.2 2663.7 L1357.2 2662.2 L1360.2 2660.9 L1363.2 2659.7 L1366.2 2658.8 L1369.2 2658.0 L1372.3 2657.6 L1375.3 2657.5 L1378.3 2657.9 L1381.3 2658.8 L1384.3 2660.4 L1387.3 2662.3 L1390.3 2664.5 L1393.3 2667.0 L1396.3 2669.7 L1399.3 2672.6 L1402.3 2675.7 L1405.3 2678.8 L1408.3 2682.0 L1411.3 2685.2 L1414.4 2688.4 L1417.4 2691.5 L1420.4 2694.5 L1423.4 2697.5 L1426.4 2700.2 L1429.4 2702.8 L1432.4 2705.2 L1435.4 2707.6 L1438.4 2709.8 L1441.4 2712.0 L1444.4 2714.1 L1447.4 2716.3 L1450.4 2718.2 L1453.5 2719.7" fill="none" stroke="#f3ab25" stroke-width="3.2" stroke-linejoin="round" stroke-linecap="round"/>
<path d="M250.5 2737.0 L253.5 2735.2 L256.5 2732.7 L259.5 2730.1 L262.5 2727.5 L265.5 2724.9 L268.5 2722.5 L271.5 2720.1 L274.5 2717.9 L277.5 2716.0 L280.5 2714.3 L283.5 2713.1 L286.5 2712.2 L289.6 2711.6 L292.6 2711.2 L295.6 2710.7 L298.6 2710.1 L301.6 2709.4 L304.6 2708.6 L307.6 2707.7 L310.6 2706.8 L313.6 2706.0 L316.6 2705.2 L319.6 2704.4 L322.6 2703.8 L325.6 2703.3 L328.7 2703.0 L331.7 2702.9 L334.7 2703.0 L337.7 2703.3 L340.7 2703.8 L343.7 2704.6 L346.7 2705.5 L349.7 2706.5 L352.7 2707.7 L355.7 2709.1 L358.7 2710.5 L361.7 2712.0 L364.7 2713.5 L367.7 2715.0 L370.8 2716.5 L373.8 2717.9 L376.8 2719.3 L379.8 2720.6 L382.8 2721.9 L385.8 2723.2 L388.8 2724.5 L391.8 2725.8 L394.8 2727.0 L397.8 2728.3 L400.8 2729.5 L403.8 2730.6 L406.8 2731.6 L409.9 2732.6 L412.9 2733.3 L415.9 2733.5 L418.9 2732.6 L421.9 2730.4 L424.9 2727.4 L427.9 2724.3 L430.9 2721.1 L433.9 2717.8 L436.9 2714.6 L439.9 2711.4 L442.9 2708.4 L445.9 2705.7 L449.0 2703.5 L452.0 2701.7 L455.0 2700.5 L458.0 2699.7 L461.0 2699.3 L464.0 2698.9 L467.0 2698.4 L470.0 2697.8 L473.0 2697.1 L476.0 2696.4 L479.0 2695.6 L482.0 2694.9 L485.0 2694.1 L488.0 2693.3 L491.1 2692.6 L494.1 2691.9 L497.1 2691.2 L500.1 2690.5 L503.1 2689.9 L506.1 2689.3 L509.1 2688.8 L512.1 2688.5 L515.1 2688.3 L518.1 2688.4 L521.1 2689.0 L524.1 2690.1 L527.1 2691.5 L530.2 2693.2 L533.2 2694.9 L536.2 2696.8 L539.2 2698.8 L542.2 2700.9 L545.2 2703.0 L548.2 2705.2 L551.2 2707.3 L554.2 2709.3 L557.2 2711.3 L560.2 2713.2 L563.2 2715.1 L566.2 2717.0 L569.3 2718.8 L572.3 2720.7 L575.3 2722.5 L578.3 2724.3 L581.3 2726.0 L584.3 2727.6 L587.3 2729.1 L590.3 2730.3 L593.3 2731.2 L596.3 2731.3 L599.3 2730.2 L602.3 2727.8 L605.3 2724.8 L608.3 2721.9 L611.4 2719.0 L614.4 2716.1 L617.4 2713.3 L620.4 2710.7 L623.4 2708.5 L626.4 2706.7 L629.4 2705.1 L632.4 2703.8 L635.4 2702.7 L638.4 2701.6 L641.4 2700.6 L644.4 2699.5 L647.4 2698.5 L650.5 2697.5 L653.5 2696.5 L656.5 2695.6 L659.5 2694.6 L662.5 2693.7 L665.5 2692.9 L668.5 2692.2 L671.5 2691.6 L674.5 2691.1 L677.5 2690.9 L680.5 2691.0 L683.5 2691.5 L686.5 2692.6 L689.6 2694.1 L692.6 2695.8 L695.6 2697.8 L698.6 2699.9 L701.6 2702.2 L704.6 2704.6 L707.6 2707.0 L710.6 2709.4 L713.6 2711.9 L716.6 2714.3 L719.6 2716.7 L722.6 2719.1 L725.6 2721.4 L728.6 2723.7 L731.7 2726.0 L734.7 2728.4 L737.7 2730.7 L740.7 2732.9 L743.7 2734.9 L746.7 2736.7 L749.7 2737.9 L752.7 2738.3 L755.7 2737.5 L758.7 2735.2 L761.7 2732.1 L764.7 2728.7 L767.7 2725.1 L770.8 2721.3 L773.8 2717.4 L776.8 2713.8 L779.8 2710.5 L782.8 2707.7 L785.8 2705.4 L788.8 2703.5 L791.8 2702.0 L794.8 2700.7 L797.8 2699.6 L800.8 2698.6 L803.8 2697.6 L806.8 2696.5 L809.9 2695.3 L812.9 2693.8 L815.9 2692.3 L818.9 2690.8 L821.9 2689.6 L824.9 2688.8 L827.9 2688.4 L830.9 2688.5 L833.9 2688.8 L836.9 2689.5 L839.9 2690.4 L842.9 2691.4 L845.9 2692.5 L848.9 2693.8 L852.0 2695.1 L855.0 2696.5 L858.0 2697.9 L861.0 2699.4 L864.0 2700.9 L867.0 2702.5 L870.0 2704.0 L873.0 2705.6 L876.0 2707.2 L879.0 2709.0 L882.0 2710.8 L885.0 2712.6 L888.0 2714.6 L891.1 2716.6 L894.1 2718.6 L897.1 2720.6 L900.1 2722.6 L903.1 2724.7 L906.1 2726.6 L909.1 2728.5 L912.1 2730.4 L915.1 2732.1 L918.1 2733.7 L921.1 2735.0 L924.1 2736.1 L927.1 2736.7 L930.2 2736.7 L933.2 2735.9 L936.2 2734.2 L939.2 2732.0 L942.2 2729.8 L945.2 2727.9 L948.2 2726.1 L951.2 2724.2 L954.2 2722.3 L957.2 2720.4 L960.2 2718.4 L963.2 2716.4 L966.2 2714.5 L969.2 2712.6 L972.3 2710.7 L975.3 2708.9 L978.3 2707.3 L981.3 2705.8 L984.3 2704.5 L987.3 2703.5 L990.3 2702.7 L993.3 2702.0 L996.3 2701.3 L999.3 2700.5 L1002.3 2699.6 L1005.3 2698.7 L1008.3 2697.7 L1011.4 2696.7 L1014.4 2695.7 L1017.4 2694.7 L1020.4 2693.7 L1023.4 2692.7 L1026.4 2691.8 L1029.4 2690.9 L1032.4 2690.1 L1035.4 2689.4 L1038.4 2688.7 L1041.4 2688.3 L1044.4 2687.9 L1047.4 2687.8 L1050.4 2688.1 L1053.5 2689.0 L1056.5 2690.4 L1059.5 2692.2 L1062.5 2694.0 L1065.5 2696.0 L1068.5 2698.1 L1071.5 2700.3 L1074.5 2702.6 L1077.5 2704.9 L1080.5 2707.2 L1083.5 2709.6 L1086.5 2712.0 L1089.5 2714.3 L1092.6 2716.7 L1095.6 2719.0 L1098.6 2721.3 L1101.6 2723.6 L1104.6 2725.8 L1107.6 2727.9 L1110.6 2729.8 L1113.6 2731.6 L1116.6 2733.0 L1119.6 2733.9 L1122.6 2733.9 L1125.6 2732.6 L1128.6 2730.4 L1131.7 2728.3 L1134.7 2726.5 L1137.7 2724.9 L1140.7 2723.2 L1143.7 2721.4 L1146.7 2719.7 L1149.7 2717.9 L1152.7 2716.1 L1155.7 2714.4 L1158.7 2712.7 L1161.7 2711.1 L1164.7 2709.6 L1167.7 2708.1 L1170.7 2706.8 L1173.8 2705.5 L1176.8 2704.3 L1179.8 2703.2 L1182.8 2702.1 L1185.8 2701.0 L1188.8 2700.0 L1191.8 2699.0 L1194.8 2698.1 L1197.8 2697.1 L1200.8 2696.3 L1203.8 2695.4 L1206.8 2694.7 L1209.8 2693.9 L1212.9 2693.3 L1215.9 2692.8 L1218.9 2692.4 L1221.9 2692.3 L1224.9 2692.9 L1227.9 2694.2 L1230.9 2696.0 L1233.9 2697.9 L1236.9 2699.8 L1239.9 2701.8 L1242.9 2703.9 L1245.9 2706.0 L1248.9 2708.2 L1252.0 2710.4 L1255.0 2712.6 L1258.0 2714.8 L1261.0 2717.0 L1264.0 2719.1 L1267.0 2721.2 L1270.0 2723.3 L1273.0 2725.3 L1276.0 2727.2 L1279.0 2729.0 L1282.0 2730.4 L1285.0 2731.4 L1288.0 2731.4 L1291.0 2729.8 L1294.1 2726.9 L1297.1 2723.8 L1300.1 2721.1 L1303.1 2718.4 L1306.1 2715.6 L1309.1 2712.8 L1312.1 2710.1 L1315.1 2707.5 L1318.1 2705.2 L1321.1 2703.3 L1324.1 2701.7 L1327.1 2700.7 L1330.1 2700.0 L1333.2 2699.5 L1336.2 2699.0 L1339.2 2698.4 L1342.2 2697.7 L1345.2 2696.9 L1348.2 2696.0 L1351.2 2695.0 L1354.2 2694.1 L1357.2 2693.1 L1360.2 2692.2 L1363.2 2691.3 L1366.2 2690.4 L1369.2 2689.6 L1372.3 2688.8 L1375.3 2688.2 L1378.3 2687.7 L1381.3 2687.5 L1384.3 2687.5 L1387.3 2688.0 L1390.3 2689.3 L1393.3 2691.2 L1396.3 2693.4 L1399.3 2695.8 L1402.3 2698.3 L1405.3 2701.0 L1408.3 2703.8 L1411.3 2706.7 L1414.4 2709.6 L1417.4 2712.5 L1420.4 2715.4 L1423.4 2718.2 L1426.4 2720.8 L1429.4 2723.3 L1432.4 2725.4 L1435.4 2727.2 L1438.4 2728.5 L1441.4 2729.4 L1444.4 2730.1 L1447.4 2730.4 L1450.4 2730.7 L1453.5 2730.9" fill="none" stroke="#1db5d6" stroke-width="3.2" stroke-linejoin="round" stroke-linecap="round"/>
<path d="M250.5 2674.5 L253.5 2666.4 L256.5 2655.5 L259.5 2644.3 L262.5 2633.3 L265.5 2622.7 L268.5 2612.3 L271.5 2602.6 L274.5 2594.0 L277.5 2587.1 L280.5 2581.9 L283.5 2578.3 L286.5 2575.7 L289.6 2573.8 L292.6 2572.2 L295.6 2570.7 L298.6 2569.2 L301.6 2567.8 L304.6 2566.4 L307.6 2565.2 L310.6 2564.0 L313.6 2563.0 L316.6 2562.1 L319.6 2561.5 L322.6 2561.1 L325.6 2561.2 L328.7 2561.7 L331.7 2562.9 L334.7 2564.8 L337.7 2567.3 L340.7 2570.4 L343.7 2573.8 L346.7 2577.5 L349.7 2581.6 L352.7 2585.8 L355.7 2590.3 L358.7 2594.9 L361.7 2599.6 L364.7 2604.4 L367.7 2609.4 L370.8 2614.5 L373.8 2619.9 L376.8 2625.4 L379.8 2630.9 L382.8 2636.3 L385.8 2641.7 L388.8 2646.8 L391.8 2651.7 L394.8 2656.3 L397.8 2660.7 L400.8 2664.9 L403.8 2668.9 L406.8 2672.5 L409.9 2675.7 L412.9 2678.2 L415.9 2679.7 L418.9 2679.7 L421.9 2677.3 L424.9 2672.1 L427.9 2665.1 L430.9 2657.2 L433.9 2648.5 L436.9 2639.4 L439.9 2630.1 L442.9 2620.8 L445.9 2611.7 L449.0 2602.9 L452.0 2594.9 L455.0 2587.7 L458.0 2581.8 L461.0 2577.3 L464.0 2574.0 L467.0 2571.9 L470.0 2570.4 L473.0 2569.0 L476.0 2567.5 L479.0 2565.8 L482.0 2563.9 L485.0 2562.0 L488.0 2560.1 L491.1 2558.4 L494.1 2556.8 L497.1 2555.4 L500.1 2554.3 L503.1 2553.7 L506.1 2553.6 L509.1 2554.2 L512.1 2555.7 L515.1 2558.2 L518.1 2561.6 L521.1 2565.6 L524.1 2570.1 L527.1 2574.9 L530.2 2580.2 L533.2 2585.7 L536.2 2591.5 L539.2 2597.4 L542.2 2603.4 L545.2 2609.4 L548.2 2615.6 L551.2 2621.9 L554.2 2628.5 L557.2 2635.1 L560.2 2641.8 L563.2 2648.4 L566.2 2654.9 L569.3 2660.9 L572.3 2666.3 L575.3 2670.6 L578.3 2672.9 L581.3 2672.1 L584.3 2668.2 L587.3 2661.3 L590.3 2652.5 L593.3 2642.6 L596.3 2632.1 L599.3 2621.1 L602.3 2609.9 L605.3 2598.8 L608.3 2588.2 L611.4 2578.4 L614.4 2569.8 L617.4 2563.0 L620.4 2558.6 L623.4 2556.7 L626.4 2556.6 L629.4 2556.9 L632.4 2556.7 L635.4 2555.9 L638.4 2554.7 L641.4 2553.4 L644.4 2552.0 L647.4 2550.7 L650.5 2549.3 L653.5 2548.0 L656.5 2546.8 L659.5 2545.6 L662.5 2544.5 L665.5 2543.6 L668.5 2543.0 L671.5 2542.7 L674.5 2543.1 L677.5 2544.7 L680.5 2547.4 L683.5 2551.0 L686.5 2555.1 L689.6 2559.6 L692.6 2564.4 L695.6 2569.6 L698.6 2575.0 L701.6 2580.8 L704.6 2586.9 L707.6 2593.4 L710.6 2600.2 L713.6 2607.3 L716.6 2614.5 L719.6 2621.6 L722.6 2628.6 L725.6 2635.2 L728.6 2641.6 L731.7 2647.7 L734.7 2653.8 L737.7 2659.6 L740.7 2665.1 L743.7 2670.1 L746.7 2674.5 L749.7 2677.9 L752.7 2680.0 L755.7 2680.7 L758.7 2679.8 L761.7 2677.3 L764.7 2673.5 L767.7 2668.6 L770.8 2662.3 L773.8 2655.0 L776.8 2647.3 L779.8 2639.6 L782.8 2632.3 L785.8 2625.4 L788.8 2618.8 L791.8 2612.2 L794.8 2605.8 L797.8 2599.6 L800.8 2593.7 L803.8 2588.3 L806.8 2583.4 L809.9 2579.2 L812.9 2575.6 L815.9 2572.6 L818.9 2570.1 L821.9 2567.8 L824.9 2565.7 L827.9 2563.6 L830.9 2561.3 L833.9 2558.9 L836.9 2556.2 L839.9 2553.3 L842.9 2550.5 L845.9 2547.6 L848.9 2545.0 L852.0 2542.6 L855.0 2540.6 L858.0 2539.3 L861.0 2538.9 L864.0 2539.5 L867.0 2541.6 L870.0 2545.2 L873.0 2550.1 L876.0 2555.8 L879.0 2562.2 L882.0 2569.2 L885.0 2576.5 L888.0 2584.1 L891.1 2591.8 L894.1 2599.5 L897.1 2607.0 L900.1 2614.5 L903.1 2622.1 L906.1 2629.8 L909.1 2637.5 L912.1 2645.2 L915.1 2652.6 L918.1 2659.4 L921.1 2665.1 L924.1 2669.1 L927.1 2669.8 L930.2 2665.5 L933.2 2656.9 L936.2 2645.8 L939.2 2633.4 L942.2 2620.1 L945.2 2606.5 L948.2 2593.3 L951.2 2581.3 L954.2 2571.2 L957.2 2564.3 L960.2 2561.2 L963.2 2560.7 L966.2 2560.6 L969.2 2559.8 L972.3 2558.4 L975.3 2556.7 L978.3 2555.0 L981.3 2553.3 L984.3 2551.6 L987.3 2549.9 L990.3 2548.3 L993.3 2546.6 L996.3 2545.0 L999.3 2543.5 L1002.3 2542.0 L1005.3 2540.7 L1008.3 2539.4 L1011.4 2538.4 L1014.4 2537.7 L1017.4 2537.3 L1020.4 2537.5 L1023.4 2539.0 L1026.4 2542.0 L1029.4 2546.2 L1032.4 2551.0 L1035.4 2556.2 L1038.4 2561.8 L1041.4 2567.6 L1044.4 2573.7 L1047.4 2579.9 L1050.4 2586.2 L1053.5 2592.5 L1056.5 2598.8 L1059.5 2605.1 L1062.5 2611.3 L1065.5 2617.5 L1068.5 2623.8 L1071.5 2630.2 L1074.5 2636.6 L1077.5 2643.1 L1080.5 2649.5 L1083.5 2655.8 L1086.5 2661.7 L1089.5 2667.3 L1092.6 2672.0 L1095.6 2675.3 L1098.6 2675.3 L1101.6 2670.4 L1104.6 2662.2 L1107.6 2652.8 L1110.6 2643.0 L1113.6 2632.8 L1116.6 2622.4 L1119.6 2612.0 L1122.6 2601.8 L1125.6 2591.9 L1128.6 2582.6 L1131.7 2574.3 L1134.7 2567.3 L1137.7 2562.0 L1140.7 2558.6 L1143.7 2556.5 L1146.7 2555.0 L1149.7 2553.3 L1152.7 2551.4 L1155.7 2549.4 L1158.7 2547.4 L1161.7 2545.5 L1164.7 2543.6 L1167.7 2541.8 L1170.7 2540.0 L1173.8 2538.4 L1176.8 2537.0 L1179.8 2535.7 L1182.8 2534.8 L1185.8 2534.2 L1188.8 2534.1 L1191.8 2534.9 L1194.8 2536.9 L1197.8 2540.1 L1200.8 2544.0 L1203.8 2548.4 L1206.8 2553.2 L1209.8 2558.3 L1212.9 2563.7 L1215.9 2569.2 L1218.9 2574.9 L1221.9 2580.5 L1224.9 2586.0 L1227.9 2591.5 L1230.9 2596.8 L1233.9 2602.0 L1236.9 2607.2 L1239.9 2612.4 L1242.9 2617.6 L1245.9 2622.8 L1248.9 2628.0 L1252.0 2633.2 L1255.0 2638.4 L1258.0 2643.5 L1261.0 2648.5 L1264.0 2653.4 L1267.0 2658.2 L1270.0 2662.9 L1273.0 2667.2 L1276.0 2671.2 L1279.0 2674.7 L1282.0 2677.1 L1285.0 2677.0 L1288.0 2673.2 L1291.0 2666.4 L1294.1 2659.0 L1297.1 2651.6 L1300.1 2643.8 L1303.1 2635.7 L1306.1 2627.5 L1309.1 2619.2 L1312.1 2610.9 L1315.1 2602.6 L1318.1 2594.5 L1321.1 2586.8 L1324.1 2579.5 L1327.1 2572.9 L1330.1 2567.5 L1333.2 2563.6 L1336.2 2561.7 L1339.2 2561.2 L1342.2 2560.8 L1345.2 2560.0 L1348.2 2558.8 L1351.2 2557.3 L1354.2 2555.8 L1357.2 2554.3 L1360.2 2552.9 L1363.2 2551.4 L1366.2 2550.0 L1369.2 2548.6 L1372.3 2547.3 L1375.3 2546.1 L1378.3 2545.0 L1381.3 2544.1 L1384.3 2543.4 L1387.3 2543.0 L1390.3 2543.0 L1393.3 2543.7 L1396.3 2545.4 L1399.3 2548.6 L1402.3 2553.0 L1405.3 2558.4 L1408.3 2564.6 L1411.3 2571.6 L1414.4 2579.3 L1417.4 2587.3 L1420.4 2595.4 L1423.4 2603.3 L1426.4 2610.9 L1429.4 2618.3 L1432.4 2625.7 L1435.4 2633.0 L1438.4 2640.4 L1441.4 2647.7 L1444.4 2655.0 L1447.4 2662.3 L1450.4 2669.2 L1453.5 2674.3" fill="none" stroke="#8c46f0" stroke-width="3.2" stroke-linejoin="round" stroke-linecap="round"/>
<path d="M250.5 2650.5 L253.5 2640.0 L256.5 2626.1 L259.5 2612.4 L262.5 2599.8 L265.5 2588.5 L268.5 2578.3 L271.5 2569.2 L274.5 2561.6 L277.5 2555.4 L280.5 2550.8 L283.5 2547.6 L286.5 2545.3 L289.6 2543.7 L292.6 2542.4 L295.6 2541.0 L298.6 2539.5 L301.6 2537.8 L304.6 2536.1 L307.6 2534.2 L310.6 2532.4 L313.6 2530.6 L316.6 2528.9 L319.6 2527.2 L322.6 2525.7 L325.6 2524.4 L328.7 2523.2 L331.7 2522.4 L334.7 2522.0 L337.7 2521.8 L340.7 2522.1 L343.7 2523.2 L346.7 2525.2 L349.7 2528.3 L352.7 2532.5 L355.7 2537.5 L358.7 2543.3 L361.7 2549.9 L364.7 2557.0 L367.7 2564.4 L370.8 2572.0 L373.8 2579.7 L376.8 2587.2 L379.8 2594.4 L382.8 2601.2 L385.8 2607.5 L388.8 2613.5 L391.8 2619.2 L394.8 2624.8 L397.8 2630.2 L400.8 2635.3 L403.8 2640.0 L406.8 2644.2 L409.9 2647.7 L412.9 2650.3 L415.9 2651.6 L418.9 2651.3 L421.9 2649.1 L424.9 2645.0 L427.9 2639.1 L430.9 2631.5 L433.9 2622.4 L436.9 2611.1 L439.9 2596.9 L442.9 2580.9 L445.9 2566.5 L449.0 2555.9 L452.0 2549.1 L455.0 2544.9 L458.0 2542.3 L461.0 2540.5 L464.0 2539.0 L467.0 2537.5 L470.0 2535.5 L473.0 2533.2 L476.0 2530.6 L479.0 2527.9 L482.0 2525.4 L485.0 2523.2 L488.0 2521.6 L491.1 2520.7 L494.1 2520.4 L497.1 2520.8 L500.1 2521.7 L503.1 2523.2 L506.1 2525.4 L509.1 2528.2 L512.1 2531.7 L515.1 2535.8 L518.1 2540.8 L521.1 2546.4 L524.1 2552.7 L527.1 2559.4 L530.2 2566.3 L533.2 2573.2 L536.2 2580.0 L539.2 2586.5 L542.2 2592.7 L545.2 2598.5 L548.2 2603.9 L551.2 2609.1 L554.2 2614.1 L557.2 2618.8 L560.2 2623.3 L563.2 2627.5 L566.2 2631.5 L569.3 2635.3 L572.3 2639.0 L575.3 2642.5 L578.3 2645.8 L581.3 2648.9 L584.3 2651.5 L587.3 2653.4 L590.3 2654.5 L593.3 2654.0 L596.3 2651.4 L599.3 2646.3 L602.3 2639.3 L605.3 2631.5 L608.3 2623.3 L611.4 2614.8 L614.4 2605.9 L617.4 2596.8 L620.4 2587.9 L623.4 2579.2 L626.4 2570.9 L629.4 2563.4 L632.4 2556.8 L635.4 2551.3 L638.4 2547.1 L641.4 2544.0 L644.4 2541.8 L647.4 2540.2 L650.5 2539.0 L653.5 2537.9 L656.5 2536.5 L659.5 2534.8 L662.5 2532.8 L665.5 2530.7 L668.5 2528.5 L671.5 2526.5 L674.5 2524.7 L677.5 2523.3 L680.5 2522.4 L683.5 2522.2 L686.5 2522.6 L689.6 2523.6 L692.6 2525.3 L695.6 2527.6 L698.6 2530.7 L701.6 2534.5 L704.6 2539.0 L707.6 2544.2 L710.6 2550.2 L713.6 2556.9 L716.6 2564.2 L719.6 2571.9 L722.6 2579.6 L725.6 2587.3 L728.6 2594.7 L731.7 2601.7 L734.7 2608.1 L737.7 2613.8 L740.7 2619.2 L743.7 2624.2 L746.7 2628.9 L749.7 2633.4 L752.7 2637.7 L755.7 2641.8 L758.7 2645.7 L761.7 2649.3 L764.7 2652.4 L767.7 2654.2 L770.8 2653.8 L773.8 2650.6 L776.8 2644.8 L779.8 2637.2 L782.8 2629.0 L785.8 2620.8 L788.8 2612.4 L791.8 2603.9 L794.8 2595.6 L797.8 2587.4 L800.8 2579.8 L803.8 2572.8 L806.8 2566.7 L809.9 2561.6 L812.9 2557.5 L815.9 2554.4 L818.9 2551.9 L821.9 2549.9 L824.9 2548.0 L827.9 2546.1 L830.9 2543.9 L833.9 2541.3 L836.9 2538.4 L839.9 2535.4 L842.9 2532.2 L845.9 2529.1 L848.9 2526.1 L852.0 2523.4 L855.0 2521.0 L858.0 2519.3 L861.0 2518.2 L864.0 2518.2 L867.0 2519.5 L870.0 2522.3 L873.0 2526.3 L876.0 2530.9 L879.0 2536.0 L882.0 2541.6 L885.0 2547.4 L888.0 2553.5 L891.1 2559.8 L894.1 2566.1 L897.1 2572.5 L900.1 2578.9 L903.1 2585.5 L906.1 2592.3 L909.1 2599.5 L912.1 2607.0 L915.1 2614.6 L918.1 2622.1 L921.1 2629.5 L924.1 2636.4 L927.1 2642.8 L930.2 2648.2 L933.2 2652.2 L936.2 2654.2 L939.2 2653.7 L942.2 2650.0 L945.2 2643.5 L948.2 2635.5 L951.2 2627.2 L954.2 2618.6 L957.2 2609.4 L960.2 2599.7 L963.2 2589.7 L966.2 2579.8 L969.2 2570.2 L972.3 2561.2 L975.3 2553.0 L978.3 2545.8 L981.3 2539.6 L984.3 2534.3 L987.3 2529.5 L990.3 2525.3 L993.3 2521.5 L996.3 2518.2 L999.3 2515.3 L1002.3 2512.8 L1005.3 2510.7 L1008.3 2509.1 L1011.4 2508.1 L1014.4 2507.7 L1017.4 2508.1 L1020.4 2509.3 L1023.4 2511.3 L1026.4 2514.1 L1029.4 2517.6 L1032.4 2521.5 L1035.4 2526.0 L1038.4 2531.1 L1041.4 2536.9 L1044.4 2543.4 L1047.4 2550.2 L1050.4 2557.2 L1053.5 2564.2 L1056.5 2570.9 L1059.5 2577.3 L1062.5 2583.3 L1065.5 2589.1 L1068.5 2594.8 L1071.5 2600.5 L1074.5 2606.1 L1077.5 2611.7 L1080.5 2617.3 L1083.5 2622.7 L1086.5 2628.1 L1089.5 2633.3 L1092.6 2638.4 L1095.6 2643.2 L1098.6 2647.8 L1101.6 2651.8 L1104.6 2655.2 L1107.6 2657.2 L1110.6 2656.2 L1113.6 2651.1 L1116.6 2643.2 L1119.6 2634.9 L1122.6 2626.6 L1125.6 2618.1 L1128.6 2609.3 L1131.7 2600.3 L1134.7 2591.3 L1137.7 2582.3 L1140.7 2573.5 L1143.7 2564.8 L1146.7 2556.6 L1149.7 2548.9 L1152.7 2542.0 L1155.7 2536.2 L1158.7 2531.9 L1161.7 2529.2 L1164.7 2527.9 L1167.7 2527.3 L1170.7 2526.6 L1173.8 2525.5 L1176.8 2523.9 L1179.8 2522.2 L1182.8 2520.3 L1185.8 2518.4 L1188.8 2516.6 L1191.8 2514.7 L1194.8 2512.9 L1197.8 2511.2 L1200.8 2509.5 L1203.8 2507.9 L1206.8 2506.3 L1209.8 2505.0 L1212.9 2503.8 L1215.9 2503.0 L1218.9 2502.4 L1221.9 2502.3 L1224.9 2503.2 L1227.9 2505.6 L1230.9 2509.8 L1233.9 2515.5 L1236.9 2522.2 L1239.9 2530.0 L1242.9 2538.4 L1245.9 2547.4 L1248.9 2556.6 L1252.0 2565.8 L1255.0 2574.8 L1258.0 2583.7 L1261.0 2592.6 L1264.0 2601.6 L1267.0 2610.9 L1270.0 2620.0 L1273.0 2628.8 L1276.0 2636.8 L1279.0 2643.6 L1282.0 2648.5 L1285.0 2650.5 L1288.0 2648.5 L1291.0 2642.5 L1294.1 2634.0 L1297.1 2624.7 L1300.1 2615.0 L1303.1 2604.6 L1306.1 2593.7 L1309.1 2582.8 L1312.1 2572.1 L1315.1 2561.9 L1318.1 2552.6 L1321.1 2544.3 L1324.1 2537.2 L1327.1 2531.4 L1330.1 2526.5 L1333.2 2522.5 L1336.2 2519.1 L1339.2 2516.2 L1342.2 2513.8 L1345.2 2511.8 L1348.2 2510.3 L1351.2 2509.2 L1354.2 2508.4 L1357.2 2508.1 L1360.2 2508.4 L1363.2 2509.3 L1366.2 2511.2 L1369.2 2513.8 L1372.3 2517.3 L1375.3 2521.3 L1378.3 2525.9 L1381.3 2530.8 L1384.3 2536.3 L1387.3 2542.2 L1390.3 2548.6 L1393.3 2555.3 L1396.3 2562.1 L1399.3 2568.9 L1402.3 2575.7 L1405.3 2582.3 L1408.3 2588.7 L1411.3 2594.7 L1414.4 2600.4 L1417.4 2605.7 L1420.4 2610.6 L1423.4 2615.4 L1426.4 2619.9 L1429.4 2624.4 L1432.4 2628.7 L1435.4 2632.9 L1438.4 2637.1 L1441.4 2641.3 L1444.4 2645.4 L1447.4 2649.4 L1450.4 2653.3 L1453.5 2656.2" fill="none" stroke="#17a57a" stroke-width="3.2" stroke-linejoin="round" stroke-linecap="round"/>
<rect x="1558" y="2240" width="1388" height="600" rx="22" fill="#222933"/>
<text x="1595.0" y="2307.0" font-size="27" fill="#f4f5f7" font-weight="700" textLength="325" lengthAdjust="spacingAndGlyphs">Network Failures by Type</text>
<path d="M2783 2286 H2797 M2784 2286 L2782.5 2299.5 M2796 2286 L2797.5 2299.5 M2781 2299.5 H2799 M2790 2299.5 V2305.5" stroke="#9ba3ad" stroke-width="2" fill="none" stroke-linecap="round"/>
<g stroke="#9ba3ad" stroke-width="2" fill="none" stroke-linecap="round" stroke-linejoin="round"><path d="M2836.2 2292.2 V2287.2 H2841.2 M2836.2 2287.2 L2841.5 2292.5"/><path d="M2851.8 2292.2 V2287.2 H2846.8 M2851.8 2287.2 L2846.5 2292.5"/><path d="M2836.2 2297.8 V2302.8 H2841.2 M2836.2 2302.8 L2841.5 2297.5"/><path d="M2851.8 2297.8 V2302.8 H2846.8 M2851.8 2302.8 L2846.5 2297.5"/></g>
<circle cx="2898" cy="2287.5" r="1.6" fill="#9ba3ad"/>
<circle cx="2898" cy="2294" r="1.6" fill="#9ba3ad"/>
<circle cx="2898" cy="2300.5" r="1.6" fill="#9ba3ad"/>
<circle cx="1612" cy="2374.3" r="5" fill="#10b981"/>
<text x="1630.5" y="2380.2" font-size="32" fill="#f4f5f7" font-weight="700" textLength="134" lengthAdjust="spacingAndGlyphs">465.48M</text>
<text x="1630.5" y="2416.8" font-size="19" fill="#9ca3ab" textLength="104" lengthAdjust="spacingAndGlyphs">Client Errors</text>
<circle cx="2054" cy="2374.3" r="5" fill="#8c46f0"/>
<text x="2072.5" y="2380.2" font-size="32" fill="#f4f5f7" font-weight="700" textLength="125" lengthAdjust="spacingAndGlyphs">174.44M</text>
<text x="2072.5" y="2416.8" font-size="19" fill="#9ca3ab" textLength="102" lengthAdjust="spacingAndGlyphs">4xx Failures</text>
<circle cx="2497" cy="2374.3" r="5" fill="#f3ab25"/>
<text x="2515.5" y="2380.2" font-size="32" fill="#f4f5f7" font-weight="700" textLength="82" lengthAdjust="spacingAndGlyphs">7.01M</text>
<text x="2515.5" y="2416.8" font-size="19" fill="#9ca3ab" textLength="102" lengthAdjust="spacingAndGlyphs">5xx Failures</text>
<text x="1642.0" y="2533.0" font-size="19" fill="#9aa1ab" text-anchor="end">5M</text>
<text x="1642.0" y="2576.2" font-size="19" fill="#9aa1ab" text-anchor="end">4M</text>
<text x="1642.0" y="2619.4" font-size="19" fill="#9aa1ab" text-anchor="end">3M</text>
<text x="1642.0" y="2662.6" font-size="19" fill="#9aa1ab" text-anchor="end">2M</text>
<text x="1642.0" y="2705.8" font-size="19" fill="#9aa1ab" text-anchor="end">1M</text>
<text x="1642.0" y="2749.0" font-size="19" fill="#9aa1ab" text-anchor="end">0</text>
<path d="M1662 2495.7 H2865" stroke="#2c333d" stroke-width="1.5"/>
<path d="M1662 2536.5 H2865" stroke="#2c333d" stroke-width="1.5"/>
<path d="M1662 2577.6 H2865" stroke="#2c333d" stroke-width="1.5"/>
<path d="M1662 2618.7 H2865" stroke="#2c333d" stroke-width="1.5"/>
<path d="M1662 2659.9 H2865" stroke="#2c333d" stroke-width="1.5"/>
<path d="M1662 2701.3 H2865" stroke="#2c333d" stroke-width="1.5"/>
<path d="M1662 2744.0 H2865" stroke="#4a515b" stroke-width="2" stroke-dasharray="2 18"/>
<text x="1715.0" y="2776.0" font-size="18.5" fill="#9aa1ab" textLength="110" lengthAdjust="spacingAndGlyphs">03 Sep 00:00</text>
<text x="2059.0" y="2776.0" font-size="18.5" fill="#9aa1ab" textLength="110" lengthAdjust="spacingAndGlyphs">05 Sep 00:00</text>
<text x="2403.0" y="2776.0" font-size="18.5" fill="#9aa1ab" textLength="110" lengthAdjust="spacingAndGlyphs">07 Sep 00:00</text>
<text x="2746.0" y="2776.0" font-size="18.5" fill="#9aa1ab" textLength="110" lengthAdjust="spacingAndGlyphs">09 Sep 00:00</text>
<path d="M1662.2 2743.1 L1665.2 2742.9 L1668.2 2742.7 L1671.2 2742.5 L1674.2 2742.3 L1677.2 2742.1 L1680.2 2741.8 L1683.3 2741.6 L1686.3 2741.4 L1689.3 2741.2 L1692.3 2741.0 L1695.3 2740.8 L1698.3 2740.7 L1701.3 2740.5 L1704.3 2740.3 L1707.3 2740.2 L1710.3 2740.1 L1713.3 2740.0 L1716.3 2739.9 L1719.3 2739.8 L1722.3 2739.7 L1725.4 2739.7 L1728.4 2739.7 L1731.4 2739.7 L1734.4 2739.7 L1737.4 2739.7 L1740.4 2739.8 L1743.4 2739.9 L1746.4 2739.9 L1749.4 2740.0 L1752.4 2740.1 L1755.4 2740.2 L1758.4 2740.3 L1761.4 2740.4 L1764.5 2740.5 L1767.5 2740.6 L1770.5 2740.7 L1773.5 2740.8 L1776.5 2740.9 L1779.5 2741.0 L1782.5 2741.1 L1785.5 2741.2 L1788.5 2741.4 L1791.5 2741.5 L1794.5 2741.5 L1797.5 2741.6 L1800.5 2741.7 L1803.6 2741.8 L1806.6 2741.9 L1809.6 2741.9 L1812.6 2742.0 L1815.6 2742.0 L1818.6 2742.1 L1821.6 2742.1 L1824.6 2742.1 L1827.6 2742.1 L1830.6 2742.1 L1833.6 2742.0 L1836.6 2742.0 L1839.6 2741.9 L1842.6 2741.9 L1845.7 2741.8 L1848.7 2741.7 L1851.7 2741.6 L1854.7 2741.5 L1857.7 2741.4 L1860.7 2741.3 L1863.7 2741.2 L1866.7 2741.0 L1869.7 2740.9 L1872.7 2740.8 L1875.7 2740.7 L1878.7 2740.6 L1881.7 2740.4 L1884.8 2740.3 L1887.8 2740.2 L1890.8 2740.1 L1893.8 2740.0 L1896.8 2739.9 L1899.8 2739.9 L1902.8 2739.8 L1905.8 2739.8 L1908.8 2739.7 L1911.8 2739.7 L1914.8 2739.7 L1917.8 2739.7 L1920.8 2739.7 L1923.9 2739.8 L1926.9 2739.8 L1929.9 2739.9 L1932.9 2739.9 L1935.9 2740.0 L1938.9 2740.1 L1941.9 2740.2 L1944.9 2740.3 L1947.9 2740.4 L1950.9 2740.5 L1953.9 2740.7 L1956.9 2740.8 L1959.9 2740.9 L1962.9 2741.0 L1966.0 2741.2 L1969.0 2741.3 L1972.0 2741.4 L1975.0 2741.5 L1978.0 2741.6 L1981.0 2741.7 L1984.0 2741.8 L1987.0 2741.9 L1990.0 2741.9 L1993.0 2742.0 L1996.0 2742.0 L1999.0 2742.1 L2002.0 2742.1 L2005.1 2742.1 L2008.1 2742.1 L2011.1 2742.1 L2014.1 2742.1 L2017.1 2742.1 L2020.1 2742.1 L2023.1 2742.0 L2026.1 2742.0 L2029.1 2742.0 L2032.1 2741.9 L2035.1 2741.9 L2038.1 2741.8 L2041.1 2741.8 L2044.2 2741.7 L2047.2 2741.7 L2050.2 2741.6 L2053.2 2741.6 L2056.2 2741.5 L2059.2 2741.4 L2062.2 2741.4 L2065.2 2741.3 L2068.2 2741.3 L2071.2 2741.2 L2074.2 2741.1 L2077.2 2741.1 L2080.2 2741.0 L2083.2 2741.0 L2086.3 2740.9 L2089.3 2740.9 L2092.3 2740.8 L2095.3 2740.8 L2098.3 2740.8 L2101.3 2740.7 L2104.3 2740.7 L2107.3 2740.7 L2110.3 2740.7 L2113.3 2740.7 L2116.3 2740.7 L2119.3 2740.7 L2122.3 2740.7 L2125.4 2740.7 L2128.4 2740.7 L2131.4 2740.7 L2134.4 2740.8 L2137.4 2740.8 L2140.4 2740.8 L2143.4 2740.8 L2146.4 2740.8 L2149.4 2740.9 L2152.4 2740.9 L2155.4 2740.9 L2158.4 2740.9 L2161.4 2740.9 L2164.5 2740.9 L2167.5 2740.9 L2170.5 2740.9 L2173.5 2740.9 L2176.5 2740.9 L2179.5 2740.8 L2182.5 2740.8 L2185.5 2740.7 L2188.5 2740.7 L2191.5 2740.6 L2194.5 2740.5 L2197.5 2740.4 L2200.5 2740.2 L2203.5 2740.1 L2206.6 2739.9 L2209.6 2739.8 L2212.6 2739.6 L2215.6 2739.4 L2218.6 2739.2 L2221.6 2739.0 L2224.6 2738.8 L2227.6 2738.6 L2230.6 2738.4 L2233.6 2738.2 L2236.6 2738.0 L2239.6 2737.8 L2242.6 2737.6 L2245.7 2737.5 L2248.7 2737.3 L2251.7 2737.1 L2254.7 2737.0 L2257.7 2736.8 L2260.7 2736.6 L2263.7 2736.4 L2266.7 2736.2 L2269.7 2736.1 L2272.7 2736.0 L2275.7 2735.9 L2278.7 2736.0 L2281.7 2736.1 L2284.8 2736.2 L2287.8 2736.4 L2290.8 2736.7 L2293.8 2737.0 L2296.8 2737.3 L2299.8 2737.7 L2302.8 2738.1 L2305.8 2738.5 L2308.8 2738.9 L2311.8 2739.3 L2314.8 2739.7 L2317.8 2740.1 L2320.8 2740.4 L2323.8 2740.8 L2326.9 2741.1 L2329.9 2741.3 L2332.9 2741.6 L2335.9 2741.8 L2338.9 2741.9 L2341.9 2742.0 L2344.9 2742.1 L2347.9 2742.1 L2350.9 2742.1 L2353.9 2742.0 L2356.9 2741.9 L2359.9 2741.8 L2362.9 2741.7 L2366.0 2741.5 L2369.0 2741.4 L2372.0 2741.2 L2375.0 2741.0 L2378.0 2740.8 L2381.0 2740.6 L2384.0 2740.4 L2387.0 2740.2 L2390.0 2740.0 L2393.0 2739.8 L2396.0 2739.6 L2399.0 2739.5 L2402.0 2739.3 L2405.1 2739.1 L2408.1 2739.0 L2411.1 2738.9 L2414.1 2738.8 L2417.1 2738.7 L2420.1 2738.7 L2423.1 2738.7 L2426.1 2738.7 L2429.1 2738.7 L2432.1 2738.7 L2435.1 2738.8 L2438.1 2738.9 L2441.1 2739.0 L2444.1 2739.1 L2447.2 2739.2 L2450.2 2739.4 L2453.2 2739.5 L2456.2 2739.6 L2459.2 2739.8 L2462.2 2740.0 L2465.2 2740.1 L2468.2 2740.3 L2471.2 2740.5 L2474.2 2740.6 L2477.2 2740.8 L2480.2 2740.9 L2483.2 2741.1 L2486.3 2741.3 L2489.3 2741.4 L2492.3 2741.5 L2495.3 2741.7 L2498.3 2741.8 L2501.3 2741.9 L2504.3 2742.0 L2507.3 2742.0 L2510.3 2742.1 L2513.3 2742.1 L2516.3 2742.1 L2519.3 2742.0 L2522.3 2741.9 L2525.4 2741.8 L2528.4 2741.6 L2531.4 2741.4 L2534.4 2741.2 L2537.4 2740.9 L2540.4 2740.6 L2543.4 2740.3 L2546.4 2739.9 L2549.4 2739.6 L2552.4 2739.3 L2555.4 2739.0 L2558.4 2738.8 L2561.4 2738.6 L2564.4 2738.4 L2567.5 2738.2 L2570.5 2738.1 L2573.5 2738.0 L2576.5 2738.0 L2579.5 2738.0 L2582.5 2738.0 L2585.5 2738.0 L2588.5 2738.1 L2591.5 2738.2 L2594.5 2738.2 L2597.5 2738.4 L2600.5 2738.5 L2603.5 2738.6 L2606.6 2738.8 L2609.6 2738.9 L2612.6 2739.1 L2615.6 2739.2 L2618.6 2739.4 L2621.6 2739.5 L2624.6 2739.7 L2627.6 2739.9 L2630.6 2740.1 L2633.6 2740.2 L2636.6 2740.4 L2639.6 2740.6 L2642.6 2740.8 L2645.6 2741.0 L2648.7 2741.1 L2651.7 2741.3 L2654.7 2741.5 L2657.7 2741.7 L2660.7 2741.8 L2663.7 2742.0 L2666.7 2742.1 L2669.7 2742.3 L2672.7 2742.4 L2675.7 2742.6 L2678.7 2742.7 L2681.7 2742.8 L2684.7 2742.9 L2687.8 2743.0 L2690.8 2743.1 L2693.8 2743.2 L2696.8 2743.2 L2699.8 2743.2 L2702.8 2743.2 L2705.8 2743.2 L2708.8 2743.2 L2711.8 2743.2 L2714.8 2743.1 L2717.8 2743.0 L2720.8 2743.0 L2723.8 2742.9 L2726.9 2742.8 L2729.9 2742.7 L2732.9 2742.5 L2735.9 2742.4 L2738.9 2742.3 L2741.9 2742.2 L2744.9 2742.1 L2747.9 2741.9 L2750.9 2741.8 L2753.9 2741.7 L2756.9 2741.7 L2759.9 2741.6 L2762.9 2741.5 L2765.9 2741.5 L2769.0 2741.4 L2772.0 2741.4 L2775.0 2741.4 L2778.0 2741.4 L2781.0 2741.5 L2784.0 2741.5 L2787.0 2741.5 L2790.0 2741.5 L2793.0 2741.6 L2796.0 2741.6 L2799.0 2741.7 L2802.0 2741.7 L2805.0 2741.8 L2808.1 2741.8 L2811.1 2741.9 L2814.1 2742.0 L2817.1 2742.0 L2820.1 2742.1 L2823.1 2742.2 L2826.1 2742.2 L2829.1 2742.3 L2832.1 2742.4 L2835.1 2742.4 L2838.1 2742.5 L2841.1 2742.6 L2844.1 2742.7 L2847.2 2742.7 L2850.2 2742.8 L2853.2 2742.9 L2856.2 2743.0 L2859.2 2743.0 L2862.2 2743.1 L2865.2 2743.1" fill="none" stroke="#f3ab25" stroke-width="3.2" stroke-linejoin="round" stroke-linecap="round"/>
<path d="M1662.2 2729.1 L1665.2 2725.5 L1668.2 2720.6 L1671.2 2715.4 L1674.2 2710.4 L1677.2 2705.8 L1680.2 2701.6 L1683.3 2697.9 L1686.3 2694.8 L1689.3 2692.3 L1692.3 2690.3 L1695.3 2688.8 L1698.3 2687.5 L1701.3 2686.5 L1704.3 2685.6 L1707.3 2684.9 L1710.3 2684.3 L1713.3 2683.8 L1716.3 2683.3 L1719.3 2682.9 L1722.3 2682.6 L1725.4 2682.3 L1728.4 2682.1 L1731.4 2682.2 L1734.4 2682.8 L1737.4 2683.9 L1740.4 2685.4 L1743.4 2687.0 L1746.4 2688.7 L1749.4 2690.4 L1752.4 2692.2 L1755.4 2694.0 L1758.4 2695.9 L1761.4 2697.8 L1764.5 2699.7 L1767.5 2701.5 L1770.5 2703.3 L1773.5 2705.1 L1776.5 2706.8 L1779.5 2708.5 L1782.5 2710.0 L1785.5 2711.5 L1788.5 2713.0 L1791.5 2714.5 L1794.5 2715.9 L1797.5 2717.3 L1800.5 2718.6 L1803.6 2720.0 L1806.6 2721.3 L1809.6 2722.6 L1812.6 2723.9 L1815.6 2725.1 L1818.6 2726.2 L1821.6 2727.3 L1824.6 2728.3 L1827.6 2729.1 L1830.6 2729.6 L1833.6 2729.5 L1836.6 2728.3 L1839.6 2725.9 L1842.6 2722.7 L1845.7 2719.0 L1848.7 2714.7 L1851.7 2710.3 L1854.7 2706.1 L1857.7 2702.3 L1860.7 2699.0 L1863.7 2696.4 L1866.7 2694.3 L1869.7 2692.6 L1872.7 2691.3 L1875.7 2690.2 L1878.7 2689.2 L1881.7 2688.3 L1884.8 2687.6 L1887.8 2686.9 L1890.8 2686.3 L1893.8 2685.7 L1896.8 2685.3 L1899.8 2684.8 L1902.8 2684.5 L1905.8 2684.1 L1908.8 2683.8 L1911.8 2683.6 L1914.8 2683.7 L1917.8 2684.4 L1920.8 2685.5 L1923.9 2686.9 L1926.9 2688.2 L1929.9 2689.6 L1932.9 2691.0 L1935.9 2692.5 L1938.9 2693.9 L1941.9 2695.4 L1944.9 2696.9 L1947.9 2698.5 L1950.9 2700.0 L1953.9 2701.5 L1956.9 2703.1 L1959.9 2704.6 L1962.9 2706.2 L1966.0 2707.7 L1969.0 2709.2 L1972.0 2710.8 L1975.0 2712.3 L1978.0 2713.8 L1981.0 2715.4 L1984.0 2716.9 L1987.0 2718.3 L1990.0 2719.8 L1993.0 2721.3 L1996.0 2722.7 L1999.0 2724.0 L2002.0 2725.3 L2005.1 2726.5 L2008.1 2727.4 L2011.1 2727.5 L2014.1 2725.2 L2017.1 2720.2 L2020.1 2714.8 L2023.1 2709.9 L2026.1 2705.2 L2029.1 2700.9 L2032.1 2697.3 L2035.1 2694.4 L2038.1 2692.3 L2041.1 2690.8 L2044.2 2689.8 L2047.2 2689.1 L2050.2 2688.7 L2053.2 2688.4 L2056.2 2688.2 L2059.2 2688.1 L2062.2 2687.9 L2065.2 2687.7 L2068.2 2687.4 L2071.2 2687.0 L2074.2 2686.6 L2077.2 2686.2 L2080.2 2685.8 L2083.2 2685.4 L2086.3 2685.0 L2089.3 2684.7 L2092.3 2684.4 L2095.3 2684.2 L2098.3 2684.0 L2101.3 2684.0 L2104.3 2684.0 L2107.3 2684.2 L2110.3 2684.7 L2113.3 2685.6 L2116.3 2686.9 L2119.3 2688.5 L2122.3 2690.3 L2125.4 2692.2 L2128.4 2694.3 L2131.4 2696.4 L2134.4 2698.6 L2137.4 2700.8 L2140.4 2703.1 L2143.4 2705.3 L2146.4 2707.4 L2149.4 2709.6 L2152.4 2711.6 L2155.4 2713.5 L2158.4 2715.3 L2161.4 2717.0 L2164.5 2718.6 L2167.5 2720.0 L2170.5 2721.1 L2173.5 2721.8 L2176.5 2722.0 L2179.5 2721.6 L2182.5 2720.7 L2185.5 2719.2 L2188.5 2717.3 L2191.5 2715.1 L2194.5 2712.6 L2197.5 2709.7 L2200.5 2706.5 L2203.5 2703.0 L2206.6 2699.7 L2209.6 2696.8 L2212.6 2694.3 L2215.6 2692.4 L2218.6 2691.0 L2221.6 2689.9 L2224.6 2689.0 L2227.6 2688.4 L2230.6 2687.8 L2233.6 2687.3 L2236.6 2686.8 L2239.6 2686.2 L2242.6 2685.6 L2245.7 2684.8 L2248.7 2684.1 L2251.7 2683.2 L2254.7 2682.4 L2257.7 2681.6 L2260.7 2680.9 L2263.7 2680.3 L2266.7 2679.8 L2269.7 2679.6 L2272.7 2679.6 L2275.7 2679.9 L2278.7 2680.6 L2281.7 2681.9 L2284.8 2683.5 L2287.8 2685.3 L2290.8 2687.4 L2293.8 2689.5 L2296.8 2691.8 L2299.8 2694.2 L2302.8 2696.6 L2305.8 2699.1 L2308.8 2701.5 L2311.8 2704.0 L2314.8 2706.3 L2317.8 2708.6 L2320.8 2710.8 L2323.8 2713.0 L2326.9 2715.2 L2329.9 2717.3 L2332.9 2719.3 L2335.9 2721.1 L2338.9 2722.5 L2341.9 2723.5 L2344.9 2723.6 L2347.9 2722.5 L2350.9 2720.4 L2353.9 2717.5 L2356.9 2714.4 L2359.9 2711.0 L2362.9 2707.5 L2366.0 2703.9 L2369.0 2700.5 L2372.0 2697.5 L2375.0 2695.1 L2378.0 2693.2 L2381.0 2691.9 L2384.0 2691.1 L2387.0 2690.6 L2390.0 2690.2 L2393.0 2689.7 L2396.0 2689.2 L2399.0 2688.5 L2402.0 2687.9 L2405.1 2687.2 L2408.1 2686.6 L2411.1 2685.9 L2414.1 2685.2 L2417.1 2684.6 L2420.1 2684.0 L2423.1 2683.3 L2426.1 2682.8 L2429.1 2682.2 L2432.1 2681.7 L2435.1 2681.2 L2438.1 2680.8 L2441.1 2680.5 L2444.1 2680.4 L2447.2 2680.4 L2450.2 2680.9 L2453.2 2682.1 L2456.2 2683.8 L2459.2 2685.7 L2462.2 2687.8 L2465.2 2690.1 L2468.2 2692.5 L2471.2 2694.9 L2474.2 2697.4 L2477.2 2700.0 L2480.2 2702.5 L2483.2 2705.0 L2486.3 2707.5 L2489.3 2709.9 L2492.3 2712.2 L2495.3 2714.5 L2498.3 2716.7 L2501.3 2718.9 L2504.3 2721.1 L2507.3 2723.1 L2510.3 2725.1 L2513.3 2726.7 L2516.3 2728.0 L2519.3 2728.9 L2522.3 2729.2 L2525.4 2729.0 L2528.4 2727.6 L2531.4 2724.5 L2534.4 2719.2 L2537.4 2712.0 L2540.4 2702.9 L2543.4 2692.6 L2546.4 2681.5 L2549.4 2670.2 L2552.4 2659.0 L2555.4 2648.5 L2558.4 2638.4 L2561.4 2628.5 L2564.4 2618.9 L2567.5 2609.7 L2570.5 2601.3 L2573.5 2593.8 L2576.5 2587.3 L2579.5 2581.8 L2582.5 2577.0 L2585.5 2572.8 L2588.5 2569.2 L2591.5 2565.9 L2594.5 2563.0 L2597.5 2560.5 L2600.5 2558.2 L2603.5 2556.3 L2606.6 2554.7 L2609.6 2553.6 L2612.6 2552.9 L2615.6 2552.6 L2618.6 2552.7 L2621.6 2552.9 L2624.6 2553.3 L2627.6 2553.6 L2630.6 2553.8 L2633.6 2553.8 L2636.6 2553.8 L2639.6 2553.7 L2642.6 2553.6 L2645.6 2553.5 L2648.7 2553.4 L2651.7 2553.3 L2654.7 2553.2 L2657.7 2553.2 L2660.7 2553.1 L2663.7 2553.1 L2666.7 2553.2 L2669.7 2553.3 L2672.7 2553.5 L2675.7 2553.8 L2678.7 2554.1 L2681.7 2554.5 L2684.7 2554.9 L2687.8 2555.2 L2690.8 2555.5 L2693.8 2555.8 L2696.8 2555.9 L2699.8 2555.9 L2702.8 2555.9 L2705.8 2555.8 L2708.8 2555.6 L2711.8 2555.4 L2714.8 2555.2 L2717.8 2555.0 L2720.8 2554.8 L2723.8 2554.5 L2726.9 2554.3 L2729.9 2554.0 L2732.9 2553.8 L2735.9 2553.6 L2738.9 2553.4 L2741.9 2553.3 L2744.9 2553.2 L2747.9 2553.2 L2750.9 2553.3 L2753.9 2554.0 L2756.9 2555.5 L2759.9 2557.6 L2762.9 2560.1 L2765.9 2562.8 L2769.0 2566.0 L2772.0 2569.5 L2775.0 2573.6 L2778.0 2578.3 L2781.0 2583.6 L2784.0 2589.5 L2787.0 2595.8 L2790.0 2602.5 L2793.0 2609.4 L2796.0 2616.5 L2799.0 2623.6 L2802.0 2630.7 L2805.0 2637.7 L2808.1 2644.7 L2811.1 2651.8 L2814.1 2659.1 L2817.1 2666.5 L2820.1 2674.0 L2823.1 2681.2 L2826.1 2688.1 L2829.1 2694.5 L2832.1 2700.3 L2835.1 2705.4 L2838.1 2709.7 L2841.1 2713.2 L2844.1 2716.2 L2847.2 2718.8 L2850.2 2721.2 L2853.2 2723.3 L2856.2 2725.2 L2859.2 2727.1 L2862.2 2728.9 L2865.2 2730.2" fill="none" stroke="#8c46f0" stroke-width="3.2" stroke-linejoin="round" stroke-linecap="round"/>
<path d="M1662.2 2669.4 L1665.2 2658.2 L1668.2 2643.4 L1671.2 2628.1 L1674.2 2613.5 L1677.2 2599.3 L1680.2 2585.8 L1683.3 2573.6 L1686.3 2563.6 L1689.3 2556.3 L1692.3 2551.7 L1695.3 2549.1 L1698.3 2547.5 L1701.3 2545.8 L1704.3 2543.7 L1707.3 2541.0 L1710.3 2538.0 L1713.3 2534.8 L1716.3 2531.5 L1719.3 2528.2 L1722.3 2524.9 L1725.4 2521.6 L1728.4 2518.4 L1731.4 2515.3 L1734.4 2512.3 L1737.4 2509.6 L1740.4 2507.1 L1743.4 2505.2 L1746.4 2503.8 L1749.4 2503.4 L1752.4 2504.1 L1755.4 2506.5 L1758.4 2510.3 L1761.4 2515.0 L1764.5 2520.4 L1767.5 2526.6 L1770.5 2533.6 L1773.5 2541.1 L1776.5 2548.7 L1779.5 2556.3 L1782.5 2563.9 L1785.5 2571.6 L1788.5 2579.4 L1791.5 2587.5 L1794.5 2595.6 L1797.5 2603.8 L1800.5 2611.9 L1803.6 2620.0 L1806.6 2627.9 L1809.6 2635.7 L1812.6 2643.3 L1815.6 2650.5 L1818.6 2657.1 L1821.6 2663.0 L1824.6 2667.5 L1827.6 2669.6 L1830.6 2667.5 L1833.6 2659.7 L1836.6 2647.4 L1839.6 2633.5 L1842.6 2618.3 L1845.7 2602.0 L1848.7 2585.5 L1851.7 2570.6 L1854.7 2558.5 L1857.7 2550.0 L1860.7 2545.2 L1863.7 2543.1 L1866.7 2542.1 L1869.7 2540.9 L1872.7 2539.3 L1875.7 2537.3 L1878.7 2535.1 L1881.7 2532.8 L1884.8 2530.5 L1887.8 2528.3 L1890.8 2526.0 L1893.8 2523.8 L1896.8 2521.6 L1899.8 2519.4 L1902.8 2517.3 L1905.8 2515.2 L1908.8 2513.2 L1911.8 2511.4 L1914.8 2509.6 L1917.8 2508.0 L1920.8 2506.7 L1923.9 2505.8 L1926.9 2505.4 L1929.9 2506.1 L1932.9 2508.5 L1935.9 2512.6 L1938.9 2517.8 L1941.9 2523.6 L1944.9 2530.1 L1947.9 2537.3 L1950.9 2544.8 L1953.9 2552.6 L1956.9 2560.4 L1959.9 2568.1 L1962.9 2575.8 L1966.0 2583.4 L1969.0 2591.3 L1972.0 2599.3 L1975.0 2607.4 L1978.0 2615.6 L1981.0 2623.7 L1984.0 2631.7 L1987.0 2639.5 L1990.0 2647.0 L1993.0 2654.2 L1996.0 2660.8 L1999.0 2666.4 L2002.0 2670.4 L2005.1 2671.5 L2008.1 2668.0 L2011.1 2658.8 L2014.1 2645.9 L2017.1 2632.4 L2020.1 2618.7 L2023.1 2604.5 L2026.1 2590.2 L2029.1 2576.9 L2032.1 2565.7 L2035.1 2557.2 L2038.1 2551.4 L2041.1 2547.7 L2044.2 2545.1 L2047.2 2542.6 L2050.2 2539.7 L2053.2 2536.4 L2056.2 2532.7 L2059.2 2529.0 L2062.2 2525.2 L2065.2 2521.5 L2068.2 2517.9 L2071.2 2514.5 L2074.2 2511.3 L2077.2 2508.4 L2080.2 2506.0 L2083.2 2504.3 L2086.3 2503.3 L2089.3 2503.5 L2092.3 2505.2 L2095.3 2508.4 L2098.3 2513.0 L2101.3 2518.5 L2104.3 2525.0 L2107.3 2532.3 L2110.3 2540.2 L2113.3 2548.4 L2116.3 2556.7 L2119.3 2565.0 L2122.3 2573.1 L2125.4 2581.2 L2128.4 2589.5 L2131.4 2598.0 L2134.4 2606.6 L2137.4 2615.2 L2140.4 2623.8 L2143.4 2632.2 L2146.4 2640.4 L2149.4 2648.2 L2152.4 2655.4 L2155.4 2661.6 L2158.4 2666.3 L2161.4 2668.2 L2164.5 2666.0 L2167.5 2658.6 L2170.5 2647.0 L2173.5 2633.3 L2176.5 2618.0 L2179.5 2601.6 L2182.5 2586.0 L2185.5 2573.3 L2188.5 2564.2 L2191.5 2558.0 L2194.5 2553.6 L2197.5 2550.1 L2200.5 2547.0 L2203.5 2543.9 L2206.6 2540.4 L2209.6 2536.6 L2212.6 2532.5 L2215.6 2528.3 L2218.6 2524.0 L2221.6 2519.8 L2224.6 2515.6 L2227.6 2511.6 L2230.6 2507.8 L2233.6 2504.4 L2236.6 2501.5 L2239.6 2499.4 L2242.6 2498.3 L2245.7 2498.6 L2248.7 2500.3 L2251.7 2503.0 L2254.7 2506.0 L2257.7 2508.9 L2260.7 2511.6 L2263.7 2514.3 L2266.7 2517.2 L2269.7 2520.2 L2272.7 2523.4 L2275.7 2526.9 L2278.7 2530.6 L2281.7 2534.8 L2284.8 2539.4 L2287.8 2544.5 L2290.8 2550.2 L2293.8 2556.3 L2296.8 2562.8 L2299.8 2569.5 L2302.8 2576.4 L2305.8 2583.2 L2308.8 2589.9 L2311.8 2596.5 L2314.8 2603.1 L2317.8 2609.8 L2320.8 2616.6 L2323.8 2623.4 L2326.9 2630.2 L2329.9 2636.9 L2332.9 2643.3 L2335.9 2649.1 L2338.9 2654.2 L2341.9 2657.9 L2344.9 2659.2 L2347.9 2656.7 L2350.9 2649.5 L2353.9 2638.7 L2356.9 2625.8 L2359.9 2611.3 L2362.9 2595.8 L2366.0 2580.4 L2369.0 2566.5 L2372.0 2555.3 L2375.0 2548.0 L2378.0 2544.2 L2381.0 2542.3 L2384.0 2540.4 L2387.0 2537.9 L2390.0 2535.0 L2393.0 2531.8 L2396.0 2528.5 L2399.0 2525.2 L2402.0 2521.9 L2405.1 2518.8 L2408.1 2515.7 L2411.1 2512.7 L2414.1 2509.9 L2417.1 2507.4 L2420.1 2505.2 L2423.1 2503.6 L2426.1 2502.5 L2429.1 2502.1 L2432.1 2502.8 L2435.1 2504.6 L2438.1 2507.7 L2441.1 2511.9 L2444.1 2516.8 L2447.2 2522.4 L2450.2 2528.6 L2453.2 2535.5 L2456.2 2542.9 L2459.2 2550.6 L2462.2 2558.3 L2465.2 2565.9 L2468.2 2573.2 L2471.2 2580.2 L2474.2 2587.1 L2477.2 2593.9 L2480.2 2600.6 L2483.2 2607.5 L2486.3 2614.3 L2489.3 2621.0 L2492.3 2627.7 L2495.3 2634.2 L2498.3 2640.6 L2501.3 2646.7 L2504.3 2652.4 L2507.3 2657.7 L2510.3 2662.3 L2513.3 2665.8 L2516.3 2667.3 L2519.3 2665.9 L2522.3 2660.5 L2525.4 2651.7 L2528.4 2642.0 L2531.4 2632.1 L2534.4 2621.8 L2537.4 2610.8 L2540.4 2599.6 L2543.4 2588.5 L2546.4 2577.8 L2549.4 2568.1 L2552.4 2559.7 L2555.4 2553.0 L2558.4 2547.9 L2561.4 2544.3 L2564.4 2541.7 L2567.5 2539.5 L2570.5 2537.2 L2573.5 2534.4 L2576.5 2531.1 L2579.5 2527.3 L2582.5 2523.4 L2585.5 2519.4 L2588.5 2515.5 L2591.5 2511.9 L2594.5 2508.6 L2597.5 2505.9 L2600.5 2503.9 L2603.5 2502.7 L2606.6 2502.5 L2609.6 2503.4 L2612.6 2505.3 L2615.6 2508.2 L2618.6 2512.0 L2621.6 2516.5 L2624.6 2521.6 L2627.6 2527.4 L2630.6 2533.9 L2633.6 2540.8 L2636.6 2548.0 L2639.6 2555.3 L2642.6 2562.5 L2645.6 2569.5 L2648.7 2576.3 L2651.7 2582.8 L2654.7 2589.3 L2657.7 2595.9 L2660.7 2602.4 L2663.7 2609.0 L2666.7 2615.6 L2669.7 2622.1 L2672.7 2628.5 L2675.7 2634.8 L2678.7 2640.9 L2681.7 2646.8 L2684.7 2652.3 L2687.8 2657.4 L2690.8 2661.7 L2693.8 2664.9 L2696.8 2666.0 L2699.8 2663.2 L2702.8 2655.3 L2705.8 2643.1 L2708.8 2628.1 L2711.8 2610.7 L2714.8 2591.8 L2717.8 2573.5 L2720.8 2557.7 L2723.8 2545.7 L2726.9 2537.6 L2729.9 2532.8 L2732.9 2530.2 L2735.9 2528.8 L2738.9 2527.9 L2741.9 2526.7 L2744.9 2525.1 L2747.9 2523.0 L2750.9 2520.7 L2753.9 2518.4 L2756.9 2516.1 L2759.9 2513.8 L2762.9 2511.7 L2765.9 2509.7 L2769.0 2507.8 L2772.0 2506.3 L2775.0 2505.0 L2778.0 2504.3 L2781.0 2504.0 L2784.0 2504.6 L2787.0 2506.5 L2790.0 2509.7 L2793.0 2514.0 L2796.0 2519.1 L2799.0 2524.8 L2802.0 2530.9 L2805.0 2537.4 L2808.1 2544.2 L2811.1 2551.3 L2814.1 2558.5 L2817.1 2566.0 L2820.1 2573.8 L2823.1 2582.2 L2826.1 2591.3 L2829.1 2601.2 L2832.1 2611.7 L2835.1 2621.9 L2838.1 2631.4 L2841.1 2639.6 L2844.1 2646.4 L2847.2 2651.8 L2850.2 2656.3 L2853.2 2660.2 L2856.2 2663.7 L2859.2 2667.0 L2862.2 2670.0 L2865.2 2672.3" fill="none" stroke="#17a57a" stroke-width="3.2" stroke-linejoin="round" stroke-linecap="round"/>
<rect x="147" y="2864" width="1387" height="600" rx="22" fill="#222933"/>
<text x="184.0" y="2931.0" font-size="27" fill="#f4f5f7" font-weight="700" textLength="222" lengthAdjust="spacingAndGlyphs">Requests by Path</text>
<path d="M1371 2910 H1385 M1372 2910 L1370.5 2923.5 M1384 2910 L1385.5 2923.5 M1369 2923.5 H1387 M1378 2923.5 V2929.5" stroke="#9ba3ad" stroke-width="2" fill="none" stroke-linecap="round"/>
<g stroke="#9ba3ad" stroke-width="2" fill="none" stroke-linecap="round" stroke-linejoin="round"><path d="M1424.2 2916.2 V2911.2 H1429.2 M1424.2 2911.2 L1429.5 2916.5"/><path d="M1439.8 2916.2 V2911.2 H1434.8 M1439.8 2911.2 L1434.5 2916.5"/><path d="M1424.2 2921.8 V2926.8 H1429.2 M1424.2 2926.8 L1429.5 2921.5"/><path d="M1439.8 2921.8 V2926.8 H1434.8 M1439.8 2926.8 L1434.5 2921.5"/></g>
<circle cx="1486" cy="2911.5" r="1.6" fill="#9ba3ad"/>
<circle cx="1486" cy="2918" r="1.6" fill="#9ba3ad"/>
<circle cx="1486" cy="2924.5" r="1.6" fill="#9ba3ad"/>
<circle cx="200.7" cy="2998.3" r="5" fill="#10b981"/>
<text x="219.2" y="3004.2" font-size="32" fill="#f4f5f7" font-weight="700" textLength="87" lengthAdjust="spacingAndGlyphs">2.23B</text>
<text x="219.2" y="3040.8" font-size="19" fill="#9ca3ab" textLength="97.4" lengthAdjust="spacingAndGlyphs">/v1/onboard</text>
<circle cx="533" cy="2998.3" r="5" fill="#8c46f0"/>
<text x="551.5" y="3004.2" font-size="32" fill="#f4f5f7" font-weight="700" textLength="126" lengthAdjust="spacingAndGlyphs">965.17M</text>
<text x="551.5" y="3040.8" font-size="19" fill="#9ca3ab" textLength="105" lengthAdjust="spacingAndGlyphs">/v1/checkout</text>
<circle cx="864" cy="2998.3" r="5" fill="#f3ab25"/>
<text x="882.5" y="3004.2" font-size="32" fill="#f4f5f7" font-weight="700" textLength="130" lengthAdjust="spacingAndGlyphs">500.78M</text>
<text x="882.5" y="3040.8" font-size="19" fill="#9ca3ab" textLength="106" lengthAdjust="spacingAndGlyphs">/v1/users/list</text>
<circle cx="1196" cy="2998.3" r="5" fill="#1db5d6"/>
<text x="1214.5" y="3004.2" font-size="32" fill="#f4f5f7" font-weight="700" textLength="113.5" lengthAdjust="spacingAndGlyphs">393.9M</text>
<text x="1214.5" y="3040.8" font-size="19" fill="#9ca3ab" textLength="87" lengthAdjust="spacingAndGlyphs">/v1/picture</text>
<text x="222.0" y="3124.0" font-size="19" fill="#9aa1ab" text-anchor="end">30M</text>
<text x="222.0" y="3165.7" font-size="19" fill="#9aa1ab" text-anchor="end">25M</text>
<text x="222.0" y="3207.3" font-size="19" fill="#9aa1ab" text-anchor="end">20M</text>
<text x="222.0" y="3249.0" font-size="19" fill="#9aa1ab" text-anchor="end">15M</text>
<text x="222.0" y="3290.7" font-size="19" fill="#9aa1ab" text-anchor="end">10M</text>
<text x="222.0" y="3332.3" font-size="19" fill="#9aa1ab" text-anchor="end">5M</text>
<text x="222.0" y="3374.0" font-size="19" fill="#9aa1ab" text-anchor="end">0</text>
<path d="M244 3119.0 H1453" stroke="#2c333d" stroke-width="1.5"/>
<path d="M244 3160.3 H1453" stroke="#2c333d" stroke-width="1.5"/>
<path d="M244 3201.8 H1453" stroke="#2c333d" stroke-width="1.5"/>
<path d="M244 3243.0 H1453" stroke="#2c333d" stroke-width="1.5"/>
<path d="M244 3284.0 H1453" stroke="#2c333d" stroke-width="1.5"/>
<path d="M244 3325.0 H1453" stroke="#2c333d" stroke-width="1.5"/>
<path d="M244 3367.7 H1453" stroke="#4a515b" stroke-width="2" stroke-dasharray="2 18"/>
<text x="296.5" y="3400.0" font-size="18.5" fill="#9aa1ab" textLength="110" lengthAdjust="spacingAndGlyphs">03 Sep 00:00</text>
<text x="642.0" y="3400.0" font-size="18.5" fill="#9aa1ab" textLength="110" lengthAdjust="spacingAndGlyphs">05 Sep 00:00</text>
<text x="988.5" y="3400.0" font-size="18.5" fill="#9aa1ab" textLength="110" lengthAdjust="spacingAndGlyphs">07 Sep 00:00</text>
<text x="1334.0" y="3400.0" font-size="18.5" fill="#9aa1ab" textLength="110" lengthAdjust="spacingAndGlyphs">09 Sep 00:00</text>
<path d="M243.7 3349.8 L246.7 3348.9 L249.7 3347.6 L252.7 3346.3 L255.7 3345.0 L258.7 3343.7 L261.7 3342.5 L264.7 3341.3 L267.7 3340.1 L270.7 3339.0 L273.7 3338.0 L276.7 3337.1 L279.7 3336.1 L282.7 3335.2 L285.7 3334.3 L288.7 3333.4 L291.7 3332.5 L294.7 3331.6 L297.7 3330.7 L300.7 3329.9 L303.8 3329.2 L306.8 3328.5 L309.8 3327.8 L312.8 3327.2 L315.8 3326.7 L318.8 3326.4 L321.8 3326.1 L324.8 3326.0 L327.8 3326.0 L330.8 3326.2 L333.8 3326.6 L336.8 3327.2 L339.8 3327.9 L342.8 3328.7 L345.8 3329.7 L348.8 3330.7 L351.8 3331.7 L354.8 3332.8 L357.8 3333.9 L360.8 3334.9 L363.8 3335.9 L366.8 3336.8 L369.8 3337.7 L372.8 3338.6 L375.8 3339.6 L378.8 3340.5 L381.8 3341.5 L384.8 3342.5 L387.8 3343.5 L390.8 3344.5 L393.8 3345.4 L396.8 3346.4 L399.8 3347.3 L402.8 3348.1 L405.8 3348.9 L408.8 3349.6 L411.8 3350.2 L414.8 3350.7 L417.8 3350.9 L420.8 3351.0 L423.8 3350.7 L426.8 3350.2 L429.8 3349.3 L432.8 3348.2 L435.8 3347.0 L438.8 3345.8 L441.8 3344.8 L444.8 3343.8 L447.8 3342.8 L450.8 3341.8 L453.8 3340.7 L456.8 3339.6 L459.8 3338.5 L462.8 3337.4 L465.8 3336.3 L468.9 3335.3 L471.9 3334.3 L474.9 3333.3 L477.9 3332.5 L480.9 3331.7 L483.9 3331.0 L486.9 3330.5 L489.9 3330.1 L492.9 3330.0 L495.9 3330.0 L498.9 3330.3 L501.9 3330.7 L504.9 3331.3 L507.9 3332.1 L510.9 3332.9 L513.9 3333.9 L516.9 3334.8 L519.9 3335.7 L522.9 3336.6 L525.9 3337.5 L528.9 3338.4 L531.9 3339.4 L534.9 3340.4 L537.9 3341.5 L540.9 3342.5 L543.9 3343.6 L546.9 3344.7 L549.9 3345.8 L552.9 3346.8 L555.9 3347.8 L558.9 3348.8 L561.9 3349.7 L564.9 3350.5 L567.9 3351.2 L570.9 3351.8 L573.9 3352.3 L576.9 3352.6 L579.9 3352.8 L582.9 3352.8 L585.9 3352.6 L588.9 3352.4 L591.9 3352.0 L594.9 3351.7 L597.9 3351.3 L600.9 3351.0 L603.9 3350.6 L606.9 3350.2 L609.9 3349.7 L612.9 3349.3 L615.9 3348.8 L618.9 3348.3 L621.9 3347.8 L624.9 3347.3 L627.9 3346.8 L631.0 3346.3 L634.0 3345.8 L637.0 3345.2 L640.0 3344.7 L643.0 3344.2 L646.0 3343.8 L649.0 3343.3 L652.0 3342.8 L655.0 3342.4 L658.0 3341.9 L661.0 3341.5 L664.0 3341.2 L667.0 3340.9 L670.0 3340.6 L673.0 3340.4 L676.0 3340.3 L679.0 3340.3 L682.0 3340.4 L685.0 3340.6 L688.0 3340.9 L691.0 3341.4 L694.0 3342.0 L697.0 3342.5 L700.0 3343.1 L703.0 3343.6 L706.0 3344.1 L709.0 3344.5 L712.0 3345.1 L715.0 3345.6 L718.0 3346.1 L721.0 3346.7 L724.0 3347.3 L727.0 3347.9 L730.0 3348.5 L733.0 3349.1 L736.0 3349.6 L739.0 3350.2 L742.0 3350.7 L745.0 3351.3 L748.0 3351.8 L751.0 3352.2 L754.0 3352.6 L757.0 3353.0 L760.0 3353.3 L763.0 3353.6 L766.0 3353.7 L769.0 3353.8 L772.0 3353.8 L775.0 3353.7 L778.0 3353.5 L781.0 3353.2 L784.0 3352.9 L787.0 3352.5 L790.0 3352.1 L793.1 3351.6 L796.1 3351.1 L799.1 3350.7 L802.1 3350.2 L805.1 3349.8 L808.1 3349.5 L811.1 3349.2 L814.1 3348.9 L817.1 3348.6 L820.1 3348.4 L823.1 3348.2 L826.1 3348.0 L829.1 3347.8 L832.1 3347.7 L835.1 3347.6 L838.1 3347.5 L841.1 3347.5 L844.1 3347.4 L847.1 3347.4 L850.1 3347.4 L853.1 3347.4 L856.1 3347.5 L859.1 3347.5 L862.1 3347.5 L865.1 3347.6 L868.1 3347.7 L871.1 3347.8 L874.1 3347.9 L877.1 3348.0 L880.1 3348.1 L883.1 3348.3 L886.1 3348.5 L889.1 3348.7 L892.1 3349.0 L895.1 3349.2 L898.1 3349.6 L901.1 3349.9 L904.1 3350.2 L907.1 3350.5 L910.1 3350.8 L913.1 3351.0 L916.1 3351.2 L919.1 3351.4 L922.1 3351.5 L925.1 3351.6 L928.1 3351.7 L931.1 3351.7 L934.1 3351.6 L937.1 3351.5 L940.1 3351.4 L943.1 3351.2 L946.1 3351.0 L949.1 3350.7 L952.1 3350.5 L955.1 3350.2 L958.2 3349.9 L961.2 3349.6 L964.2 3349.3 L967.2 3349.0 L970.2 3348.7 L973.2 3348.3 L976.2 3348.0 L979.2 3347.7 L982.2 3347.4 L985.2 3347.1 L988.2 3346.7 L991.2 3346.5 L994.2 3346.2 L997.2 3345.9 L1000.2 3345.7 L1003.2 3345.5 L1006.2 3345.3 L1009.2 3345.1 L1012.2 3345.0 L1015.2 3345.0 L1018.2 3344.9 L1021.2 3345.0 L1024.2 3345.0 L1027.2 3345.1 L1030.2 3345.2 L1033.2 3345.4 L1036.2 3345.6 L1039.2 3345.8 L1042.2 3346.0 L1045.2 3346.2 L1048.2 3346.5 L1051.2 3346.7 L1054.2 3346.9 L1057.2 3347.1 L1060.2 3347.3 L1063.2 3347.5 L1066.2 3347.7 L1069.2 3347.9 L1072.2 3348.1 L1075.2 3348.3 L1078.2 3348.6 L1081.2 3348.9 L1084.2 3349.1 L1087.2 3349.3 L1090.2 3349.5 L1093.2 3349.6 L1096.2 3349.7 L1099.2 3349.7 L1102.2 3349.7 L1105.2 3349.6 L1108.2 3349.4 L1111.2 3349.2 L1114.2 3348.9 L1117.2 3348.6 L1120.3 3348.2 L1123.3 3347.8 L1126.3 3347.3 L1129.3 3346.9 L1132.3 3346.3 L1135.3 3345.8 L1138.3 3345.3 L1141.3 3344.7 L1144.3 3344.2 L1147.3 3343.6 L1150.3 3343.1 L1153.3 3342.5 L1156.3 3341.9 L1159.3 3341.4 L1162.3 3340.8 L1165.3 3340.3 L1168.3 3339.8 L1171.3 3339.3 L1174.3 3338.8 L1177.3 3338.3 L1180.3 3337.9 L1183.3 3337.6 L1186.3 3337.3 L1189.3 3337.0 L1192.3 3336.9 L1195.3 3336.9 L1198.3 3337.1 L1201.3 3337.4 L1204.3 3337.9 L1207.3 3338.6 L1210.3 3339.4 L1213.3 3340.2 L1216.3 3341.0 L1219.3 3341.6 L1222.3 3342.1 L1225.3 3342.5 L1228.3 3342.9 L1231.3 3343.2 L1234.3 3343.6 L1237.3 3344.0 L1240.3 3344.4 L1243.3 3344.8 L1246.3 3345.1 L1249.3 3345.5 L1252.3 3345.9 L1255.3 3346.2 L1258.3 3346.5 L1261.3 3346.9 L1264.3 3347.2 L1267.3 3347.4 L1270.3 3347.7 L1273.3 3347.9 L1276.3 3348.0 L1279.3 3348.1 L1282.3 3348.1 L1285.4 3348.0 L1288.4 3347.8 L1291.4 3347.4 L1294.4 3346.8 L1297.4 3345.9 L1300.4 3344.8 L1303.4 3343.5 L1306.4 3342.2 L1309.4 3341.0 L1312.4 3339.7 L1315.4 3338.3 L1318.4 3336.9 L1321.4 3335.4 L1324.4 3333.8 L1327.4 3332.2 L1330.4 3330.7 L1333.4 3329.1 L1336.4 3327.5 L1339.4 3326.0 L1342.4 3324.5 L1345.4 3323.1 L1348.4 3321.7 L1351.4 3320.4 L1354.4 3319.3 L1357.4 3318.3 L1360.4 3317.5 L1363.4 3316.9 L1366.4 3316.6 L1369.4 3316.5 L1372.4 3316.8 L1375.4 3317.4 L1378.4 3318.4 L1381.4 3319.5 L1384.4 3320.8 L1387.4 3322.2 L1390.4 3323.6 L1393.4 3324.9 L1396.4 3326.1 L1399.4 3327.2 L1402.4 3328.3 L1405.4 3329.4 L1408.4 3330.5 L1411.4 3331.7 L1414.4 3332.9 L1417.4 3334.0 L1420.4 3335.2 L1423.4 3336.4 L1426.4 3337.6 L1429.4 3338.8 L1432.4 3340.0 L1435.4 3341.3 L1438.4 3342.5 L1441.4 3343.7 L1444.4 3344.9 L1447.5 3346.1 L1450.5 3347.2 L1453.5 3348.1" fill="none" stroke="#1db5d6" stroke-width="3.2" stroke-linejoin="round" stroke-linecap="round"/>
<path d="M243.7 3353.1 L246.7 3351.9 L249.7 3350.2 L252.7 3348.4 L255.7 3346.4 L258.7 3344.1 L261.7 3341.4 L264.7 3338.2 L267.7 3334.5 L270.7 3330.4 L273.7 3326.2 L276.7 3322.0 L279.7 3317.9 L282.7 3314.2 L285.7 3310.9 L288.7 3308.1 L291.7 3305.7 L294.7 3303.6 L297.7 3301.9 L300.7 3300.4 L303.8 3299.3 L306.8 3298.5 L309.8 3298.0 L312.8 3297.7 L315.8 3297.8 L318.8 3298.1 L321.8 3298.7 L324.8 3299.4 L327.8 3300.4 L330.8 3301.6 L333.8 3302.9 L336.8 3304.3 L339.8 3305.9 L342.8 3307.6 L345.8 3309.5 L348.8 3311.6 L351.8 3313.9 L354.8 3316.2 L357.8 3318.5 L360.8 3320.8 L363.8 3323.0 L366.8 3325.1 L369.8 3327.1 L372.8 3329.0 L375.8 3330.8 L378.8 3332.5 L381.8 3334.3 L384.8 3336.0 L387.8 3337.6 L390.8 3339.3 L393.8 3340.9 L396.8 3342.5 L399.8 3344.1 L402.8 3345.6 L405.8 3347.0 L408.8 3348.4 L411.8 3349.8 L414.8 3351.0 L417.8 3352.1 L420.8 3353.0 L423.8 3353.7 L426.8 3353.9 L429.8 3353.7 L432.8 3352.7 L435.8 3350.9 L438.8 3348.5 L441.8 3345.9 L444.8 3343.4 L447.8 3340.8 L450.8 3338.1 L453.8 3335.2 L456.8 3332.2 L459.8 3329.2 L462.8 3326.2 L465.8 3323.3 L468.9 3320.6 L471.9 3318.1 L474.9 3315.9 L477.9 3314.1 L480.9 3312.6 L483.9 3311.6 L486.9 3311.1 L489.9 3311.0 L492.9 3311.2 L495.9 3311.6 L498.9 3312.2 L501.9 3313.0 L504.9 3314.0 L507.9 3315.2 L510.9 3316.5 L513.9 3318.0 L516.9 3319.6 L519.9 3321.4 L522.9 3323.4 L525.9 3325.4 L528.9 3327.5 L531.9 3329.6 L534.9 3331.7 L537.9 3333.8 L540.9 3335.8 L543.9 3337.7 L546.9 3339.4 L549.9 3341.1 L552.9 3342.6 L555.9 3344.1 L558.9 3345.6 L561.9 3347.0 L564.9 3348.3 L567.9 3349.5 L570.9 3350.7 L573.9 3351.8 L576.9 3352.8 L579.9 3353.6 L582.9 3354.2 L585.9 3354.6 L588.9 3354.8 L591.9 3354.5 L594.9 3353.9 L597.9 3352.7 L600.9 3351.2 L603.9 3349.4 L606.9 3347.4 L609.9 3345.2 L612.9 3342.7 L615.9 3340.1 L618.9 3337.4 L621.9 3334.7 L624.9 3332.0 L627.9 3329.4 L631.0 3326.9 L634.0 3324.6 L637.0 3322.4 L640.0 3320.3 L643.0 3318.3 L646.0 3316.3 L649.0 3314.5 L652.0 3312.7 L655.0 3311.0 L658.0 3309.4 L661.0 3308.0 L664.0 3306.8 L667.0 3305.9 L670.0 3305.2 L673.0 3304.8 L676.0 3304.8 L679.0 3305.4 L682.0 3306.4 L685.0 3307.7 L688.0 3309.2 L691.0 3310.9 L694.0 3312.8 L697.0 3314.9 L700.0 3317.1 L703.0 3319.4 L706.0 3321.7 L709.0 3324.0 L712.0 3326.2 L715.0 3328.3 L718.0 3330.4 L721.0 3332.3 L724.0 3334.1 L727.0 3335.9 L730.0 3337.6 L733.0 3339.4 L736.0 3341.2 L739.0 3342.8 L742.0 3344.4 L745.0 3345.9 L748.0 3347.2 L751.0 3348.3 L754.0 3349.2 L757.0 3349.8 L760.0 3350.0 L763.0 3349.7 L766.0 3349.0 L769.0 3347.7 L772.0 3346.0 L775.0 3343.9 L778.0 3341.5 L781.0 3338.9 L784.0 3336.4 L787.0 3334.0 L790.0 3331.8 L793.1 3329.9 L796.1 3328.1 L799.1 3326.2 L802.1 3324.4 L805.1 3322.5 L808.1 3320.7 L811.1 3319.1 L814.1 3317.5 L817.1 3316.2 L820.1 3315.1 L823.1 3314.2 L826.1 3313.7 L829.1 3313.4 L832.1 3313.3 L835.1 3313.5 L838.1 3313.8 L841.1 3314.3 L844.1 3315.0 L847.1 3315.7 L850.1 3316.6 L853.1 3317.5 L856.1 3318.6 L859.1 3319.6 L862.1 3320.8 L865.1 3322.0 L868.1 3323.2 L871.1 3324.6 L874.1 3326.2 L877.1 3327.9 L880.1 3329.7 L883.1 3331.7 L886.1 3333.7 L889.1 3335.7 L892.1 3337.7 L895.1 3339.7 L898.1 3341.4 L901.1 3343.1 L904.1 3344.6 L907.1 3346.0 L910.1 3347.3 L913.1 3348.5 L916.1 3349.6 L919.1 3350.6 L922.1 3351.5 L925.1 3352.1 L928.1 3352.5 L931.1 3352.5 L934.1 3352.3 L937.1 3351.7 L940.1 3350.7 L943.1 3349.5 L946.1 3347.9 L949.1 3346.2 L952.1 3344.4 L955.1 3342.5 L958.2 3340.7 L961.2 3338.8 L964.2 3336.8 L967.2 3334.6 L970.2 3332.4 L973.2 3330.2 L976.2 3328.0 L979.2 3325.9 L982.2 3323.9 L985.2 3322.1 L988.2 3320.4 L991.2 3318.9 L994.2 3317.4 L997.2 3316.0 L1000.2 3314.7 L1003.2 3313.6 L1006.2 3312.7 L1009.2 3312.1 L1012.2 3311.8 L1015.2 3311.8 L1018.2 3312.2 L1021.2 3312.9 L1024.2 3313.8 L1027.2 3315.0 L1030.2 3316.4 L1033.2 3318.0 L1036.2 3319.7 L1039.2 3321.4 L1042.2 3323.2 L1045.2 3325.0 L1048.2 3327.0 L1051.2 3329.1 L1054.2 3331.3 L1057.2 3333.5 L1060.2 3335.8 L1063.2 3338.1 L1066.2 3340.3 L1069.2 3342.4 L1072.2 3344.4 L1075.2 3346.3 L1078.2 3348.1 L1081.2 3349.8 L1084.2 3351.5 L1087.2 3353.0 L1090.2 3354.5 L1093.2 3355.7 L1096.2 3356.7 L1099.2 3357.4 L1102.2 3357.7 L1105.2 3357.7 L1108.2 3357.2 L1111.2 3356.3 L1114.2 3355.1 L1117.2 3353.6 L1120.3 3351.9 L1123.3 3350.0 L1126.3 3348.1 L1129.3 3346.2 L1132.3 3344.3 L1135.3 3342.4 L1138.3 3340.3 L1141.3 3338.2 L1144.3 3336.0 L1147.3 3333.7 L1150.3 3331.5 L1153.3 3329.4 L1156.3 3327.5 L1159.3 3325.7 L1162.3 3324.1 L1165.3 3322.6 L1168.3 3321.1 L1171.3 3319.8 L1174.3 3318.6 L1177.3 3317.6 L1180.3 3316.8 L1183.3 3316.1 L1186.3 3315.7 L1189.3 3315.5 L1192.3 3315.6 L1195.3 3315.9 L1198.3 3316.5 L1201.3 3317.2 L1204.3 3318.2 L1207.3 3319.2 L1210.3 3320.4 L1213.3 3321.7 L1216.3 3323.1 L1219.3 3324.6 L1222.3 3326.2 L1225.3 3328.0 L1228.3 3329.8 L1231.3 3331.7 L1234.3 3333.6 L1237.3 3335.6 L1240.3 3337.5 L1243.3 3339.4 L1246.3 3341.2 L1249.3 3342.9 L1252.3 3344.5 L1255.3 3346.1 L1258.3 3347.8 L1261.3 3349.4 L1264.3 3350.9 L1267.3 3352.4 L1270.3 3353.8 L1273.3 3355.0 L1276.3 3355.9 L1279.3 3356.6 L1282.3 3357.0 L1285.4 3357.1 L1288.4 3356.8 L1291.4 3356.2 L1294.4 3355.3 L1297.4 3354.2 L1300.4 3352.8 L1303.4 3351.3 L1306.4 3349.7 L1309.4 3348.1 L1312.4 3346.3 L1315.4 3344.3 L1318.4 3342.1 L1321.4 3339.7 L1324.4 3337.2 L1327.4 3334.7 L1330.4 3332.3 L1333.4 3330.0 L1336.4 3328.0 L1339.4 3326.1 L1342.4 3324.3 L1345.4 3322.6 L1348.4 3321.1 L1351.4 3319.8 L1354.4 3318.9 L1357.4 3318.2 L1360.4 3318.0 L1363.4 3318.1 L1366.4 3318.4 L1369.4 3319.0 L1372.4 3319.8 L1375.4 3320.8 L1378.4 3321.9 L1381.4 3323.0 L1384.4 3324.3 L1387.4 3325.5 L1390.4 3326.8 L1393.4 3328.2 L1396.4 3329.5 L1399.4 3330.9 L1402.4 3332.3 L1405.4 3333.8 L1408.4 3335.4 L1411.4 3337.0 L1414.4 3338.7 L1417.4 3340.3 L1420.4 3342.0 L1423.4 3343.6 L1426.4 3345.2 L1429.4 3346.7 L1432.4 3348.0 L1435.4 3349.2 L1438.4 3350.3 L1441.4 3351.1 L1444.4 3351.9 L1447.5 3352.5 L1450.5 3353.1 L1453.5 3353.5" fill="none" stroke="#f3ab25" stroke-width="3.2" stroke-linejoin="round" stroke-linecap="round"/>
<path d="M243.7 3340.2 L246.7 3339.8 L249.7 3339.1 L252.7 3338.3 L255.7 3337.3 L258.7 3335.9 L261.7 3334.1 L264.7 3331.9 L267.7 3329.4 L270.7 3326.7 L273.7 3323.8 L276.7 3320.8 L279.7 3317.7 L282.7 3314.5 L285.7 3311.2 L288.7 3307.9 L291.7 3304.4 L294.7 3300.7 L297.7 3296.9 L300.7 3292.9 L303.8 3288.9 L306.8 3284.8 L309.8 3280.9 L312.8 3277.2 L315.8 3273.9 L318.8 3270.9 L321.8 3268.2 L324.8 3265.8 L327.8 3263.7 L330.8 3261.9 L333.8 3260.5 L336.8 3259.5 L339.8 3258.9 L342.8 3258.8 L345.8 3259.3 L348.8 3260.2 L351.8 3261.6 L354.8 3263.4 L357.8 3265.6 L360.8 3268.1 L363.8 3270.8 L366.8 3273.8 L369.8 3276.9 L372.8 3280.3 L375.8 3283.9 L378.8 3287.7 L381.8 3291.6 L384.8 3295.5 L387.8 3299.4 L390.8 3303.2 L393.8 3306.8 L396.8 3310.3 L399.8 3313.5 L402.8 3316.4 L405.8 3319.1 L408.8 3321.5 L411.8 3323.8 L414.8 3326.0 L417.8 3328.0 L420.8 3330.0 L423.8 3331.8 L426.8 3333.5 L429.8 3335.1 L432.8 3336.7 L435.8 3338.1 L438.8 3339.4 L441.8 3340.3 L444.8 3340.3 L447.8 3339.2 L450.8 3337.1 L453.8 3334.5 L456.8 3331.5 L459.8 3328.4 L462.8 3325.1 L465.8 3321.6 L468.9 3318.1 L471.9 3314.5 L474.9 3310.8 L477.9 3307.0 L480.9 3303.0 L483.9 3298.7 L486.9 3294.2 L489.9 3289.5 L492.9 3284.8 L495.9 3280.4 L498.9 3276.3 L501.9 3272.7 L504.9 3269.6 L507.9 3267.0 L510.9 3264.8 L513.9 3262.9 L516.9 3261.3 L519.9 3260.1 L522.9 3259.2 L525.9 3258.9 L528.9 3259.1 L531.9 3260.2 L534.9 3262.1 L537.9 3265.0 L540.9 3268.6 L543.9 3272.6 L546.9 3277.1 L549.9 3282.0 L552.9 3287.3 L555.9 3292.8 L558.9 3298.3 L561.9 3303.7 L564.9 3308.8 L567.9 3313.4 L570.9 3317.7 L573.9 3321.5 L576.9 3325.2 L579.9 3328.5 L582.9 3331.4 L585.9 3333.9 L588.9 3335.9 L591.9 3337.2 L594.9 3337.8 L597.9 3337.6 L600.9 3336.9 L603.9 3335.4 L606.9 3333.5 L609.9 3331.1 L612.9 3328.4 L615.9 3325.5 L618.9 3322.3 L621.9 3318.8 L624.9 3315.0 L627.9 3310.8 L631.0 3306.5 L634.0 3302.2 L637.0 3297.8 L640.0 3293.5 L643.0 3289.5 L646.0 3285.7 L649.0 3282.3 L652.0 3279.2 L655.0 3276.4 L658.0 3273.8 L661.0 3271.4 L664.0 3269.1 L667.0 3267.0 L670.0 3265.1 L673.0 3263.3 L676.0 3261.8 L679.0 3260.5 L682.0 3259.6 L685.0 3259.2 L688.0 3259.5 L691.0 3260.7 L694.0 3263.0 L697.0 3265.8 L700.0 3269.1 L703.0 3272.7 L706.0 3276.7 L709.0 3280.8 L712.0 3285.1 L715.0 3289.5 L718.0 3293.7 L721.0 3297.9 L724.0 3301.9 L727.0 3305.6 L730.0 3309.1 L733.0 3312.5 L736.0 3315.7 L739.0 3319.0 L742.0 3322.1 L745.0 3325.1 L748.0 3328.0 L751.0 3330.7 L754.0 3333.1 L757.0 3335.2 L760.0 3337.0 L763.0 3338.2 L766.0 3339.0 L769.0 3339.1 L772.0 3338.6 L775.0 3337.5 L778.0 3335.8 L781.0 3333.6 L784.0 3331.1 L787.0 3328.4 L790.0 3325.5 L793.1 3322.6 L796.1 3319.5 L799.1 3316.2 L802.1 3312.6 L805.1 3308.9 L808.1 3305.1 L811.1 3301.2 L814.1 3297.4 L817.1 3293.5 L820.1 3289.8 L823.1 3286.3 L826.1 3282.9 L829.1 3279.8 L832.1 3276.8 L835.1 3273.9 L838.1 3271.2 L841.1 3268.7 L844.1 3266.4 L847.1 3264.6 L850.1 3263.3 L853.1 3262.6 L856.1 3262.6 L859.1 3263.4 L862.1 3265.0 L865.1 3267.4 L868.1 3270.3 L871.1 3273.6 L874.1 3277.0 L877.1 3280.7 L880.1 3284.7 L883.1 3289.0 L886.1 3293.5 L889.1 3298.1 L892.1 3302.5 L895.1 3306.7 L898.1 3310.6 L901.1 3314.2 L904.1 3317.4 L907.1 3320.4 L910.1 3323.4 L913.1 3326.2 L916.1 3328.8 L919.1 3331.3 L922.1 3333.5 L925.1 3335.3 L928.1 3336.8 L931.1 3337.8 L934.1 3338.3 L937.1 3338.1 L940.1 3337.1 L943.1 3335.5 L946.1 3333.2 L949.1 3330.4 L952.1 3327.3 L955.1 3323.9 L958.2 3320.5 L961.2 3317.1 L964.2 3314.0 L967.2 3311.2 L970.2 3308.4 L973.2 3305.6 L976.2 3302.9 L979.2 3300.4 L982.2 3298.1 L985.2 3296.1 L988.2 3294.3 L991.2 3292.7 L994.2 3291.4 L997.2 3290.1 L1000.2 3289.1 L1003.2 3288.3 L1006.2 3287.8 L1009.2 3287.7 L1012.2 3287.9 L1015.2 3288.4 L1018.2 3289.2 L1021.2 3290.4 L1024.2 3291.8 L1027.2 3293.5 L1030.2 3295.4 L1033.2 3297.4 L1036.2 3299.6 L1039.2 3302.0 L1042.2 3304.7 L1045.2 3307.6 L1048.2 3310.5 L1051.2 3313.5 L1054.2 3316.4 L1057.2 3319.2 L1060.2 3321.8 L1063.2 3324.1 L1066.2 3326.2 L1069.2 3328.2 L1072.2 3330.0 L1075.2 3331.7 L1078.2 3333.4 L1081.2 3335.0 L1084.2 3336.3 L1087.2 3337.5 L1090.2 3338.3 L1093.2 3338.9 L1096.2 3339.1 L1099.2 3338.9 L1102.2 3338.2 L1105.2 3337.1 L1108.2 3335.4 L1111.2 3333.3 L1114.2 3330.9 L1117.2 3328.3 L1120.3 3325.4 L1123.3 3322.4 L1126.3 3319.3 L1129.3 3316.2 L1132.3 3313.1 L1135.3 3310.1 L1138.3 3307.2 L1141.3 3304.2 L1144.3 3301.2 L1147.3 3298.0 L1150.3 3294.8 L1153.3 3291.6 L1156.3 3288.5 L1159.3 3285.6 L1162.3 3282.9 L1165.3 3280.5 L1168.3 3278.1 L1171.3 3276.0 L1174.3 3274.0 L1177.3 3272.2 L1180.3 3270.8 L1183.3 3269.6 L1186.3 3268.9 L1189.3 3268.5 L1192.3 3268.5 L1195.3 3268.9 L1198.3 3269.6 L1201.3 3270.8 L1204.3 3272.2 L1207.3 3274.0 L1210.3 3276.0 L1213.3 3278.2 L1216.3 3280.7 L1219.3 3283.4 L1222.3 3286.4 L1225.3 3289.5 L1228.3 3292.7 L1231.3 3296.0 L1234.3 3299.2 L1237.3 3302.4 L1240.3 3305.5 L1243.3 3308.4 L1246.3 3311.2 L1249.3 3313.9 L1252.3 3316.6 L1255.3 3319.3 L1258.3 3322.0 L1261.3 3324.6 L1264.3 3327.1 L1267.3 3329.5 L1270.3 3331.6 L1273.3 3333.5 L1276.3 3335.1 L1279.3 3336.1 L1282.3 3336.7 L1285.4 3336.6 L1288.4 3335.9 L1291.4 3334.7 L1294.4 3332.8 L1297.4 3330.4 L1300.4 3327.6 L1303.4 3324.4 L1306.4 3321.0 L1309.4 3317.4 L1312.4 3313.5 L1315.4 3309.3 L1318.4 3304.7 L1321.4 3299.8 L1324.4 3294.7 L1327.4 3289.6 L1330.4 3284.5 L1333.4 3279.6 L1336.4 3274.9 L1339.4 3270.7 L1342.4 3267.0 L1345.4 3263.7 L1348.4 3260.7 L1351.4 3257.9 L1354.4 3255.4 L1357.4 3253.1 L1360.4 3251.1 L1363.4 3249.4 L1366.4 3248.1 L1369.4 3247.1 L1372.4 3246.6 L1375.4 3246.8 L1378.4 3247.7 L1381.4 3249.7 L1384.4 3252.6 L1387.4 3256.1 L1390.4 3260.1 L1393.4 3264.5 L1396.4 3269.3 L1399.4 3274.5 L1402.4 3279.8 L1405.4 3285.3 L1408.4 3290.9 L1411.4 3296.4 L1414.4 3301.8 L1417.4 3307.1 L1420.4 3312.1 L1423.4 3317.0 L1426.4 3321.8 L1429.4 3326.1 L1432.4 3329.8 L1435.4 3332.5 L1438.4 3334.3 L1441.4 3335.1 L1444.4 3335.3 L1447.5 3335.1 L1450.5 3334.7 L1453.5 3334.4" fill="none" stroke="#8c46f0" stroke-width="3.2" stroke-linejoin="round" stroke-linecap="round"/>
<path d="M243.7 3287.1 L246.7 3285.0 L249.7 3282.0 L252.7 3278.3 L255.7 3273.8 L258.7 3268.0 L261.7 3260.8 L264.7 3252.4 L267.7 3243.3 L270.7 3233.8 L273.7 3224.3 L276.7 3215.1 L279.7 3206.5 L282.7 3198.3 L285.7 3190.5 L288.7 3183.0 L291.7 3175.8 L294.7 3169.0 L297.7 3162.7 L300.7 3156.9 L303.8 3151.9 L306.8 3147.5 L309.8 3143.8 L312.8 3141.2 L315.8 3139.5 L318.8 3138.8 L321.8 3138.9 L324.8 3139.7 L327.8 3141.3 L330.8 3143.4 L333.8 3146.1 L336.8 3149.2 L339.8 3152.8 L342.8 3156.7 L345.8 3161.1 L348.8 3165.7 L351.8 3170.6 L354.8 3175.7 L357.8 3180.8 L360.8 3186.0 L363.8 3191.3 L366.8 3196.5 L369.8 3201.8 L372.8 3207.3 L375.8 3213.0 L378.8 3218.8 L381.8 3224.5 L384.8 3230.2 L387.8 3235.7 L390.8 3241.0 L393.8 3245.9 L396.8 3250.3 L399.8 3254.4 L402.8 3258.2 L405.8 3261.6 L408.8 3264.9 L411.8 3267.8 L414.8 3270.5 L417.8 3272.9 L420.8 3274.9 L423.8 3276.5 L426.8 3277.6 L429.8 3278.0 L432.8 3277.6 L435.8 3276.1 L438.8 3273.5 L441.8 3269.6 L444.8 3264.9 L447.8 3259.4 L450.8 3253.6 L453.8 3247.4 L456.8 3240.6 L459.8 3233.3 L462.8 3225.7 L465.8 3218.0 L468.9 3210.4 L471.9 3203.0 L474.9 3196.1 L477.9 3189.7 L480.9 3183.8 L483.9 3178.2 L486.9 3172.9 L489.9 3167.8 L492.9 3162.9 L495.9 3158.4 L498.9 3154.2 L501.9 3150.4 L504.9 3147.1 L507.9 3144.6 L510.9 3142.9 L513.9 3142.3 L516.9 3143.1 L519.9 3145.4 L522.9 3148.8 L525.9 3153.1 L528.9 3157.9 L531.9 3163.2 L534.9 3169.0 L537.9 3175.3 L540.9 3181.9 L543.9 3188.7 L546.9 3195.5 L549.9 3202.3 L552.9 3209.0 L555.9 3215.6 L558.9 3222.4 L561.9 3229.4 L564.9 3236.6 L567.9 3243.8 L570.9 3251.1 L573.9 3258.3 L576.9 3265.3 L579.9 3272.0 L582.9 3278.4 L585.9 3284.3 L588.9 3289.5 L591.9 3293.8 L594.9 3297.0 L597.9 3298.8 L600.9 3299.0 L603.9 3297.6 L606.9 3294.5 L609.9 3289.9 L612.9 3284.6 L615.9 3278.9 L618.9 3273.0 L621.9 3266.7 L624.9 3259.9 L627.9 3252.5 L631.0 3244.7 L634.0 3236.8 L637.0 3228.9 L640.0 3221.0 L643.0 3213.5 L646.0 3206.3 L649.0 3199.6 L652.0 3193.4 L655.0 3187.8 L658.0 3182.6 L661.0 3177.7 L664.0 3173.1 L667.0 3168.7 L670.0 3164.5 L673.0 3160.5 L676.0 3156.7 L679.0 3153.2 L682.0 3149.9 L685.0 3147.0 L688.0 3144.5 L691.0 3142.6 L694.0 3141.3 L697.0 3141.1 L700.0 3142.1 L703.0 3144.7 L706.0 3148.6 L709.0 3153.3 L712.0 3158.5 L715.0 3164.1 L718.0 3170.1 L721.0 3176.8 L724.0 3183.7 L727.0 3190.9 L730.0 3198.1 L733.0 3205.3 L736.0 3212.2 L739.0 3218.9 L742.0 3225.5 L745.0 3232.1 L748.0 3238.8 L751.0 3245.5 L754.0 3252.0 L757.0 3258.1 L760.0 3263.5 L763.0 3268.0 L766.0 3271.2 L769.0 3273.0 L772.0 3273.3 L775.0 3272.2 L778.0 3269.7 L781.0 3266.1 L784.0 3261.6 L787.0 3256.5 L790.0 3251.1 L793.1 3245.5 L796.1 3239.4 L799.1 3232.7 L802.1 3225.5 L805.1 3218.0 L808.1 3210.4 L811.1 3202.7 L814.1 3195.3 L817.1 3188.1 L820.1 3181.3 L823.1 3174.4 L826.1 3167.2 L829.1 3160.3 L832.1 3154.6 L835.1 3150.9 L838.1 3149.3 L841.1 3149.4 L844.1 3150.8 L847.1 3153.2 L850.1 3156.3 L853.1 3159.8 L856.1 3163.7 L859.1 3167.8 L862.1 3172.2 L865.1 3176.8 L868.1 3181.5 L871.1 3186.4 L874.1 3191.4 L877.1 3196.5 L880.1 3201.7 L883.1 3207.1 L886.1 3212.9 L889.1 3219.2 L892.1 3226.0 L895.1 3233.1 L898.1 3240.5 L901.1 3247.8 L904.1 3255.0 L907.1 3261.7 L910.1 3268.0 L913.1 3273.9 L916.1 3279.7 L919.1 3285.3 L922.1 3290.3 L925.1 3294.6 L928.1 3297.7 L931.1 3299.3 L934.1 3299.1 L937.1 3297.2 L940.1 3293.4 L943.1 3288.0 L946.1 3281.3 L949.1 3273.5 L952.1 3264.7 L955.1 3254.5 L958.2 3243.0 L961.2 3230.7 L964.2 3218.2 L967.2 3206.2 L970.2 3195.3 L973.2 3185.7 L976.2 3177.4 L979.2 3169.9 L982.2 3163.3 L985.2 3157.7 L988.2 3153.0 L991.2 3149.5 L994.2 3147.2 L997.2 3146.2 L1000.2 3146.4 L1003.2 3147.8 L1006.2 3150.1 L1009.2 3153.1 L1012.2 3156.7 L1015.2 3160.8 L1018.2 3165.5 L1021.2 3170.6 L1024.2 3176.2 L1027.2 3182.0 L1030.2 3188.0 L1033.2 3194.1 L1036.2 3200.0 L1039.2 3205.9 L1042.2 3211.6 L1045.2 3217.2 L1048.2 3222.8 L1051.2 3228.5 L1054.2 3234.1 L1057.2 3239.8 L1060.2 3245.3 L1063.2 3250.9 L1066.2 3256.2 L1069.2 3261.5 L1072.2 3266.5 L1075.2 3271.4 L1078.2 3276.0 L1081.2 3280.5 L1084.2 3284.9 L1087.2 3289.0 L1090.2 3292.9 L1093.2 3296.2 L1096.2 3298.8 L1099.2 3300.6 L1102.2 3301.5 L1105.2 3301.3 L1108.2 3299.9 L1111.2 3297.5 L1114.2 3294.0 L1117.2 3289.6 L1120.3 3284.6 L1123.3 3279.0 L1126.3 3273.1 L1129.3 3266.6 L1132.3 3259.5 L1135.3 3252.0 L1138.3 3244.1 L1141.3 3236.2 L1144.3 3228.2 L1147.3 3220.4 L1150.3 3212.9 L1153.3 3205.8 L1156.3 3199.2 L1159.3 3192.9 L1162.3 3186.9 L1165.3 3181.2 L1168.3 3175.7 L1171.3 3170.4 L1174.3 3165.4 L1177.3 3160.6 L1180.3 3155.9 L1183.3 3151.4 L1186.3 3147.4 L1189.3 3144.3 L1192.3 3142.3 L1195.3 3141.7 L1198.3 3142.1 L1201.3 3143.4 L1204.3 3145.5 L1207.3 3148.6 L1210.3 3152.5 L1213.3 3157.3 L1216.3 3163.1 L1219.3 3169.8 L1222.3 3177.6 L1225.3 3186.0 L1228.3 3194.9 L1231.3 3203.9 L1234.3 3212.9 L1237.3 3221.5 L1240.3 3229.5 L1243.3 3236.6 L1246.3 3242.8 L1249.3 3248.0 L1252.3 3252.5 L1255.3 3256.3 L1258.3 3259.7 L1261.3 3262.9 L1264.3 3266.0 L1267.3 3269.4 L1270.3 3273.2 L1273.3 3277.4 L1276.3 3281.8 L1279.3 3286.1 L1282.3 3289.9 L1285.4 3292.7 L1288.4 3294.2 L1291.4 3294.2 L1294.4 3292.9 L1297.4 3290.4 L1300.4 3286.9 L1303.4 3282.7 L1306.4 3277.9 L1309.4 3272.6 L1312.4 3266.8 L1315.4 3260.3 L1318.4 3253.0 L1321.4 3245.5 L1324.4 3237.9 L1327.4 3230.6 L1330.4 3224.0 L1333.4 3218.2 L1336.4 3213.2 L1339.4 3208.9 L1342.4 3205.2 L1345.4 3201.8 L1348.4 3198.8 L1351.4 3196.1 L1354.4 3193.8 L1357.4 3191.8 L1360.4 3190.1 L1363.4 3189.0 L1366.4 3188.3 L1369.4 3188.3 L1372.4 3189.1 L1375.4 3190.7 L1378.4 3192.9 L1381.4 3195.5 L1384.4 3198.5 L1387.4 3201.9 L1390.4 3205.7 L1393.4 3209.8 L1396.4 3214.1 L1399.4 3218.5 L1402.4 3222.8 L1405.4 3227.0 L1408.4 3231.1 L1411.4 3234.9 L1414.4 3238.5 L1417.4 3241.8 L1420.4 3244.9 L1423.4 3247.8 L1426.4 3250.6 L1429.4 3253.4 L1432.4 3256.1 L1435.4 3258.7 L1438.4 3261.4 L1441.4 3263.9 L1444.4 3266.5 L1447.5 3269.1 L1450.5 3271.5 L1453.5 3273.3" fill="none" stroke="#17a57a" stroke-width="3.2" stroke-linejoin="round" stroke-linecap="round"/>
<path d="M3001 469 H2964 A35.5 35.5 0 0 0 2964 540 H3001 Z" fill="#222933" stroke="#343a43" stroke-width="2"/>
<path d="M2952.2 504 A13 13 0 1 1 2965.2 517 H2952.2 Z" fill="none" stroke="#f1f3f5" stroke-width="2.5" stroke-linejoin="round"/>
<path d="M2960 502.7 H2970.5 M2960 506.9 H2970.5" stroke="#f1f3f5" stroke-width="2.4" stroke-linecap="round"/>
</svg></body></html>
